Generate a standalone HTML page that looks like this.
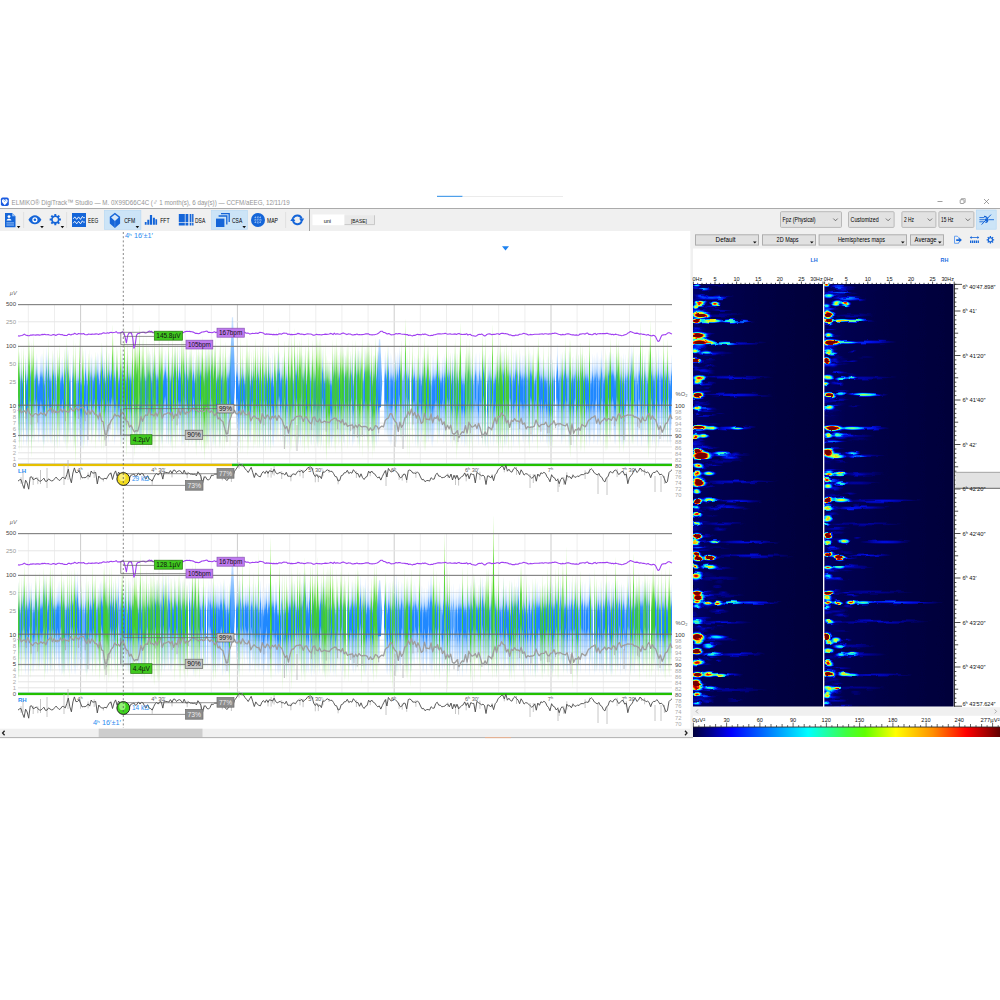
<!DOCTYPE html>
<html><head><meta charset="utf-8"><title>DigiTrack</title>
<style>
html,body{margin:0;padding:0;background:#fff;width:1000px;height:1000px;overflow:hidden}
svg{display:block;position:absolute;left:0;top:0}
text{font-family:"Liberation Sans",sans-serif;}
</style></head><body>
<svg width="1000" height="1000" viewBox="0 0 1000 1000">
<rect x="0.9" y="197.5" width="7.9" height="8.5" rx="1.8" fill="#1a5be0"/>
<path d="M1.9 201c0-2 2-2.4 2.9-1c.9-1.4 2.9-1 2.9 1c0 1.9-1.9 2.9-2.9 4.3c-1-1.4-2.9-2.4-2.9-4.3z" fill="#fff"/>
<path d="M3.6 200.6l1 .9l.9-1.300l.8 1.2" fill="none" stroke="#3c8cf0" stroke-width="0.6"/>
<text x="11.6" y="204.9" font-size="7.8" fill="#949494" textLength="278" lengthAdjust="spacingAndGlyphs">ELMIKO® DigiTrack™ Studio  —  M. 0X99D66C4C  (♂ 1 month(s), 6 day(s))  —  CCFM/aEEG, 12/11/19</text>
<rect x="463" y="196" width="100" height="0.8" fill="#e6e6e6"/>
<rect x="437" y="195.8" width="25.5" height="1.1" fill="#3c96e8"/>
<path d="M937.5 201.5h5" stroke="#777" stroke-width="0.7" fill="none"/>
<rect x="960.2" y="199.7" width="3.8" height="3.8" fill="none" stroke="#777" stroke-width="0.7" rx="0.6"/><path d="M961.4 199.4v-.8h3.8v3.8h-.9" fill="none" stroke="#777" stroke-width="0.6"/>
<path d="M984 199l5 5M989 199l-5 5" stroke="#777" stroke-width="0.7" fill="none"/>
<rect x="0" y="208" width="1000" height="1.2" fill="#ababab"/>
<rect x="0" y="209.2" width="1000" height="21.8" fill="#f0f0f0"/>
<rect x="690.5" y="231" width="309.5" height="17.5" fill="#f0f0f0"/>
<rect x="690.5" y="231" width="2.5" height="506.3" fill="#f0f0f0"/>
<path d="M5 213h7.2l3.3 3.3v11H5z" fill="#1565d8"/>
<path d="M12.2 213v3.3h3.3z" fill="#9cc3f5"/>
<circle cx="9" cy="216.6" r="1.4" fill="#fff"/><path d="M6.6 220.6c0-2.6 4.8-2.6 4.8 0z" fill="#fff"/>
<rect x="6.4" y="222.4" width="7.6" height="1" fill="#9cc3f5"/><rect x="6.4" y="224.5" width="7.6" height="1" fill="#9cc3f5"/>
<path d="M16.8 226h3.6l-1.8 2.2z" fill="#111"/>
<rect x="23.3" y="212" width="0.8" height="16" fill="#dcdcdc"/>
<path d="M28.4 219.8c3.4-6 9.6-6 13 0c-3.4 6-9.6 6-13 0z" fill="#1565d8"/>
<circle cx="34.9" cy="219.8" r="2.6" fill="#fff"/><circle cx="34.9" cy="219.8" r="1.3" fill="#1565d8"/>
<path d="M40.2 226h3.6l-1.8 2.2z" fill="#111"/>
<path d="M60.92 218.62L60.92 220.58L59.38 220.58L58.88 221.79L59.96 222.88L58.58 224.26L57.49 223.18L56.28 223.68L56.28 225.22L54.32 225.22L54.32 223.68L53.11 223.18L52.02 224.26L50.64 222.88L51.72 221.79L51.22 220.58L49.68 220.58L49.68 218.62L51.22 218.62L51.72 217.41L50.64 216.32L52.02 214.94L53.11 216.02L54.32 215.52L54.32 213.98L56.28 213.98L56.28 215.52L57.49 216.02L58.58 214.94L59.96 216.32L58.88 217.41L59.38 218.62z" fill="#1565d8"/><circle cx="55.3" cy="219.6" r="2.5" fill="#f0f0f0"/>
<path d="M60.6 226h3.6l-1.8 2.2z" fill="#111"/>
<rect x="66.3" y="212" width="0.8" height="16" fill="#dcdcdc"/>
<rect x="72" y="213" width="14" height="14" fill="#1565d8"/>
<path d="M73.2 218.8l1.6-1.9l1.9 2.5l1.9-2.5l1.9 2.5l1.9-3l1.4 1.7l1-.7" fill="none" stroke="#fff" stroke-width="0.9"/>
<path d="M73.2 223.2l1.6-1.9l1.9 2.5l1.9-2.5l1.9 2.5l1.9-3l1.4 1.7l1-.7" fill="none" stroke="#fff" stroke-width="0.9"/>
<text x="88" y="222.6" font-size="6.4" fill="#000" textLength="10.2" lengthAdjust="spacingAndGlyphs">EEG</text>
<rect x="104.3" y="210.3" width="36.6" height="19" fill="#cce4f7" stroke="#b5d7f3" stroke-width="0.6"/>
<path d="M114.9 212.8L120.1 216.8V223.6L114.9 228L109.8 223.6V216.8z" fill="#1565d8"/>
<path d="M114.9 214.4L118.7 217.4L114.9 221L111.1 217.4z" fill="#d4e6f8"/><path d="M114.9 221V228" stroke="#5b95e8" stroke-width="0.6"/>
<text x="124.2" y="222.6" font-size="6.4" fill="#000" textLength="11" lengthAdjust="spacingAndGlyphs">CFM</text>
<path d="M135.6 226h3.6l-1.8 2.2z" fill="#111"/>
<path d="M144.8 224.8v-2.8h1.8v2.8zM147.3 224.8v-5h2v5zM149.9 224.8v-9.8h2.2v9.8zM152.9 224.8v-7h2v7zM155.4 224.8v-5.6h1.7v5.6z" fill="#1565d8"/>
<text x="160.2" y="222.6" font-size="6.4" fill="#000" textLength="9.4" lengthAdjust="spacingAndGlyphs">FFT</text>
<rect x="178.8" y="214" width="6.0" height="8.3" fill="#1565d8"/><rect x="178.8" y="223" width="6.0" height="2.5" fill="#1565d8"/><rect x="185.5" y="214" width="2.8" height="8.3" fill="#1565d8"/><rect x="185.5" y="223" width="2.8" height="2.5" fill="#1565d8"/><rect x="189.7" y="214" width="1.7" height="8.3" fill="#1565d8"/><rect x="189.7" y="223" width="1.7" height="2.5" fill="#1565d8"/><rect x="192.1" y="214" width="1.4" height="8.3" fill="#1565d8"/><rect x="192.1" y="223" width="1.4" height="2.5" fill="#1565d8"/>
<text x="195" y="222.6" font-size="6.4" fill="#000" textLength="10.2" lengthAdjust="spacingAndGlyphs">DSA</text>
<rect x="211.5" y="210.3" width="36" height="19" fill="#cce4f7" stroke="#b5d7f3" stroke-width="0.6"/>
<path d="M221 213.6h8.2v8.4" fill="none" stroke="#1565d8" stroke-width="1.3"/><path d="M218.6 216h8.2v8.4" fill="none" stroke="#1565d8" stroke-width="1.3"/><rect x="216" y="218.6" width="8.4" height="8.4" fill="#1565d8"/>
<text x="232" y="222.6" font-size="6.4" fill="#000" textLength="10.2" lengthAdjust="spacingAndGlyphs">CSA</text>
<path d="M242.4 226h3.6l-1.8 2.2z" fill="#111"/>
<circle cx="258" cy="220" r="7" fill="#1565d8"/>
<path d="M255.6 216.4v7.2M258 216v8M260.4 216.4v7.2M254.4 217.6h7.2M254 220h8M254.4 222.4h7.2" stroke="#a9c8f5" stroke-width="0.7" stroke-dasharray="1.6 0.8" fill="none"/>
<text x="267" y="222.6" font-size="6.4" fill="#000" textLength="11" lengthAdjust="spacingAndGlyphs">MAP</text>
<rect x="285.3" y="212" width="0.8" height="16" fill="#dcdcdc"/>
<path d="M293.2 218A4.6 4.6 0 0 1 301.7 218.6" fill="none" stroke="#1565d8" stroke-width="1.9"/><path d="M299.2 218.5h5l-2.5 4.2z" fill="#1565d8"/>
<path d="M301.5 221.7A4.6 4.6 0 0 1 293 221" fill="none" stroke="#1565d8" stroke-width="1.9"/><path d="M290.3 221.1h5l-2.5-4.2z" fill="#1565d8"/>
<rect x="309" y="209.2" width="1" height="21.8" fill="#a2a2a2"/>
<rect x="312.5" y="214.5" width="32" height="10.7" fill="#fff"/>
<text x="327.4" y="222.5" font-size="6.2" fill="#111" text-anchor="middle" textLength="7.4" lengthAdjust="spacingAndGlyphs">uni</text>
<rect x="344.5" y="215.3" width="30" height="9.2" fill="#e9e9e9"/><path d="M344.5 224.6h30v-9.3" fill="none" stroke="#b8b8b8" stroke-width="0.7"/>
<text x="358.9" y="222.7" font-size="6.2" fill="#111" text-anchor="middle" textLength="16" lengthAdjust="spacingAndGlyphs">[BASE]</text>
<rect x="780.5" y="211.7" width="61" height="15.700000000000017" fill="#e2e2e2" stroke="#b9b9b9" stroke-width="1" rx="1"/>
<text x="782.6" y="221.85000000000002" font-size="6.5" fill="#000" textLength="33" lengthAdjust="spacingAndGlyphs">Fpz (Physical)</text>
<path d="M833.3 218.55l2.2 2.2l2.2 -2.2" fill="none" stroke="#444" stroke-width="0.7"/>
<rect x="848.5" y="211.7" width="45.60000000000002" height="15.700000000000017" fill="#e2e2e2" stroke="#b9b9b9" stroke-width="1" rx="1"/>
<text x="850.6" y="221.85000000000002" font-size="6.5" fill="#000" textLength="28" lengthAdjust="spacingAndGlyphs">Customized</text>
<path d="M885.9 218.55l2.2 2.2l2.2 -2.2" fill="none" stroke="#444" stroke-width="0.7"/>
<rect x="901.9" y="211.7" width="34.0" height="15.700000000000017" fill="#e2e2e2" stroke="#b9b9b9" stroke-width="1" rx="1"/>
<text x="904.0" y="221.85000000000002" font-size="6.5" fill="#000" textLength="10" lengthAdjust="spacingAndGlyphs">2 Hz</text>
<path d="M927.6999999999999 218.55l2.2 2.2l2.2 -2.2" fill="none" stroke="#444" stroke-width="0.7"/>
<rect x="938.9" y="211.7" width="35.0" height="15.700000000000017" fill="#e2e2e2" stroke="#b9b9b9" stroke-width="1" rx="1"/>
<text x="941.0" y="221.85000000000002" font-size="6.5" fill="#000" textLength="12.5" lengthAdjust="spacingAndGlyphs">15 Hz</text>
<path d="M965.6999999999999 218.55l2.2 2.2l2.2 -2.2" fill="none" stroke="#444" stroke-width="0.7"/>
<rect x="976.3" y="210" width="19.9" height="19.2" fill="#cce4f7" stroke="#b0d5f5" stroke-width="0.6"/>
<path d="M979.4 217.6h5M979.4 219.7h5.4M979.4 221.8h4.4M988.6 219.7h5.4" stroke="#1565d8" stroke-width="0.9" fill="none"/><path d="M984 216.4c2.4.2 3.6 1.6 3.8 3.4c.2 1.6-1.2 2.8-2.4 2.4" fill="none" stroke="#1565d8" stroke-width="1.3"/><circle cx="986.4" cy="219.8" r="1.6" fill="#1565d8"/><path d="M981.6 224.6l9.4-10" stroke="#1565d8" stroke-width="1"/>
<rect x="695.5" y="234.8" width="63" height="10.299999999999983" fill="#e1e1e1" stroke="#adadad" stroke-width="1"/>
<text x="725.6" y="242.25" font-size="6.7" fill="#000" text-anchor="middle" textLength="20" lengthAdjust="spacingAndGlyphs">Default</text>
<path d="M753 241.4h3.6l-1.8 2.2z" fill="#111"/>
<rect x="762.5" y="234.8" width="53" height="10.299999999999983" fill="#e1e1e1" stroke="#adadad" stroke-width="1"/>
<text x="787.6" y="242.25" font-size="6.7" fill="#000" text-anchor="middle" textLength="22" lengthAdjust="spacingAndGlyphs">2D Maps</text>
<path d="M810 241.4h3.6l-1.8 2.2z" fill="#111"/>
<rect x="819.1" y="234.8" width="87.39999999999998" height="10.299999999999983" fill="#e1e1e1" stroke="#adadad" stroke-width="1"/>
<text x="861.4" y="242.25" font-size="6.7" fill="#000" text-anchor="middle" textLength="47" lengthAdjust="spacingAndGlyphs">Hemispheres maps</text>
<path d="M901 241.4h3.6l-1.8 2.2z" fill="#111"/>
<rect x="910.5" y="234.8" width="33" height="10.299999999999983" fill="#e1e1e1" stroke="#adadad" stroke-width="1"/>
<text x="925.6" y="242.25" font-size="6.7" fill="#000" text-anchor="middle" textLength="22" lengthAdjust="spacingAndGlyphs">Average</text>
<path d="M938 241.4h3.6l-1.8 2.2z" fill="#111"/>
<path d="M954.5 236.2h2.8l1.4 1.4v1.2M958.7 242v1.3h-4.2v-7.1" fill="none" stroke="#5b9af0" stroke-width="0.9"/><path d="M956.2 239.3h3v-1.7l2.7 2.5l-2.7 2.5v-1.7h-3z" fill="#1565d8"/>
<path d="M971 237.5h7" stroke="#1565d8" stroke-width="0.8"/><path d="M971.6 236l-1.8 1.5l1.8 1.5zM977.4 236l1.8 1.5l-1.8 1.5z" fill="#1565d8"/><path d="M970 240.4v2.7h1.3v-2.7zM971.9 240.4v2.7h1.3v-2.7zM973.8 240.4v2.7h1.3v-2.7zM975.7 240.4v2.7h1.3v-2.7zM977.6 240.4v2.7h1.3v-2.7z" fill="#1565d8"/>
<path d="M994.14 239.15L994.14 240.45L993.03 240.43L992.70 241.21L993.51 241.99L992.59 242.91L991.81 242.10L991.03 242.43L991.05 243.54L989.75 243.54L989.77 242.43L988.99 242.10L988.21 242.91L987.29 241.99L988.10 241.21L987.77 240.43L986.66 240.45L986.66 239.15L987.77 239.17L988.10 238.39L987.29 237.61L988.21 236.69L988.99 237.50L989.77 237.17L989.75 236.06L991.05 236.06L991.03 237.17L991.81 237.50L992.59 236.69L993.51 237.61L992.70 238.39L993.03 239.17z" fill="#1565d8"/><circle cx="990.4" cy="239.8" r="1.5" fill="#f0f0f0"/>
<text x="814" y="262" font-size="5.4" fill="#1a6de0" text-anchor="middle" font-weight="bold">LH</text>
<text x="944.5" y="262" font-size="5.4" fill="#1a6de0" text-anchor="middle" font-weight="bold">RH</text>
<text x="125" y="238.4" font-size="6.6" fill="#2b8cf0" textLength="28" lengthAdjust="spacingAndGlyphs">4ʰ 16′±1′</text>
<path d="M502 246.2h7l-3.5 4.2z" fill="#1e82f0"/>
<rect x="0" y="728.7" width="690.5" height="8.6" fill="#f0f0f0"/>
<rect x="98.7" y="728.7" width="103.8" height="8.6" fill="#cdcdcd"/>
<path d="M4.6 730.8l-2 2.2l2 2.2" fill="none" stroke="#222" stroke-width="1.3"/>
<path d="M685 730.8l2 2.2l-2 2.2" fill="none" stroke="#222" stroke-width="1.3"/>
<rect x="0" y="737.2" width="693" height="0.9" fill="#a6a6a6"/>
<rect x="485" y="737.2" width="26" height="0.9" fill="#eeb08c"/>
<defs>
<linearGradient id="gB" x1="0" y1="0" x2="0" y2="1"><stop offset="0" stop-color="#4a9eff" stop-opacity="0.02"/><stop offset="0.1" stop-color="#4a9eff" stop-opacity="0.14"/><stop offset="0.2" stop-color="#4a9eff" stop-opacity="0.42"/><stop offset="0.29" stop-color="#1482ff" stop-opacity="0.84"/><stop offset="0.38" stop-color="#1482ff" stop-opacity="0.95"/><stop offset="0.57" stop-color="#1482ff" stop-opacity="0.95"/><stop offset="0.67" stop-color="#4a9eff" stop-opacity="0.64"/><stop offset="0.8" stop-color="#4a9eff" stop-opacity="0.38"/><stop offset="0.92" stop-color="#4a9eff" stop-opacity="0.17"/><stop offset="1" stop-color="#4a9eff" stop-opacity="0.03"/></linearGradient>
<linearGradient id="gG" x1="0" y1="0" x2="0" y2="1"><stop offset="0" stop-color="#7ee544" stop-opacity="0.03"/><stop offset="0.09" stop-color="#7ee544" stop-opacity="0.2"/><stop offset="0.19" stop-color="#7ee544" stop-opacity="0.5"/><stop offset="0.28" stop-color="#44d418" stop-opacity="0.76"/><stop offset="0.37" stop-color="#44d418" stop-opacity="0.86"/><stop offset="0.58" stop-color="#44d418" stop-opacity="0.86"/><stop offset="0.68" stop-color="#7ee544" stop-opacity="0.58"/><stop offset="0.8" stop-color="#7ee544" stop-opacity="0.36"/><stop offset="0.92" stop-color="#7ee544" stop-opacity="0.17"/><stop offset="1" stop-color="#7ee544" stop-opacity="0.03"/></linearGradient>
<linearGradient id="gS" x1="0" y1="0" x2="0" y2="1"><stop offset="0" stop-color="#4aa0ff" stop-opacity="0.25"/><stop offset="0.5" stop-color="#3a96ff" stop-opacity="0.8"/><stop offset="1" stop-color="#1a84ff" stop-opacity="0.95"/></linearGradient>
</defs>
<g id="chart0">
<rect x="27.8" y="304.8" width="1" height="159.9" fill="#eeeeee"/>
<rect x="54.0" y="304.8" width="1" height="159.9" fill="#eeeeee"/>
<rect x="80.1" y="304.8" width="1" height="159.9" fill="#cdcdcd"/>
<rect x="106.2" y="304.8" width="1" height="159.9" fill="#eeeeee"/>
<rect x="132.4" y="304.8" width="1" height="159.9" fill="#eeeeee"/>
<rect x="158.5" y="304.8" width="1" height="159.9" fill="#eeeeee"/>
<rect x="184.6" y="304.8" width="1" height="159.9" fill="#eeeeee"/>
<rect x="210.8" y="304.8" width="1" height="159.9" fill="#eeeeee"/>
<rect x="236.9" y="304.8" width="1" height="159.9" fill="#cdcdcd"/>
<rect x="263.0" y="304.8" width="1" height="159.9" fill="#eeeeee"/>
<rect x="289.2" y="304.8" width="1" height="159.9" fill="#eeeeee"/>
<rect x="315.3" y="304.8" width="1" height="159.9" fill="#eeeeee"/>
<rect x="341.4" y="304.8" width="1" height="159.9" fill="#eeeeee"/>
<rect x="367.6" y="304.8" width="1" height="159.9" fill="#eeeeee"/>
<rect x="393.7" y="304.8" width="1" height="159.9" fill="#cdcdcd"/>
<rect x="419.8" y="304.8" width="1" height="159.9" fill="#eeeeee"/>
<rect x="446.0" y="304.8" width="1" height="159.9" fill="#eeeeee"/>
<rect x="472.1" y="304.8" width="1" height="159.9" fill="#eeeeee"/>
<rect x="498.2" y="304.8" width="1" height="159.9" fill="#eeeeee"/>
<rect x="524.4" y="304.8" width="1" height="159.9" fill="#eeeeee"/>
<rect x="550.5" y="304.8" width="1" height="159.9" fill="#cdcdcd"/>
<rect x="576.6" y="304.8" width="1" height="159.9" fill="#eeeeee"/>
<rect x="602.8" y="304.8" width="1" height="159.9" fill="#eeeeee"/>
<rect x="628.9" y="304.8" width="1" height="159.9" fill="#eeeeee"/>
<rect x="655.0" y="304.8" width="1" height="159.9" fill="#eeeeee"/>
<rect x="18.0" y="321.3" width="654.0" height="1" fill="#e6e6e6"/>
<rect x="18.0" y="363.0" width="654.0" height="1" fill="#e6e6e6"/>
<rect x="18.0" y="381.0" width="654.0" height="1" fill="#e6e6e6"/>
<rect x="18.0" y="410.7" width="654.0" height="1" fill="#e4e4e4"/>
<rect x="18.0" y="416.7" width="654.0" height="1" fill="#e4e4e4"/>
<rect x="18.0" y="422.6" width="654.0" height="1" fill="#e4e4e4"/>
<rect x="18.0" y="428.6" width="654.0" height="1" fill="#e4e4e4"/>
<rect x="18.0" y="440.4" width="654.0" height="1" fill="#e4e4e4"/>
<rect x="18.0" y="446.4" width="654.0" height="1" fill="#e4e4e4"/>
<rect x="18.0" y="452.3" width="654.0" height="1" fill="#e4e4e4"/>
<rect x="18.0" y="458.3" width="654.0" height="1" fill="#e4e4e4"/>
<g fill="url(#gB)"><rect x="18" y="360.8" width="1" height="78.9" opacity="1"/><rect x="19" y="353.4" width="1" height="89.7" opacity="1"/><rect x="20" y="359.3" width="1" height="82.0" opacity="0.85"/><rect x="21" y="358.0" width="1" height="79.0" opacity="1"/><rect x="22" y="363.9" width="1" height="68.7" opacity="1"/><rect x="23" y="362.2" width="1" height="83.3" opacity="1"/><rect x="25" y="354.6" width="1" height="76.3" opacity="1"/><rect x="26" y="360.6" width="1" height="85.5" opacity="1"/><rect x="27" y="356.3" width="1" height="85.2" opacity="1"/><rect x="28" y="353.4" width="1" height="89.3" opacity="1"/><rect x="29" y="359.3" width="1" height="70.5" opacity="1"/><rect x="30" y="353.3" width="1" height="82.7" opacity="0.85"/><rect x="31" y="358.5" width="1" height="87.5" opacity="1"/><rect x="32" y="358.2" width="1" height="81.5" opacity="1"/><rect x="33" y="363.3" width="1" height="70.4" opacity="1"/><rect x="34" y="355.8" width="1" height="86.6" opacity="0.7"/><rect x="35" y="359.6" width="1" height="69.0" opacity="1"/><rect x="36" y="353.4" width="1" height="75.9" opacity="1"/><rect x="37" y="357.5" width="1" height="74.9" opacity="1"/><rect x="38" y="364.2" width="1" height="78.7" opacity="1"/><rect x="39" y="363.5" width="1" height="73.7" opacity="1"/><rect x="40" y="355.7" width="1" height="76.2" opacity="1"/><rect x="41" y="354.0" width="1" height="82.0" opacity="1"/><rect x="42" y="353.6" width="1" height="88.5" opacity="1"/><rect x="43" y="357.3" width="1" height="89.5" opacity="1"/><rect x="44" y="361.8" width="1" height="83.0" opacity="1"/><rect x="45" y="353.6" width="1" height="85.3" opacity="0.7"/><rect x="46" y="347.3" width="1" height="88.5" opacity="1"/><rect x="47" y="354.9" width="1" height="88.1" opacity="0.85"/><rect x="48" y="352.3" width="1" height="77.1" opacity="1"/><rect x="49" y="357.9" width="1" height="81.8" opacity="1"/><rect x="50" y="357.9" width="1" height="85.2" opacity="1"/><rect x="51" y="357.8" width="1" height="86.0" opacity="0.7"/><rect x="52" y="361.8" width="1" height="73.1" opacity="1"/><rect x="53" y="353.5" width="1" height="78.8" opacity="1"/><rect x="54" y="352.8" width="1" height="94.3" opacity="0.7"/><rect x="55" y="356.3" width="1" height="77.3" opacity="0.85"/><rect x="56" y="361.6" width="1" height="84.7" opacity="0.7"/><rect x="57" y="360.6" width="1" height="68.2" opacity="1"/><rect x="58" y="357.9" width="1" height="72.8" opacity="1"/><rect x="59" y="356.4" width="1" height="90.6" opacity="0.7"/><rect x="60" y="362.0" width="1" height="74.4" opacity="1"/><rect x="61" y="359.1" width="1" height="76.5" opacity="1"/><rect x="62" y="356.9" width="1" height="72.9" opacity="1"/><rect x="63" y="361.8" width="1" height="80.3" opacity="1"/><rect x="64" y="360.7" width="1" height="76.7" opacity="1"/><rect x="65" y="347.7" width="1" height="98.9" opacity="0.85"/><rect x="67" y="345.2" width="1" height="97.7" opacity="1"/><rect x="68" y="363.6" width="1" height="69.7" opacity="1"/><rect x="69" y="360.9" width="1" height="75.4" opacity="1"/><rect x="70" y="357.2" width="1" height="85.7" opacity="0.7"/><rect x="72" y="354.6" width="1" height="86.0" opacity="0.85"/><rect x="73" y="355.7" width="1" height="80.5" opacity="1"/><rect x="74" y="362.1" width="1" height="84.6" opacity="0.7"/><rect x="75" y="363.5" width="1" height="69.3" opacity="1"/><rect x="76" y="362.6" width="1" height="75.9" opacity="0.7"/><rect x="77" y="357.3" width="1" height="89.9" opacity="0.7"/><rect x="78" y="363.3" width="1" height="70.2" opacity="1"/><rect x="79" y="357.5" width="1" height="80.1" opacity="1"/><rect x="80" y="359.4" width="1" height="88.9" opacity="1"/><rect x="81" y="360.3" width="1" height="88.3" opacity="1"/><rect x="82" y="364.1" width="1" height="84.6" opacity="0.7"/><rect x="83" y="359.4" width="1" height="79.2" opacity="0.7"/><rect x="84" y="362.5" width="1" height="82.8" opacity="1"/><rect x="85" y="349.3" width="1" height="87.5" opacity="1"/><rect x="86" y="358.3" width="1" height="80.1" opacity="0.85"/><rect x="87" y="361.4" width="1" height="85.2" opacity="1"/><rect x="88" y="359.7" width="1" height="69.3" opacity="1"/><rect x="89" y="362.5" width="1" height="69.4" opacity="1"/><rect x="90" y="356.6" width="1" height="74.4" opacity="0.85"/><rect x="91" y="354.0" width="1" height="82.5" opacity="1"/><rect x="92" y="356.7" width="1" height="83.7" opacity="0.85"/><rect x="93" y="361.3" width="1" height="73.2" opacity="1"/><rect x="94" y="358.5" width="1" height="69.8" opacity="1"/><rect x="95" y="356.8" width="1" height="80.9" opacity="1"/><rect x="96" y="356.1" width="1" height="75.6" opacity="1"/><rect x="97" y="352.5" width="1" height="81.0" opacity="1"/><rect x="98" y="354.2" width="1" height="87.4" opacity="1"/><rect x="99" y="362.3" width="1" height="80.1" opacity="1"/><rect x="100" y="351.8" width="1" height="85.4" opacity="1"/><rect x="101" y="353.1" width="1" height="84.1" opacity="0.7"/><rect x="102" y="344.9" width="1" height="92.3" opacity="1"/><rect x="103" y="360.9" width="1" height="65.9" opacity="1"/><rect x="104" y="357.1" width="1" height="74.5" opacity="1"/><rect x="105" y="360.8" width="1" height="79.6" opacity="1"/><rect x="106" y="349.8" width="1" height="92.8" opacity="0.85"/><rect x="107" y="357.1" width="1" height="75.2" opacity="1"/><rect x="108" y="361.5" width="1" height="81.2" opacity="1"/><rect x="109" y="353.2" width="1" height="82.0" opacity="1"/><rect x="110" y="360.1" width="1" height="73.5" opacity="1"/><rect x="111" y="354.2" width="1" height="74.7" opacity="1"/><rect x="112" y="358.4" width="1" height="69.5" opacity="1"/><rect x="113" y="361.2" width="1" height="66.5" opacity="1"/><rect x="114" y="351.4" width="1" height="93.3" opacity="1"/><rect x="115" y="359.6" width="1" height="79.5" opacity="0.85"/><rect x="116" y="355.4" width="1" height="74.2" opacity="1"/><rect x="117" y="358.2" width="1" height="79.5" opacity="1"/><rect x="118" y="361.7" width="1" height="76.5" opacity="1"/><rect x="119" y="357.8" width="1" height="79.9" opacity="1"/><rect x="120" y="362.6" width="1" height="67.7" opacity="1"/><rect x="121" y="359.0" width="1" height="86.9" opacity="0.85"/><rect x="122" y="347.4" width="1" height="93.5" opacity="0.85"/><rect x="123" y="358.1" width="1" height="85.4" opacity="1"/><rect x="124" y="356.6" width="1" height="85.2" opacity="1"/><rect x="125" y="357.4" width="1" height="83.6" opacity="1"/><rect x="126" y="361.7" width="1" height="73.6" opacity="0.85"/><rect x="127" y="357.9" width="1" height="71.6" opacity="0.85"/><rect x="128" y="354.7" width="1" height="84.8" opacity="1"/><rect x="129" y="363.5" width="1" height="65.8" opacity="1"/><rect x="130" y="355.6" width="1" height="86.8" opacity="1"/><rect x="131" y="357.8" width="1" height="87.4" opacity="1"/><rect x="133" y="358.7" width="1" height="73.3" opacity="0.7"/><rect x="134" y="360.4" width="1" height="74.7" opacity="1"/><rect x="135" y="357.2" width="1" height="85.5" opacity="1"/><rect x="136" y="352.8" width="1" height="93.6" opacity="1"/><rect x="137" y="354.1" width="1" height="84.3" opacity="1"/><rect x="139" y="359.6" width="1" height="85.7" opacity="1"/><rect x="140" y="358.7" width="1" height="85.6" opacity="1"/><rect x="141" y="355.6" width="1" height="88.8" opacity="1"/><rect x="142" y="356.2" width="1" height="71.9" opacity="1"/><rect x="143" y="359.1" width="1" height="79.9" opacity="1"/><rect x="144" y="357.3" width="1" height="73.5" opacity="1"/><rect x="145" y="360.9" width="1" height="72.8" opacity="0.85"/><rect x="146" y="357.3" width="1" height="86.0" opacity="1"/><rect x="147" y="353.2" width="1" height="89.6" opacity="1"/><rect x="148" y="353.4" width="1" height="78.5" opacity="1"/><rect x="149" y="350.9" width="1" height="92.2" opacity="0.7"/><rect x="150" y="354.0" width="1" height="83.6" opacity="1"/><rect x="151" y="357.8" width="1" height="88.2" opacity="1"/><rect x="152" y="359.9" width="1" height="81.1" opacity="0.85"/><rect x="153" y="351.9" width="1" height="77.9" opacity="1"/><rect x="154" y="355.3" width="1" height="84.2" opacity="0.85"/><rect x="155" y="354.4" width="1" height="76.5" opacity="1"/><rect x="156" y="358.5" width="1" height="77.1" opacity="0.85"/><rect x="157" y="357.3" width="1" height="79.0" opacity="1"/><rect x="158" y="361.5" width="1" height="70.2" opacity="1"/><rect x="159" y="355.3" width="1" height="85.3" opacity="1"/><rect x="160" y="353.7" width="1" height="82.9" opacity="1"/><rect x="161" y="358.0" width="1" height="86.7" opacity="1"/><rect x="162" y="361.6" width="1" height="82.2" opacity="1"/><rect x="163" y="359.4" width="1" height="75.3" opacity="1"/><rect x="164" y="354.7" width="1" height="73.4" opacity="1"/><rect x="165" y="350.2" width="1" height="78.7" opacity="1"/><rect x="166" y="353.7" width="1" height="89.9" opacity="1"/><rect x="167" y="355.4" width="1" height="84.6" opacity="0.7"/><rect x="168" y="351.8" width="1" height="93.0" opacity="1"/><rect x="169" y="359.7" width="1" height="74.6" opacity="0.7"/><rect x="170" y="357.7" width="1" height="88.4" opacity="1"/><rect x="171" y="355.2" width="1" height="85.9" opacity="1"/><rect x="173" y="354.3" width="1" height="83.8" opacity="1"/><rect x="174" y="352.4" width="1" height="86.5" opacity="0.85"/><rect x="175" y="347.8" width="1" height="89.2" opacity="1"/><rect x="176" y="352.2" width="1" height="89.1" opacity="0.7"/><rect x="177" y="357.4" width="1" height="70.9" opacity="1"/><rect x="178" y="361.9" width="1" height="66.1" opacity="1"/><rect x="179" y="346.1" width="1" height="95.7" opacity="1"/><rect x="180" y="356.4" width="1" height="77.3" opacity="1"/><rect x="181" y="355.8" width="1" height="78.6" opacity="0.85"/><rect x="182" y="360.5" width="1" height="84.7" opacity="1"/><rect x="183" y="357.5" width="1" height="86.8" opacity="1"/><rect x="184" y="352.0" width="1" height="79.5" opacity="1"/><rect x="185" y="355.9" width="1" height="78.4" opacity="0.7"/><rect x="186" y="352.0" width="1" height="80.5" opacity="1"/><rect x="187" y="357.1" width="1" height="81.2" opacity="1"/><rect x="188" y="358.1" width="1" height="84.5" opacity="1"/><rect x="189" y="353.8" width="1" height="89.6" opacity="1"/><rect x="190" y="351.3" width="1" height="87.2" opacity="1"/><rect x="191" y="360.9" width="1" height="69.0" opacity="0.85"/><rect x="192" y="356.6" width="1" height="87.2" opacity="1"/><rect x="193" y="354.4" width="1" height="73.3" opacity="1"/><rect x="194" y="361.7" width="1" height="75.5" opacity="1"/><rect x="195" y="360.0" width="1" height="68.4" opacity="1"/><rect x="196" y="359.6" width="1" height="86.9" opacity="0.85"/><rect x="197" y="352.0" width="1" height="82.5" opacity="0.85"/><rect x="198" y="355.5" width="1" height="82.4" opacity="1"/><rect x="199" y="356.9" width="1" height="88.7" opacity="1"/><rect x="200" y="353.0" width="1" height="80.2" opacity="1"/><rect x="201" y="354.7" width="1" height="80.1" opacity="1"/><rect x="202" y="354.6" width="1" height="84.3" opacity="0.85"/><rect x="203" y="359.0" width="1" height="80.9" opacity="1"/><rect x="204" y="356.0" width="1" height="80.9" opacity="0.7"/><rect x="205" y="359.1" width="1" height="76.4" opacity="1"/><rect x="206" y="346.7" width="1" height="94.4" opacity="1"/><rect x="207" y="351.7" width="1" height="92.5" opacity="1"/><rect x="208" y="357.5" width="1" height="73.9" opacity="0.85"/><rect x="209" y="354.2" width="1" height="86.8" opacity="1"/><rect x="210" y="348.5" width="1" height="97.9" opacity="0.7"/><rect x="211" y="346.1" width="1" height="88.3" opacity="0.7"/><rect x="212" y="354.2" width="1" height="81.1" opacity="1"/><rect x="213" y="360.8" width="1" height="85.0" opacity="1"/><rect x="214" y="349.3" width="1" height="79.5" opacity="1"/><rect x="215" y="356.3" width="1" height="90.0" opacity="0.7"/><rect x="216" y="361.6" width="1" height="75.9" opacity="1"/><rect x="217" y="355.5" width="1" height="82.2" opacity="0.85"/><rect x="218" y="359.8" width="1" height="71.1" opacity="1"/><rect x="219" y="356.2" width="1" height="90.7" opacity="1"/><rect x="220" y="354.5" width="1" height="89.0" opacity="0.85"/><rect x="221" y="360.1" width="1" height="71.9" opacity="1"/><rect x="222" y="353.1" width="1" height="86.8" opacity="0.85"/><rect x="223" y="363.2" width="1" height="71.7" opacity="0.85"/><rect x="224" y="358.0" width="1" height="80.2" opacity="0.7"/><rect x="225" y="358.8" width="1" height="81.7" opacity="1"/><rect x="226" y="360.8" width="1" height="76.7" opacity="1"/><rect x="227" y="356.4" width="1" height="76.5" opacity="0.85"/><rect x="228" y="354.4" width="1" height="86.2" opacity="1"/><rect x="229" y="353.3" width="1" height="77.2" opacity="1"/><rect x="230" y="360.4" width="1" height="78.5" opacity="0.7"/><rect x="236" y="355.4" width="1" height="75.6" opacity="1"/><rect x="237" y="357.4" width="1" height="70.6" opacity="1"/><rect x="238" y="362.8" width="1" height="84.7" opacity="1"/><rect x="239" y="362.3" width="1" height="80.8" opacity="1"/><rect x="240" y="364.9" width="1" height="64.0" opacity="1"/><rect x="241" y="359.0" width="1" height="72.6" opacity="1"/><rect x="242" y="359.2" width="1" height="81.6" opacity="1"/><rect x="243" y="359.8" width="1" height="69.3" opacity="1"/><rect x="244" y="363.3" width="1" height="74.9" opacity="1"/><rect x="245" y="362.9" width="1" height="76.7" opacity="1"/><rect x="246" y="357.3" width="1" height="72.1" opacity="0.85"/><rect x="247" y="358.3" width="1" height="84.4" opacity="1"/><rect x="248" y="356.3" width="1" height="75.0" opacity="1"/><rect x="249" y="358.4" width="1" height="81.6" opacity="1"/><rect x="250" y="364.1" width="1" height="78.6" opacity="1"/><rect x="251" y="361.1" width="1" height="68.0" opacity="1"/><rect x="252" y="362.4" width="1" height="66.3" opacity="1"/><rect x="253" y="355.8" width="1" height="76.5" opacity="0.85"/><rect x="254" y="362.8" width="1" height="66.3" opacity="0.85"/><rect x="255" y="360.6" width="1" height="74.0" opacity="1"/><rect x="256" y="357.3" width="1" height="83.2" opacity="0.85"/><rect x="257" y="363.6" width="1" height="65.3" opacity="1"/><rect x="258" y="354.3" width="1" height="84.9" opacity="1"/><rect x="259" y="360.8" width="1" height="86.5" opacity="0.7"/><rect x="260" y="356.4" width="1" height="74.2" opacity="0.7"/><rect x="261" y="360.4" width="1" height="77.8" opacity="0.85"/><rect x="262" y="364.0" width="1" height="71.4" opacity="1"/><rect x="263" y="358.6" width="1" height="89.7" opacity="0.7"/><rect x="264" y="355.7" width="1" height="78.2" opacity="0.85"/><rect x="265" y="364.5" width="1" height="80.1" opacity="1"/><rect x="266" y="359.4" width="1" height="69.7" opacity="1"/><rect x="267" y="362.9" width="1" height="71.8" opacity="1"/><rect x="268" y="344.6" width="1" height="102.5" opacity="1"/><rect x="269" y="355.8" width="1" height="81.4" opacity="1"/><rect x="270" y="357.9" width="1" height="90.1" opacity="0.85"/><rect x="271" y="363.1" width="1" height="68.8" opacity="1"/><rect x="272" y="352.8" width="1" height="92.1" opacity="1"/><rect x="273" y="363.1" width="1" height="84.1" opacity="1"/><rect x="274" y="355.1" width="1" height="81.3" opacity="0.85"/><rect x="275" y="362.5" width="1" height="66.9" opacity="0.85"/><rect x="276" y="360.2" width="1" height="80.3" opacity="0.85"/><rect x="277" y="351.0" width="1" height="83.2" opacity="1"/><rect x="278" y="352.5" width="1" height="76.4" opacity="1"/><rect x="279" y="352.3" width="1" height="76.0" opacity="1"/><rect x="280" y="359.7" width="1" height="81.7" opacity="1"/><rect x="281" y="359.3" width="1" height="73.3" opacity="1"/><rect x="282" y="357.0" width="1" height="84.8" opacity="0.85"/><rect x="283" y="357.7" width="1" height="81.5" opacity="0.85"/><rect x="284" y="352.9" width="1" height="76.3" opacity="0.85"/><rect x="285" y="360.8" width="1" height="83.9" opacity="1"/><rect x="286" y="355.6" width="1" height="85.2" opacity="1"/><rect x="287" y="356.7" width="1" height="90.1" opacity="0.7"/><rect x="288" y="357.3" width="1" height="73.5" opacity="1"/><rect x="289" y="363.1" width="1" height="82.6" opacity="1"/><rect x="290" y="359.9" width="1" height="74.6" opacity="0.85"/><rect x="291" y="356.2" width="1" height="77.5" opacity="1"/><rect x="292" y="359.9" width="1" height="80.9" opacity="1"/><rect x="293" y="362.7" width="1" height="73.9" opacity="0.85"/><rect x="294" y="356.4" width="1" height="84.4" opacity="0.7"/><rect x="295" y="352.7" width="1" height="78.5" opacity="1"/><rect x="296" y="353.9" width="1" height="77.0" opacity="1"/><rect x="297" y="354.7" width="1" height="75.4" opacity="0.7"/><rect x="298" y="354.3" width="1" height="92.0" opacity="1"/><rect x="299" y="362.1" width="1" height="76.3" opacity="1"/><rect x="300" y="357.5" width="1" height="88.4" opacity="1"/><rect x="301" y="352.5" width="1" height="86.0" opacity="0.7"/><rect x="302" y="355.3" width="1" height="84.7" opacity="0.7"/><rect x="303" y="362.0" width="1" height="69.1" opacity="1"/><rect x="304" y="354.5" width="1" height="75.1" opacity="1"/><rect x="305" y="362.2" width="1" height="78.6" opacity="1"/><rect x="306" y="362.7" width="1" height="79.0" opacity="1"/><rect x="307" y="357.1" width="1" height="83.0" opacity="1"/><rect x="308" y="351.8" width="1" height="76.7" opacity="0.85"/><rect x="309" y="359.0" width="1" height="80.0" opacity="1"/><rect x="310" y="356.6" width="1" height="87.6" opacity="0.85"/><rect x="311" y="355.7" width="1" height="89.5" opacity="0.7"/><rect x="312" y="356.0" width="1" height="76.1" opacity="0.7"/><rect x="313" y="358.6" width="1" height="85.8" opacity="0.85"/><rect x="314" y="361.0" width="1" height="76.1" opacity="1"/><rect x="315" y="357.8" width="1" height="82.0" opacity="1"/><rect x="316" y="356.2" width="1" height="86.3" opacity="1"/><rect x="317" y="362.8" width="1" height="84.6" opacity="1"/><rect x="318" y="357.4" width="1" height="85.4" opacity="1"/><rect x="319" y="362.6" width="1" height="78.6" opacity="1"/><rect x="320" y="363.0" width="1" height="69.6" opacity="1"/><rect x="321" y="360.0" width="1" height="86.1" opacity="1"/><rect x="322" y="349.3" width="1" height="84.3" opacity="1"/><rect x="323" y="361.3" width="1" height="73.4" opacity="1"/><rect x="324" y="363.3" width="1" height="71.1" opacity="1"/><rect x="325" y="363.6" width="1" height="68.8" opacity="1"/><rect x="326" y="362.9" width="1" height="65.0" opacity="1"/><rect x="327" y="362.6" width="1" height="82.4" opacity="0.85"/><rect x="328" y="364.2" width="1" height="64.1" opacity="1"/><rect x="329" y="361.5" width="1" height="82.3" opacity="0.7"/><rect x="330" y="362.2" width="1" height="80.0" opacity="1"/><rect x="331" y="361.7" width="1" height="86.0" opacity="1"/><rect x="332" y="361.1" width="1" height="81.0" opacity="1"/><rect x="333" y="353.5" width="1" height="87.3" opacity="1"/><rect x="334" y="353.7" width="1" height="79.6" opacity="1"/><rect x="335" y="363.0" width="1" height="75.9" opacity="1"/><rect x="336" y="355.7" width="1" height="75.8" opacity="1"/><rect x="337" y="359.9" width="1" height="80.4" opacity="1"/><rect x="338" y="361.1" width="1" height="68.7" opacity="0.7"/><rect x="339" y="352.5" width="1" height="91.0" opacity="1"/><rect x="340" y="362.7" width="1" height="79.4" opacity="1"/><rect x="341" y="362.2" width="1" height="75.2" opacity="0.7"/><rect x="342" y="356.2" width="1" height="74.4" opacity="1"/><rect x="343" y="353.3" width="1" height="89.4" opacity="1"/><rect x="344" y="354.3" width="1" height="92.3" opacity="0.7"/><rect x="345" y="355.4" width="1" height="76.7" opacity="1"/><rect x="346" y="357.5" width="1" height="76.9" opacity="1"/><rect x="347" y="362.1" width="1" height="75.1" opacity="1"/><rect x="348" y="358.0" width="1" height="74.6" opacity="0.7"/><rect x="349" y="359.0" width="1" height="86.2" opacity="1"/><rect x="350" y="355.4" width="1" height="79.7" opacity="0.85"/><rect x="351" y="354.7" width="1" height="73.7" opacity="0.85"/><rect x="352" y="353.3" width="1" height="93.3" opacity="1"/><rect x="353" y="362.4" width="1" height="82.1" opacity="0.85"/><rect x="354" y="353.8" width="1" height="88.4" opacity="1"/><rect x="355" y="350.2" width="1" height="83.4" opacity="1"/><rect x="356" y="352.4" width="1" height="81.1" opacity="0.7"/><rect x="357" y="355.3" width="1" height="83.5" opacity="1"/><rect x="358" y="346.2" width="1" height="98.4" opacity="1"/><rect x="359" y="361.0" width="1" height="85.1" opacity="0.85"/><rect x="360" y="352.3" width="1" height="75.3" opacity="1"/><rect x="362" y="362.4" width="1" height="73.7" opacity="1"/><rect x="363" y="360.7" width="1" height="76.2" opacity="0.85"/><rect x="364" y="347.7" width="1" height="92.5" opacity="1"/><rect x="365" y="361.1" width="1" height="72.9" opacity="1"/><rect x="366" y="352.8" width="1" height="84.3" opacity="1"/><rect x="367" y="352.4" width="1" height="88.9" opacity="1"/><rect x="368" y="351.8" width="1" height="84.8" opacity="1"/><rect x="369" y="354.8" width="1" height="76.6" opacity="0.85"/><rect x="370" y="355.3" width="1" height="78.1" opacity="0.85"/><rect x="371" y="360.6" width="1" height="77.7" opacity="1"/><rect x="372" y="362.8" width="1" height="83.9" opacity="1"/><rect x="373" y="354.0" width="1" height="87.6" opacity="1"/><rect x="374" y="355.6" width="1" height="76.8" opacity="1"/><rect x="375" y="355.9" width="1" height="86.6" opacity="1"/><rect x="376" y="354.8" width="1" height="91.6" opacity="1"/><rect x="377" y="352.0" width="1" height="79.3" opacity="0.85"/><rect x="378" y="362.1" width="1" height="79.5" opacity="1"/><rect x="379" y="361.2" width="1" height="72.7" opacity="1"/><rect x="384" y="355.5" width="1" height="81.2" opacity="0.7"/><rect x="385" y="351.1" width="1" height="83.9" opacity="1"/><rect x="386" y="357.4" width="1" height="77.9" opacity="1"/><rect x="387" y="352.7" width="1" height="85.3" opacity="1"/><rect x="388" y="345.1" width="1" height="96.5" opacity="1"/><rect x="389" y="357.8" width="1" height="85.4" opacity="0.7"/><rect x="390" y="352.9" width="1" height="92.8" opacity="0.85"/><rect x="391" y="354.5" width="1" height="89.8" opacity="1"/><rect x="392" y="359.3" width="1" height="77.0" opacity="1"/><rect x="393" y="357.6" width="1" height="69.7" opacity="0.7"/><rect x="394" y="362.5" width="1" height="69.5" opacity="0.85"/><rect x="395" y="351.8" width="1" height="81.4" opacity="1"/><rect x="396" y="355.8" width="1" height="88.3" opacity="1"/><rect x="397" y="352.2" width="1" height="82.0" opacity="1"/><rect x="398" y="353.6" width="1" height="86.3" opacity="0.85"/><rect x="399" y="346.2" width="1" height="84.3" opacity="1"/><rect x="400" y="354.1" width="1" height="83.8" opacity="1"/><rect x="401" y="355.4" width="1" height="84.9" opacity="0.7"/><rect x="402" y="361.6" width="1" height="72.3" opacity="0.7"/><rect x="403" y="354.5" width="1" height="92.4" opacity="0.7"/><rect x="404" y="351.9" width="1" height="85.5" opacity="0.7"/><rect x="405" y="361.5" width="1" height="78.6" opacity="1"/><rect x="406" y="355.4" width="1" height="72.2" opacity="0.85"/><rect x="407" y="358.2" width="1" height="83.2" opacity="0.7"/><rect x="408" y="359.3" width="1" height="68.5" opacity="1"/><rect x="409" y="362.3" width="1" height="69.3" opacity="0.7"/><rect x="411" y="359.1" width="1" height="72.6" opacity="0.7"/><rect x="412" y="360.1" width="1" height="71.4" opacity="1"/><rect x="413" y="361.3" width="1" height="66.4" opacity="1"/><rect x="414" y="356.0" width="1" height="76.2" opacity="1"/><rect x="415" y="357.3" width="1" height="89.8" opacity="0.7"/><rect x="416" y="357.8" width="1" height="81.6" opacity="0.7"/><rect x="417" y="359.1" width="1" height="87.1" opacity="0.7"/><rect x="418" y="357.9" width="1" height="88.6" opacity="0.85"/><rect x="419" y="357.9" width="1" height="76.2" opacity="1"/><rect x="420" y="359.8" width="1" height="74.3" opacity="0.85"/><rect x="421" y="363.7" width="1" height="78.6" opacity="1"/><rect x="422" y="356.8" width="1" height="77.4" opacity="1"/><rect x="423" y="359.2" width="1" height="72.8" opacity="1"/><rect x="424" y="354.6" width="1" height="75.9" opacity="0.7"/><rect x="425" y="362.1" width="1" height="75.0" opacity="1"/><rect x="426" y="354.1" width="1" height="89.0" opacity="1"/><rect x="427" y="360.3" width="1" height="80.4" opacity="1"/><rect x="428" y="358.5" width="1" height="83.7" opacity="0.85"/><rect x="429" y="358.7" width="1" height="80.5" opacity="1"/><rect x="430" y="363.5" width="1" height="76.3" opacity="1"/><rect x="431" y="362.2" width="1" height="83.4" opacity="0.7"/><rect x="432" y="356.4" width="1" height="90.4" opacity="1"/><rect x="433" y="355.0" width="1" height="86.8" opacity="1"/><rect x="434" y="360.2" width="1" height="74.1" opacity="1"/><rect x="435" y="359.1" width="1" height="71.4" opacity="0.85"/><rect x="436" y="354.6" width="1" height="78.8" opacity="1"/><rect x="437" y="359.8" width="1" height="72.1" opacity="1"/><rect x="438" y="354.0" width="1" height="85.0" opacity="1"/><rect x="439" y="361.9" width="1" height="78.0" opacity="1"/><rect x="440" y="363.4" width="1" height="67.9" opacity="1"/><rect x="441" y="362.4" width="1" height="71.9" opacity="1"/><rect x="442" y="357.9" width="1" height="72.3" opacity="1"/><rect x="443" y="356.4" width="1" height="87.6" opacity="0.7"/><rect x="444" y="354.0" width="1" height="84.7" opacity="1"/><rect x="445" y="357.2" width="1" height="75.5" opacity="1"/><rect x="446" y="354.5" width="1" height="81.4" opacity="1"/><rect x="447" y="357.9" width="1" height="69.1" opacity="1"/><rect x="448" y="360.9" width="1" height="67.8" opacity="1"/><rect x="449" y="355.4" width="1" height="75.4" opacity="0.85"/><rect x="450" y="355.6" width="1" height="88.0" opacity="0.85"/><rect x="451" y="361.2" width="1" height="81.5" opacity="1"/><rect x="452" y="353.1" width="1" height="78.8" opacity="1"/><rect x="453" y="358.5" width="1" height="81.2" opacity="0.7"/><rect x="454" y="353.8" width="1" height="85.7" opacity="1"/><rect x="455" y="358.9" width="1" height="86.4" opacity="1"/><rect x="456" y="353.3" width="1" height="87.8" opacity="0.7"/><rect x="457" y="362.7" width="1" height="69.6" opacity="1"/><rect x="458" y="359.2" width="1" height="86.3" opacity="0.85"/><rect x="459" y="362.0" width="1" height="74.8" opacity="1"/><rect x="460" y="358.0" width="1" height="75.9" opacity="0.85"/><rect x="461" y="356.9" width="1" height="87.9" opacity="1"/><rect x="462" y="361.9" width="1" height="80.9" opacity="1"/><rect x="463" y="361.4" width="1" height="78.5" opacity="0.85"/><rect x="464" y="360.8" width="1" height="86.2" opacity="1"/><rect x="465" y="357.2" width="1" height="72.4" opacity="1"/><rect x="466" y="357.9" width="1" height="88.4" opacity="0.7"/><rect x="467" y="361.6" width="1" height="72.9" opacity="1"/><rect x="468" y="353.0" width="1" height="78.9" opacity="1"/><rect x="469" y="353.7" width="1" height="92.5" opacity="0.7"/><rect x="470" y="357.8" width="1" height="81.1" opacity="0.85"/><rect x="471" y="355.8" width="1" height="87.9" opacity="0.85"/><rect x="472" y="359.0" width="1" height="73.6" opacity="1"/><rect x="473" y="363.0" width="1" height="77.0" opacity="0.7"/><rect x="474" y="357.1" width="1" height="82.7" opacity="0.7"/><rect x="475" y="353.5" width="1" height="77.8" opacity="1"/><rect x="476" y="352.3" width="1" height="89.0" opacity="0.7"/><rect x="477" y="359.6" width="1" height="79.9" opacity="0.7"/><rect x="478" y="361.7" width="1" height="83.8" opacity="1"/><rect x="479" y="352.2" width="1" height="82.9" opacity="0.85"/><rect x="480" y="360.3" width="1" height="72.4" opacity="0.85"/><rect x="481" y="361.3" width="1" height="71.0" opacity="0.7"/><rect x="482" y="358.7" width="1" height="85.8" opacity="1"/><rect x="483" y="350.8" width="1" height="77.8" opacity="1"/><rect x="484" y="354.7" width="1" height="85.5" opacity="1"/><rect x="485" y="361.9" width="1" height="84.7" opacity="1"/><rect x="487" y="359.0" width="1" height="88.6" opacity="1"/><rect x="488" y="357.7" width="1" height="77.9" opacity="0.7"/><rect x="489" y="353.9" width="1" height="80.3" opacity="0.7"/><rect x="490" y="354.6" width="1" height="89.5" opacity="0.85"/><rect x="491" y="361.0" width="1" height="72.0" opacity="1"/><rect x="492" y="360.1" width="1" height="68.1" opacity="0.85"/><rect x="493" y="359.8" width="1" height="86.2" opacity="0.85"/><rect x="494" y="360.2" width="1" height="81.5" opacity="1"/><rect x="495" y="359.0" width="1" height="73.5" opacity="1"/><rect x="496" y="362.5" width="1" height="73.9" opacity="0.7"/><rect x="497" y="353.1" width="1" height="82.8" opacity="1"/><rect x="498" y="359.0" width="1" height="87.5" opacity="1"/><rect x="499" y="354.5" width="1" height="86.4" opacity="1"/><rect x="500" y="353.8" width="1" height="89.9" opacity="1"/><rect x="501" y="363.1" width="1" height="70.8" opacity="1"/><rect x="502" y="350.9" width="1" height="81.3" opacity="0.7"/><rect x="503" y="351.4" width="1" height="84.5" opacity="1"/><rect x="504" y="354.6" width="1" height="92.3" opacity="1"/><rect x="505" y="358.1" width="1" height="71.6" opacity="0.7"/><rect x="506" y="358.6" width="1" height="86.7" opacity="1"/><rect x="507" y="362.3" width="1" height="80.3" opacity="0.7"/><rect x="508" y="358.5" width="1" height="78.7" opacity="1"/><rect x="509" y="355.1" width="1" height="73.7" opacity="0.7"/><rect x="510" y="358.8" width="1" height="68.6" opacity="1"/><rect x="511" y="361.6" width="1" height="81.0" opacity="1"/><rect x="512" y="360.3" width="1" height="75.6" opacity="0.7"/><rect x="513" y="352.1" width="1" height="94.4" opacity="1"/><rect x="514" y="361.1" width="1" height="71.2" opacity="1"/><rect x="515" y="351.3" width="1" height="84.4" opacity="1"/><rect x="516" y="354.1" width="1" height="73.9" opacity="0.7"/><rect x="517" y="353.6" width="1" height="79.7" opacity="0.85"/><rect x="518" y="361.8" width="1" height="84.1" opacity="1"/><rect x="519" y="356.3" width="1" height="79.1" opacity="1"/><rect x="520" y="353.7" width="1" height="81.5" opacity="1"/><rect x="521" y="359.7" width="1" height="73.4" opacity="1"/><rect x="522" y="355.0" width="1" height="85.9" opacity="1"/><rect x="523" y="355.5" width="1" height="88.0" opacity="0.85"/><rect x="524" y="355.3" width="1" height="81.7" opacity="1"/><rect x="525" y="355.4" width="1" height="84.6" opacity="1"/><rect x="526" y="354.3" width="1" height="84.8" opacity="0.85"/><rect x="527" y="359.1" width="1" height="74.2" opacity="0.7"/><rect x="528" y="354.0" width="1" height="92.1" opacity="1"/><rect x="529" y="359.8" width="1" height="80.9" opacity="1"/><rect x="530" y="353.1" width="1" height="75.1" opacity="1"/><rect x="531" y="355.0" width="1" height="75.2" opacity="1"/><rect x="532" y="359.3" width="1" height="84.3" opacity="1"/><rect x="533" y="362.6" width="1" height="65.2" opacity="1"/><rect x="534" y="362.7" width="1" height="75.6" opacity="0.85"/><rect x="535" y="362.4" width="1" height="64.8" opacity="1"/><rect x="536" y="353.4" width="1" height="87.2" opacity="0.7"/><rect x="537" y="354.0" width="1" height="80.6" opacity="0.7"/><rect x="538" y="361.5" width="1" height="72.5" opacity="1"/><rect x="539" y="354.2" width="1" height="81.3" opacity="1"/><rect x="540" y="357.1" width="1" height="85.9" opacity="1"/><rect x="541" y="359.7" width="1" height="68.6" opacity="1"/><rect x="542" y="359.3" width="1" height="82.7" opacity="1"/><rect x="543" y="358.1" width="1" height="77.9" opacity="1"/><rect x="544" y="359.9" width="1" height="76.7" opacity="1"/><rect x="545" y="362.1" width="1" height="68.6" opacity="1"/><rect x="546" y="359.6" width="1" height="84.0" opacity="1"/><rect x="547" y="355.8" width="1" height="91.3" opacity="0.7"/><rect x="548" y="356.5" width="1" height="85.1" opacity="1"/><rect x="549" y="363.0" width="1" height="83.3" opacity="1"/><rect x="550" y="353.9" width="1" height="83.6" opacity="1"/><rect x="551" y="360.0" width="1" height="86.8" opacity="0.7"/><rect x="552" y="358.8" width="1" height="78.4" opacity="1"/><rect x="553" y="362.8" width="1" height="65.6" opacity="0.7"/><rect x="554" y="362.0" width="1" height="66.9" opacity="1"/><rect x="556" y="356.2" width="1" height="71.9" opacity="0.85"/><rect x="557" y="344.1" width="1" height="94.5" opacity="1"/><rect x="558" y="362.3" width="1" height="72.7" opacity="1"/><rect x="559" y="360.2" width="1" height="70.3" opacity="0.85"/><rect x="560" y="353.7" width="1" height="82.2" opacity="0.7"/><rect x="561" y="353.4" width="1" height="90.8" opacity="1"/><rect x="562" y="358.4" width="1" height="83.8" opacity="0.7"/><rect x="563" y="357.9" width="1" height="81.6" opacity="1"/><rect x="564" y="350.3" width="1" height="89.1" opacity="1"/><rect x="565" y="353.1" width="1" height="73.7" opacity="1"/><rect x="566" y="358.8" width="1" height="72.2" opacity="1"/><rect x="567" y="357.6" width="1" height="74.8" opacity="0.7"/><rect x="568" y="351.3" width="1" height="94.7" opacity="0.7"/><rect x="569" y="352.6" width="1" height="93.7" opacity="1"/><rect x="570" y="362.0" width="1" height="76.5" opacity="1"/><rect x="571" y="362.7" width="1" height="71.5" opacity="1"/><rect x="572" y="357.5" width="1" height="76.8" opacity="1"/><rect x="573" y="356.0" width="1" height="91.0" opacity="1"/><rect x="574" y="359.9" width="1" height="67.9" opacity="1"/><rect x="575" y="354.7" width="1" height="74.7" opacity="0.7"/><rect x="576" y="358.7" width="1" height="78.7" opacity="1"/><rect x="577" y="358.7" width="1" height="81.9" opacity="1"/><rect x="578" y="354.5" width="1" height="87.2" opacity="1"/><rect x="579" y="360.5" width="1" height="73.1" opacity="0.85"/><rect x="581" y="353.6" width="1" height="85.2" opacity="1"/><rect x="582" y="353.9" width="1" height="82.7" opacity="1"/><rect x="583" y="360.0" width="1" height="74.8" opacity="1"/><rect x="584" y="358.8" width="1" height="82.2" opacity="1"/><rect x="585" y="358.4" width="1" height="70.9" opacity="1"/><rect x="586" y="355.0" width="1" height="90.8" opacity="1"/><rect x="587" y="357.2" width="1" height="78.6" opacity="1"/><rect x="588" y="360.2" width="1" height="79.9" opacity="1"/><rect x="589" y="352.2" width="1" height="94.1" opacity="1"/><rect x="590" y="361.6" width="1" height="79.8" opacity="0.85"/><rect x="591" y="362.6" width="1" height="73.4" opacity="1"/><rect x="592" y="354.0" width="1" height="81.4" opacity="1"/><rect x="593" y="357.1" width="1" height="86.9" opacity="0.85"/><rect x="594" y="355.1" width="1" height="87.4" opacity="1"/><rect x="595" y="357.6" width="1" height="72.9" opacity="1"/><rect x="596" y="352.7" width="1" height="77.5" opacity="0.7"/><rect x="597" y="352.1" width="1" height="93.0" opacity="1"/><rect x="598" y="356.1" width="1" height="85.9" opacity="0.7"/><rect x="599" y="358.3" width="1" height="82.5" opacity="1"/><rect x="600" y="357.1" width="1" height="80.3" opacity="1"/><rect x="601" y="349.4" width="1" height="84.5" opacity="1"/><rect x="602" y="355.0" width="1" height="79.6" opacity="0.7"/><rect x="603" y="359.1" width="1" height="86.6" opacity="1"/><rect x="604" y="360.6" width="1" height="70.3" opacity="1"/><rect x="605" y="359.7" width="1" height="74.7" opacity="1"/><rect x="606" y="358.5" width="1" height="79.6" opacity="1"/><rect x="607" y="357.6" width="1" height="76.0" opacity="0.7"/><rect x="608" y="355.2" width="1" height="73.3" opacity="1"/><rect x="609" y="351.8" width="1" height="87.7" opacity="1"/><rect x="610" y="352.5" width="1" height="79.2" opacity="1"/><rect x="611" y="352.5" width="1" height="82.9" opacity="1"/><rect x="612" y="353.9" width="1" height="74.0" opacity="1"/><rect x="613" y="353.3" width="1" height="81.4" opacity="1"/><rect x="614" y="356.3" width="1" height="87.5" opacity="1"/><rect x="615" y="356.6" width="1" height="88.2" opacity="1"/><rect x="616" y="353.8" width="1" height="75.1" opacity="1"/><rect x="617" y="356.8" width="1" height="71.4" opacity="1"/><rect x="618" y="359.7" width="1" height="68.7" opacity="1"/><rect x="619" y="362.3" width="1" height="81.1" opacity="1"/><rect x="620" y="356.6" width="1" height="84.6" opacity="1"/><rect x="621" y="362.2" width="1" height="83.6" opacity="0.7"/><rect x="622" y="358.1" width="1" height="87.4" opacity="1"/><rect x="623" y="353.5" width="1" height="90.1" opacity="1"/><rect x="624" y="359.1" width="1" height="86.8" opacity="0.7"/><rect x="625" y="354.3" width="1" height="88.0" opacity="1"/><rect x="626" y="361.3" width="1" height="66.9" opacity="0.7"/><rect x="627" y="357.4" width="1" height="72.0" opacity="0.85"/><rect x="628" y="362.6" width="1" height="69.7" opacity="1"/><rect x="629" y="355.6" width="1" height="88.8" opacity="0.7"/><rect x="630" y="353.3" width="1" height="80.9" opacity="1"/><rect x="631" y="345.0" width="1" height="85.4" opacity="0.85"/><rect x="632" y="348.4" width="1" height="94.4" opacity="1"/><rect x="634" y="362.1" width="1" height="67.6" opacity="1"/><rect x="635" y="355.4" width="1" height="86.4" opacity="0.7"/><rect x="636" y="354.1" width="1" height="85.7" opacity="0.7"/><rect x="637" y="360.7" width="1" height="85.3" opacity="1"/><rect x="638" y="354.6" width="1" height="77.1" opacity="0.7"/><rect x="639" y="353.6" width="1" height="77.8" opacity="1"/><rect x="640" y="353.9" width="1" height="84.7" opacity="0.85"/><rect x="641" y="355.8" width="1" height="90.9" opacity="1"/><rect x="642" y="354.0" width="1" height="82.3" opacity="0.85"/><rect x="643" y="362.4" width="1" height="79.3" opacity="0.7"/><rect x="644" y="354.5" width="1" height="73.7" opacity="0.85"/><rect x="645" y="353.0" width="1" height="87.6" opacity="0.85"/><rect x="646" y="360.6" width="1" height="72.1" opacity="0.7"/><rect x="647" y="358.8" width="1" height="87.8" opacity="1"/><rect x="648" y="361.3" width="1" height="84.3" opacity="1"/><rect x="649" y="355.0" width="1" height="73.3" opacity="0.85"/><rect x="650" y="362.6" width="1" height="73.1" opacity="1"/><rect x="651" y="354.8" width="1" height="75.3" opacity="1"/><rect x="652" y="356.8" width="1" height="88.6" opacity="1"/><rect x="653" y="357.2" width="1" height="83.1" opacity="1"/><rect x="654" y="357.0" width="1" height="87.0" opacity="1"/><rect x="655" y="355.6" width="1" height="72.9" opacity="0.7"/><rect x="656" y="362.1" width="1" height="76.0" opacity="1"/><rect x="657" y="359.9" width="1" height="70.6" opacity="1"/><rect x="658" y="347.3" width="1" height="99.8" opacity="1"/><rect x="659" y="354.9" width="1" height="88.4" opacity="0.7"/><rect x="660" y="355.8" width="1" height="74.6" opacity="0.7"/><rect x="661" y="355.1" width="1" height="86.4" opacity="1"/><rect x="662" y="359.6" width="1" height="71.0" opacity="1"/><rect x="663" y="357.0" width="1" height="85.9" opacity="0.7"/><rect x="664" y="353.4" width="1" height="84.6" opacity="0.85"/><rect x="665" y="362.1" width="1" height="78.0" opacity="1"/><rect x="666" y="357.2" width="1" height="72.8" opacity="1"/><rect x="667" y="362.3" width="1" height="81.3" opacity="1"/><rect x="668" y="356.8" width="1" height="70.3" opacity="0.7"/><rect x="669" y="360.7" width="1" height="81.8" opacity="1"/><rect x="670" y="362.2" width="1" height="83.6" opacity="1"/><rect x="671" y="355.0" width="1" height="74.2" opacity="1"/></g>
<g fill="url(#gG)"><rect x="18" y="343.4" width="1" height="91.1" opacity="1"/><rect x="19" y="351.6" width="1" height="100.0" opacity="1"/><rect x="21" y="347.7" width="1" height="103.1" opacity="0.55"/><rect x="23" y="347.3" width="1" height="87.1" opacity="1"/><rect x="25" y="358.6" width="1" height="76.4" opacity="0.7"/><rect x="28" y="334.4" width="1" height="114.4" opacity="0.85"/><rect x="29" y="340.1" width="1" height="95.9" opacity="1"/><rect x="31" y="342.7" width="1" height="114.2" opacity="1"/><rect x="32" y="346.9" width="1" height="91.5" opacity="1"/><rect x="33" y="335.5" width="1" height="107.0" opacity="0.85"/><rect x="36" y="359.0" width="1" height="79.0" opacity="0.7"/><rect x="43" y="348.0" width="1" height="104.2" opacity="0.55"/><rect x="46" y="360.5" width="1" height="80.8" opacity="0.85"/><rect x="48" y="338.2" width="1" height="104.7" opacity="0.55"/><rect x="52" y="350.4" width="1" height="93.3" opacity="1"/><rect x="54" y="358.2" width="1" height="91.3" opacity="0.55"/><rect x="57" y="349.6" width="1" height="98.9" opacity="1"/><rect x="58" y="356.8" width="1" height="81.7" opacity="1"/><rect x="59" y="344.2" width="1" height="93.0" opacity="0.85"/><rect x="64" y="348.9" width="1" height="94.8" opacity="1"/><rect x="66" y="336.1" width="1" height="114.9" opacity="0.7"/><rect x="67" y="354.2" width="1" height="97.1" opacity="0.7"/><rect x="68" y="350.2" width="1" height="93.6" opacity="1"/><rect x="73" y="336.7" width="1" height="114.3" opacity="0.55"/><rect x="74" y="358.3" width="1" height="87.8" opacity="1"/><rect x="75" y="343.1" width="1" height="119.9" opacity="1"/><rect x="79" y="337.1" width="1" height="101.5" opacity="0.85"/><rect x="82" y="345.9" width="1" height="89.5" opacity="1"/><rect x="83" y="350.8" width="1" height="98.9" opacity="1"/><rect x="88" y="353.6" width="1" height="82.0" opacity="1"/><rect x="89" y="349.4" width="1" height="84.6" opacity="0.55"/><rect x="91" y="357.9" width="1" height="86.0" opacity="0.85"/><rect x="95" y="352.1" width="1" height="96.8" opacity="1"/><rect x="96" y="359.7" width="1" height="78.9" opacity="1"/><rect x="101" y="342.8" width="1" height="106.6" opacity="1"/><rect x="103" y="357.7" width="1" height="93.2" opacity="0.55"/><rect x="104" y="359.4" width="1" height="87.3" opacity="1"/><rect x="106" y="341.0" width="1" height="94.5" opacity="0.7"/><rect x="108" y="352.6" width="1" height="81.4" opacity="1"/><rect x="113" y="337.2" width="1" height="99.9" opacity="0.55"/><rect x="116" y="345.9" width="1" height="91.6" opacity="0.85"/><rect x="117" y="349.3" width="1" height="85.3" opacity="1"/><rect x="120" y="339.3" width="1" height="108.5" opacity="1"/><rect x="121" y="348.8" width="1" height="87.0" opacity="0.7"/><rect x="123" y="356.1" width="1" height="80.6" opacity="1"/><rect x="124" y="327.0" width="1" height="117.6" opacity="1"/><rect x="126" y="356.2" width="1" height="100.0" opacity="1"/><rect x="127" y="340.2" width="1" height="100.1" opacity="1"/><rect x="129" y="358.0" width="1" height="82.8" opacity="0.85"/><rect x="131" y="360.8" width="1" height="86.5" opacity="0.85"/><rect x="132" y="336.0" width="1" height="108.0" opacity="1"/><rect x="134" y="337.7" width="1" height="118.3" opacity="1"/><rect x="135" y="336.6" width="1" height="102.2" opacity="1"/><rect x="136" y="346.6" width="1" height="101.6" opacity="1"/><rect x="137" y="341.2" width="1" height="104.8" opacity="1"/><rect x="138" y="343.1" width="1" height="100.9" opacity="0.85"/><rect x="139" y="325.6" width="1" height="115.4" opacity="1"/><rect x="140" y="349.4" width="1" height="100.8" opacity="0.55"/><rect x="141" y="347.5" width="1" height="94.2" opacity="0.55"/><rect x="142" y="339.4" width="1" height="109.8" opacity="1"/><rect x="143" y="336.7" width="1" height="110.6" opacity="0.85"/><rect x="144" y="360.1" width="1" height="76.7" opacity="0.85"/><rect x="146" y="335.9" width="1" height="113.8" opacity="0.55"/><rect x="147" y="346.0" width="1" height="87.6" opacity="0.55"/><rect x="148" y="344.8" width="1" height="106.7" opacity="0.7"/><rect x="149" y="351.3" width="1" height="86.9" opacity="1"/><rect x="150" y="354.1" width="1" height="95.2" opacity="0.7"/><rect x="152" y="344.0" width="1" height="108.2" opacity="0.55"/><rect x="153" y="356.8" width="1" height="92.3" opacity="0.7"/><rect x="154" y="337.3" width="1" height="114.1" opacity="1"/><rect x="155" y="353.8" width="1" height="96.6" opacity="0.7"/><rect x="158" y="349.8" width="1" height="101.4" opacity="0.55"/><rect x="159" y="339.0" width="1" height="112.5" opacity="1"/><rect x="160" y="348.5" width="1" height="95.2" opacity="0.7"/><rect x="161" y="342.1" width="1" height="98.7" opacity="1"/><rect x="162" y="340.7" width="1" height="108.7" opacity="0.85"/><rect x="168" y="338.7" width="1" height="105.6" opacity="1"/><rect x="169" y="353.2" width="1" height="86.3" opacity="0.55"/><rect x="171" y="357.0" width="1" height="90.9" opacity="1"/><rect x="172" y="335.9" width="1" height="116.7" opacity="0.85"/><rect x="174" y="345.5" width="1" height="89.3" opacity="1"/><rect x="175" y="343.2" width="1" height="106.2" opacity="1"/><rect x="177" y="343.9" width="1" height="98.5" opacity="1"/><rect x="181" y="337.3" width="1" height="109.4" opacity="1"/><rect x="182" y="335.5" width="1" height="102.8" opacity="0.55"/><rect x="183" y="339.7" width="1" height="95.4" opacity="1"/><rect x="184" y="353.8" width="1" height="92.9" opacity="0.55"/><rect x="186" y="337.6" width="1" height="106.2" opacity="0.7"/><rect x="188" y="356.0" width="1" height="92.2" opacity="0.85"/><rect x="189" y="348.5" width="1" height="89.4" opacity="0.7"/><rect x="190" y="346.9" width="1" height="87.0" opacity="0.7"/><rect x="191" y="345.9" width="1" height="99.1" opacity="1"/><rect x="195" y="357.2" width="1" height="92.3" opacity="1"/><rect x="196" y="342.9" width="1" height="112.9" opacity="0.7"/><rect x="197" y="354.8" width="1" height="88.6" opacity="0.7"/><rect x="198" y="343.6" width="1" height="93.7" opacity="0.7"/><rect x="199" y="351.4" width="1" height="93.7" opacity="1"/><rect x="201" y="348.4" width="1" height="103.0" opacity="1"/><rect x="202" y="336.3" width="1" height="103.0" opacity="1"/><rect x="203" y="357.8" width="1" height="91.1" opacity="1"/><rect x="204" y="358.5" width="1" height="101.8" opacity="1"/><rect x="205" y="344.6" width="1" height="105.0" opacity="1"/><rect x="206" y="354.9" width="1" height="93.9" opacity="1"/><rect x="207" y="349.3" width="1" height="96.9" opacity="0.7"/><rect x="208" y="343.7" width="1" height="105.8" opacity="1"/><rect x="209" y="347.1" width="1" height="87.7" opacity="1"/><rect x="211" y="345.4" width="1" height="90.3" opacity="1"/><rect x="212" y="336.3" width="1" height="109.5" opacity="0.85"/><rect x="213" y="356.8" width="1" height="82.5" opacity="1"/><rect x="214" y="344.9" width="1" height="100.6" opacity="1"/><rect x="215" y="338.8" width="1" height="110.4" opacity="1"/><rect x="217" y="360.6" width="1" height="76.5" opacity="1"/><rect x="218" y="353.2" width="1" height="87.3" opacity="0.55"/><rect x="219" y="347.4" width="1" height="101.4" opacity="1"/><rect x="220" y="335.3" width="1" height="112.9" opacity="0.7"/><rect x="222" y="349.0" width="1" height="104.0" opacity="0.55"/><rect x="223" y="344.0" width="1" height="99.7" opacity="0.55"/><rect x="224" y="356.8" width="1" height="92.8" opacity="1"/><rect x="225" y="341.9" width="1" height="99.5" opacity="1"/><rect x="226" y="356.7" width="1" height="88.8" opacity="0.7"/><rect x="229" y="355.5" width="1" height="93.2" opacity="0.55"/><rect x="230" y="343.6" width="1" height="103.0" opacity="0.85"/><rect x="240" y="337.2" width="1" height="116.0" opacity="0.7"/><rect x="242" y="344.7" width="1" height="108.2" opacity="0.7"/><rect x="245" y="354.7" width="1" height="84.9" opacity="0.55"/><rect x="246" y="337.3" width="1" height="98.2" opacity="0.55"/><rect x="247" y="338.5" width="1" height="117.1" opacity="0.7"/><rect x="248" y="351.7" width="1" height="98.5" opacity="1"/><rect x="249" y="345.1" width="1" height="89.7" opacity="0.55"/><rect x="251" y="351.9" width="1" height="87.2" opacity="0.7"/><rect x="253" y="349.5" width="1" height="99.8" opacity="0.85"/><rect x="254" y="356.9" width="1" height="88.4" opacity="1"/><rect x="255" y="338.8" width="1" height="106.6" opacity="1"/><rect x="257" y="347.3" width="1" height="100.6" opacity="1"/><rect x="259" y="359.4" width="1" height="88.8" opacity="1"/><rect x="260" y="343.9" width="1" height="96.4" opacity="1"/><rect x="262" y="340.9" width="1" height="102.6" opacity="1"/><rect x="263" y="352.8" width="1" height="82.9" opacity="0.7"/><rect x="265" y="346.1" width="1" height="105.3" opacity="0.85"/><rect x="266" y="347.6" width="1" height="87.0" opacity="0.55"/><rect x="268" y="351.7" width="1" height="89.5" opacity="1"/><rect x="270" y="357.6" width="1" height="94.2" opacity="0.85"/><rect x="274" y="346.3" width="1" height="90.7" opacity="0.85"/><rect x="275" y="353.4" width="1" height="85.7" opacity="1"/><rect x="277" y="357.6" width="1" height="83.8" opacity="0.55"/><rect x="278" y="327.7" width="1" height="114.9" opacity="0.55"/><rect x="282" y="357.3" width="1" height="83.0" opacity="0.7"/><rect x="283" y="356.6" width="1" height="89.7" opacity="0.55"/><rect x="284" y="341.2" width="1" height="94.8" opacity="1"/><rect x="285" y="361.3" width="1" height="90.2" opacity="0.7"/><rect x="288" y="338.0" width="1" height="106.0" opacity="1"/><rect x="289" y="356.2" width="1" height="80.7" opacity="0.85"/><rect x="290" y="354.8" width="1" height="96.7" opacity="0.85"/><rect x="291" y="335.5" width="1" height="114.4" opacity="1"/><rect x="292" y="344.5" width="1" height="94.3" opacity="0.7"/><rect x="294" y="328.5" width="1" height="113.1" opacity="0.85"/><rect x="295" y="356.5" width="1" height="94.1" opacity="0.85"/><rect x="297" y="342.7" width="1" height="100.3" opacity="1"/><rect x="298" y="358.9" width="1" height="85.1" opacity="1"/><rect x="299" y="340.4" width="1" height="98.0" opacity="1"/><rect x="300" y="344.5" width="1" height="90.3" opacity="1"/><rect x="301" y="335.5" width="1" height="98.5" opacity="0.55"/><rect x="302" y="355.2" width="1" height="92.9" opacity="0.85"/><rect x="303" y="355.5" width="1" height="90.3" opacity="0.55"/><rect x="304" y="359.3" width="1" height="93.8" opacity="1"/><rect x="305" y="345.0" width="1" height="90.3" opacity="1"/><rect x="307" y="350.5" width="1" height="97.6" opacity="1"/><rect x="308" y="335.4" width="1" height="117.0" opacity="1"/><rect x="309" y="349.0" width="1" height="93.2" opacity="0.85"/><rect x="311" y="359.7" width="1" height="86.1" opacity="1"/><rect x="312" y="340.4" width="1" height="97.5" opacity="1"/><rect x="313" y="349.5" width="1" height="89.0" opacity="0.55"/><rect x="314" y="346.3" width="1" height="104.5" opacity="0.55"/><rect x="315" y="354.9" width="1" height="82.0" opacity="0.55"/><rect x="316" y="332.5" width="1" height="111.7" opacity="1"/><rect x="317" y="339.5" width="1" height="107.1" opacity="0.85"/><rect x="318" y="342.1" width="1" height="105.8" opacity="0.85"/><rect x="319" y="338.9" width="1" height="105.4" opacity="1"/><rect x="320" y="335.6" width="1" height="114.5" opacity="0.7"/><rect x="321" y="343.8" width="1" height="101.6" opacity="0.55"/><rect x="323" y="345.4" width="1" height="105.5" opacity="0.55"/><rect x="325" y="341.9" width="1" height="109.8" opacity="0.55"/><rect x="326" y="355.7" width="1" height="105.2" opacity="1"/><rect x="327" y="359.6" width="1" height="74.1" opacity="1"/><rect x="328" y="360.7" width="1" height="87.9" opacity="1"/><rect x="329" y="361.1" width="1" height="88.7" opacity="1"/><rect x="332" y="340.0" width="1" height="99.6" opacity="0.85"/><rect x="333" y="360.1" width="1" height="73.4" opacity="0.85"/><rect x="334" y="344.9" width="1" height="103.9" opacity="0.85"/><rect x="335" y="346.4" width="1" height="106.0" opacity="1"/><rect x="336" y="337.9" width="1" height="106.2" opacity="0.85"/><rect x="337" y="349.2" width="1" height="88.9" opacity="0.7"/><rect x="338" y="355.0" width="1" height="91.2" opacity="1"/><rect x="340" y="343.8" width="1" height="92.3" opacity="1"/><rect x="341" y="345.9" width="1" height="106.0" opacity="1"/><rect x="342" y="344.7" width="1" height="95.4" opacity="1"/><rect x="343" y="347.4" width="1" height="96.0" opacity="0.85"/><rect x="345" y="355.3" width="1" height="80.3" opacity="1"/><rect x="346" y="347.5" width="1" height="91.6" opacity="0.7"/><rect x="347" y="344.0" width="1" height="104.7" opacity="1"/><rect x="348" y="341.3" width="1" height="100.6" opacity="0.55"/><rect x="349" y="358.7" width="1" height="76.1" opacity="0.55"/><rect x="350" y="351.4" width="1" height="84.8" opacity="1"/><rect x="352" y="339.8" width="1" height="102.2" opacity="0.55"/><rect x="354" y="356.8" width="1" height="81.8" opacity="1"/><rect x="355" y="340.3" width="1" height="98.2" opacity="1"/><rect x="357" y="348.5" width="1" height="98.5" opacity="0.85"/><rect x="358" y="351.0" width="1" height="87.2" opacity="1"/><rect x="359" y="350.6" width="1" height="101.0" opacity="1"/><rect x="360" y="357.9" width="1" height="83.1" opacity="1"/><rect x="361" y="345.1" width="1" height="90.6" opacity="1"/><rect x="362" y="335.3" width="1" height="121.5" opacity="0.7"/><rect x="365" y="348.4" width="1" height="86.0" opacity="1"/><rect x="366" y="346.4" width="1" height="91.9" opacity="0.85"/><rect x="367" y="342.6" width="1" height="106.3" opacity="1"/><rect x="368" y="340.6" width="1" height="111.7" opacity="1"/><rect x="369" y="342.4" width="1" height="101.5" opacity="0.7"/><rect x="371" y="344.3" width="1" height="99.7" opacity="1"/><rect x="372" y="356.4" width="1" height="102.3" opacity="0.55"/><rect x="373" y="355.4" width="1" height="96.0" opacity="1"/><rect x="374" y="355.0" width="1" height="97.6" opacity="1"/><rect x="375" y="338.0" width="1" height="98.7" opacity="1"/><rect x="377" y="350.3" width="1" height="84.5" opacity="1"/><rect x="387" y="345.8" width="1" height="89.7" opacity="0.7"/><rect x="395" y="359.6" width="1" height="82.9" opacity="1"/><rect x="400" y="351.3" width="1" height="87.1" opacity="1"/><rect x="401" y="340.7" width="1" height="100.6" opacity="0.85"/><rect x="407" y="350.9" width="1" height="104.3" opacity="0.55"/><rect x="409" y="339.4" width="1" height="119.1" opacity="0.55"/><rect x="412" y="342.2" width="1" height="102.0" opacity="0.85"/><rect x="417" y="354.7" width="1" height="94.0" opacity="0.85"/><rect x="418" y="332.6" width="1" height="116.3" opacity="0.55"/><rect x="422" y="358.2" width="1" height="86.1" opacity="0.55"/><rect x="423" y="348.9" width="1" height="98.3" opacity="0.55"/><rect x="424" y="336.9" width="1" height="113.5" opacity="1"/><rect x="425" y="357.6" width="1" height="93.3" opacity="1"/><rect x="427" y="345.0" width="1" height="90.0" opacity="1"/><rect x="428" y="344.3" width="1" height="97.4" opacity="0.85"/><rect x="430" y="354.1" width="1" height="81.6" opacity="0.55"/><rect x="437" y="335.4" width="1" height="108.2" opacity="1"/><rect x="439" y="359.6" width="1" height="76.4" opacity="1"/><rect x="445" y="361.0" width="1" height="81.4" opacity="1"/><rect x="446" y="337.2" width="1" height="99.9" opacity="1"/><rect x="448" y="349.4" width="1" height="90.6" opacity="0.55"/><rect x="450" y="352.7" width="1" height="86.3" opacity="1"/><rect x="452" y="358.5" width="1" height="88.9" opacity="0.7"/><rect x="454" y="343.7" width="1" height="100.8" opacity="0.7"/><rect x="455" y="336.8" width="1" height="97.4" opacity="0.55"/><rect x="456" y="360.1" width="1" height="99.6" opacity="0.7"/><rect x="457" y="353.5" width="1" height="97.1" opacity="1"/><rect x="459" y="347.1" width="1" height="91.7" opacity="1"/><rect x="460" y="358.7" width="1" height="80.7" opacity="0.7"/><rect x="465" y="353.7" width="1" height="91.8" opacity="1"/><rect x="466" y="338.3" width="1" height="100.3" opacity="0.55"/><rect x="467" y="346.3" width="1" height="101.0" opacity="0.7"/><rect x="468" y="345.8" width="1" height="93.3" opacity="0.85"/><rect x="469" y="338.8" width="1" height="119.6" opacity="0.7"/><rect x="470" y="349.3" width="1" height="94.5" opacity="0.55"/><rect x="472" y="342.7" width="1" height="107.0" opacity="0.7"/><rect x="482" y="334.2" width="1" height="112.0" opacity="1"/><rect x="484" y="354.6" width="1" height="90.1" opacity="1"/><rect x="485" y="336.2" width="1" height="112.0" opacity="0.7"/><rect x="488" y="356.2" width="1" height="96.7" opacity="0.55"/><rect x="490" y="359.6" width="1" height="79.5" opacity="0.55"/><rect x="492" y="353.5" width="1" height="83.1" opacity="0.55"/><rect x="496" y="356.0" width="1" height="88.5" opacity="1"/><rect x="497" y="345.0" width="1" height="98.4" opacity="0.85"/><rect x="498" y="359.8" width="1" height="95.0" opacity="1"/><rect x="499" y="347.4" width="1" height="89.3" opacity="0.7"/><rect x="500" y="338.6" width="1" height="109.2" opacity="1"/><rect x="501" y="351.8" width="1" height="87.1" opacity="1"/><rect x="502" y="361.0" width="1" height="91.5" opacity="1"/><rect x="504" y="346.7" width="1" height="98.0" opacity="1"/><rect x="505" y="358.9" width="1" height="88.3" opacity="0.55"/><rect x="506" y="343.4" width="1" height="93.7" opacity="1"/><rect x="507" y="355.1" width="1" height="78.5" opacity="1"/><rect x="508" y="350.2" width="1" height="100.3" opacity="1"/><rect x="511" y="339.7" width="1" height="113.1" opacity="0.55"/><rect x="516" y="350.0" width="1" height="91.0" opacity="1"/><rect x="519" y="347.7" width="1" height="105.2" opacity="0.7"/><rect x="525" y="338.4" width="1" height="106.7" opacity="0.55"/><rect x="528" y="342.3" width="1" height="100.5" opacity="0.55"/><rect x="529" y="349.8" width="1" height="103.4" opacity="0.85"/><rect x="532" y="354.3" width="1" height="79.1" opacity="1"/><rect x="533" y="345.5" width="1" height="91.3" opacity="0.7"/><rect x="537" y="346.2" width="1" height="106.2" opacity="1"/><rect x="538" y="336.7" width="1" height="97.2" opacity="1"/><rect x="543" y="344.9" width="1" height="97.4" opacity="0.7"/><rect x="548" y="341.4" width="1" height="110.7" opacity="0.55"/><rect x="550" y="359.5" width="1" height="86.8" opacity="1"/><rect x="552" y="359.8" width="1" height="88.9" opacity="0.85"/><rect x="561" y="358.9" width="1" height="81.4" opacity="0.7"/><rect x="562" y="352.1" width="1" height="83.9" opacity="1"/><rect x="565" y="336.4" width="1" height="109.3" opacity="0.7"/><rect x="569" y="339.1" width="1" height="113.9" opacity="0.7"/><rect x="570" y="340.3" width="1" height="116.9" opacity="1"/><rect x="572" y="357.0" width="1" height="85.3" opacity="0.55"/><rect x="576" y="349.0" width="1" height="102.3" opacity="1"/><rect x="578" y="354.5" width="1" height="81.5" opacity="1"/><rect x="580" y="342.9" width="1" height="108.9" opacity="1"/><rect x="581" y="354.2" width="1" height="96.9" opacity="0.7"/><rect x="582" y="345.7" width="1" height="97.3" opacity="1"/><rect x="584" y="355.9" width="1" height="96.6" opacity="1"/><rect x="589" y="336.5" width="1" height="102.9" opacity="1"/><rect x="600" y="359.4" width="1" height="86.3" opacity="0.55"/><rect x="605" y="349.1" width="1" height="102.3" opacity="0.85"/><rect x="606" y="354.3" width="1" height="96.3" opacity="1"/><rect x="607" y="361.0" width="1" height="88.7" opacity="1"/><rect x="609" y="352.1" width="1" height="86.7" opacity="1"/><rect x="610" y="338.3" width="1" height="103.8" opacity="1"/><rect x="616" y="332.4" width="1" height="101.4" opacity="0.55"/><rect x="617" y="348.3" width="1" height="87.6" opacity="0.7"/><rect x="618" y="340.3" width="1" height="102.3" opacity="1"/><rect x="619" y="353.1" width="1" height="99.8" opacity="1"/><rect x="621" y="355.5" width="1" height="81.6" opacity="0.85"/><rect x="623" y="358.3" width="1" height="93.7" opacity="1"/><rect x="628" y="348.5" width="1" height="99.0" opacity="0.85"/><rect x="631" y="356.3" width="1" height="87.0" opacity="0.85"/><rect x="632" y="352.3" width="1" height="92.4" opacity="1"/><rect x="633" y="343.6" width="1" height="101.1" opacity="0.85"/><rect x="640" y="322.5" width="1" height="112.5" opacity="0.85"/><rect x="642" y="340.7" width="1" height="99.6" opacity="0.7"/><rect x="644" y="359.6" width="1" height="74.5" opacity="1"/><rect x="648" y="349.2" width="1" height="109.1" opacity="1"/><rect x="649" y="339.8" width="1" height="109.6" opacity="1"/><rect x="650" y="345.3" width="1" height="104.1" opacity="0.55"/><rect x="652" y="350.7" width="1" height="91.1" opacity="0.55"/><rect x="656" y="349.7" width="1" height="100.0" opacity="1"/><rect x="663" y="338.7" width="1" height="100.5" opacity="1"/><rect x="665" y="361.1" width="1" height="74.3" opacity="1"/><rect x="667" y="339.7" width="1" height="102.5" opacity="1"/><rect x="405" y="319.3" width="1" height="122.0"/><rect x="460" y="323.3" width="1" height="118.0"/><rect x="492" y="325.3" width="1" height="116.0"/><rect x="650" y="321.3" width="1" height="120.0"/><rect x="112" y="325.3" width="1" height="116.0"/></g>
<path d="M229.5 383.3L231.9 317.3L233.1 317.3L235.1 383.3L233.9 407.3L230.9 407.3z" fill="url(#gS)"/>
<path d="M376.6 383.3L379.0 339.3L380.20000000000005 339.3L382.20000000000005 383.3L381.0 407.3L378.0 407.3z" fill="url(#gS)"/>
<rect x="18.0" y="304.0" width="654.0" height="1.2" fill="#7a7a7a" opacity="0.9"/>
<rect x="18.0" y="345.8" width="654.0" height="1.2" fill="#7a7a7a" opacity="0.9"/>
<rect x="18.0" y="404.6" width="654.0" height="1.2" fill="#6c6c6c" opacity="0.9"/>
<rect x="18.0" y="434.9" width="654.0" height="1.2" fill="#7a7a7a" opacity="0.9"/>
<path d="M19.6 407.2v3.1M26.2 412.3v6.7M31.1 414.2v10.4M37.7 414.0v8.6M54.1 408.8v5.4M57.3 410.6v3.1M65.5 410.7v10.6M78.6 409.6v9.2M85.2 410.9v10.4M98.3 417.2v3.2M104.9 432.6v7.6M106.5 434.8v3.4M108.2 424.5v6.8M109.8 423.1v5.7M124.5 414.7v5.3M126.2 419.8v5.5M155.7 411.7v7.8M170.4 413.5v3.2M172.1 411.5v9.3M177.0 414.7v10.5M178.6 408.2v10.3M183.5 408.5v3.0M186.8 411.0v4.2M188.5 411.8v5.4M219.6 416.5v3.3M226.2 432.5v4.2M244.2 411.8v4.5M258.9 417.6v3.3M263.9 416.5v8.9M270.4 419.0v10.8M299.9 414.9v4.8M311.4 422.8v7.3M314.7 416.1v9.3M326.2 421.1v10.5M336.0 417.3v4.1M337.6 419.8v9.4M350.7 424.3v6.8M352.4 423.8v5.5M354.0 427.0v7.1M357.3 426.6v10.9M362.2 425.9v10.7M378.6 428.1v5.2M413.0 414.3v10.1M417.9 413.0v10.2M426.1 418.3v4.3M431.1 413.2v7.3M437.6 414.8v5.0M454.0 433.3v7.0M468.8 421.5v7.8M470.4 424.2v9.0M481.9 433.5v4.5M493.3 422.6v5.1M495.0 416.8v3.9M504.8 415.2v6.4M519.6 421.2v7.8M521.2 417.5v6.1M531.0 426.2v8.3M540.9 423.9v7.8M547.4 425.1v8.2M549.1 425.9v7.3M555.6 424.3v3.8M558.9 422.8v3.7M578.6 427.1v8.2M586.8 423.1v3.5M614.6 416.6v9.6M624.5 415.2v6.3M637.6 416.8v9.9M639.2 418.0v10.3M88.0 412.0v28.0M284.4 425.0v24.0M297.0 425.0v26.0M106.0 430.0v16.0M227.0 430.0v12.0M395.0 425.0v22.0M403.0 425.0v24.0M458.0 430.0v12.0M571.0 425.0v20.0M624.0 420.0v20.0M660.0 425.0v14.0" stroke="#a6a6a6" stroke-width="0.7" fill="none"/>
<polyline points="18.0,411.0 19.6,408.2 21.3,412.8 22.9,411.4 24.6,410.9 26.2,413.3 27.8,408.3 29.5,413.2 31.1,415.2 32.8,416.5 34.4,414.0 36.0,413.5 37.7,415.0 39.3,414.7 40.9,412.7 42.6,414.3 44.2,413.0 45.9,415.8 47.5,411.2 49.1,410.2 50.8,407.5 52.4,412.7 54.1,409.8 55.7,412.4 57.3,411.6 59.0,412.2 60.6,408.9 62.3,412.0 63.9,409.2 65.5,411.7 67.2,411.3 68.8,412.3 70.5,407.5 72.1,410.0 73.7,411.2 75.4,407.5 77.0,408.9 78.6,410.6 80.3,407.5 81.9,407.5 83.6,407.5 85.2,411.9 86.8,414.5 88.5,409.7 90.1,414.2 91.8,410.0 93.4,411.9 95.0,414.3 96.7,414.9 98.3,418.2 100.0,412.8 101.6,420.9 103.2,421.8 104.9,433.6 106.5,435.8 108.2,425.5 109.8,424.1 111.4,420.1 113.1,418.1 114.7,413.9 116.3,416.1 118.0,415.2 119.6,417.1 121.3,413.8 122.9,412.1 124.5,415.7 126.2,420.8 127.8,421.5 129.5,427.1 131.1,425.2 132.7,429.1 134.4,431.9 136.0,430.6 137.7,431.2 139.3,425.6 140.9,416.5 142.6,421.3 144.2,416.9 145.8,414.9 147.5,415.4 149.1,408.7 150.8,414.8 152.4,414.4 154.0,416.0 155.7,412.7 157.3,416.1 159.0,411.5 160.6,408.8 162.2,418.2 163.9,414.2 165.5,414.1 167.2,413.2 168.8,412.5 170.4,414.5 172.1,412.5 173.7,418.3 175.4,414.0 177.0,415.7 178.6,409.2 180.3,414.8 181.9,409.5 183.5,409.5 185.2,414.2 186.8,412.0 188.5,412.8 190.1,411.2 191.7,409.4 193.4,408.0 195.0,409.9 196.7,410.4 198.3,411.8 199.9,411.4 201.6,410.3 203.2,411.8 204.9,411.0 206.5,407.5 208.1,410.8 209.8,412.5 211.4,410.7 213.1,412.7 214.7,415.7 216.3,413.0 218.0,418.9 219.6,417.5 221.2,420.5 222.9,421.5 224.5,427.4 226.2,433.5 227.8,433.5 229.4,421.1 231.1,416.5 232.7,411.1 234.4,410.4 236.0,413.6 237.6,414.0 239.3,411.2 240.9,414.9 242.6,409.7 244.2,412.8 245.8,414.6 247.5,414.9 249.1,411.6 250.8,420.8 252.4,417.7 254.0,415.8 255.7,417.4 257.3,418.7 258.9,418.6 260.6,423.2 262.2,413.6 263.9,417.5 265.5,418.6 267.1,414.9 268.8,416.7 270.4,420.0 272.1,416.3 273.7,417.9 275.3,415.8 277.0,420.5 278.6,415.4 280.3,418.0 281.9,419.6 283.5,424.2 285.2,428.5 286.8,426.5 288.5,433.1 290.1,425.4 291.7,420.2 293.4,420.1 295.0,417.8 296.6,416.4 298.3,416.4 299.9,415.9 301.6,416.7 303.2,421.4 304.8,417.4 306.5,416.9 308.1,420.1 309.8,422.8 311.4,423.8 313.0,417.5 314.7,417.1 316.3,420.9 318.0,422.0 319.6,418.8 321.2,422.5 322.9,422.1 324.5,421.0 326.2,422.1 327.8,422.2 329.4,422.6 331.1,420.1 332.7,419.3 334.3,418.0 336.0,418.3 337.6,420.8 339.3,420.6 340.9,422.9 342.5,419.5 344.2,424.8 345.8,422.9 347.5,426.4 349.1,425.5 350.7,425.3 352.4,424.8 354.0,428.0 355.7,425.0 357.3,427.6 358.9,424.5 360.6,426.3 362.2,426.9 363.8,426.3 365.5,426.5 367.1,427.2 368.8,430.5 370.4,427.9 372.0,430.4 373.7,429.2 375.3,425.5 377.0,426.3 378.6,429.1 380.2,427.3 381.9,426.1 383.5,426.9 385.2,420.5 386.8,418.8 388.4,417.9 390.1,413.7 391.7,413.8 393.4,418.7 395.0,421.2 396.6,422.9 398.3,431.3 399.9,422.2 401.5,427.4 403.2,424.5 404.8,417.9 406.5,417.1 408.1,411.4 409.7,415.2 411.4,409.0 413.0,415.3 414.7,412.4 416.3,418.0 417.9,414.0 419.6,417.3 421.2,423.4 422.9,422.1 424.5,413.1 426.1,419.3 427.8,419.2 429.4,419.8 431.1,414.2 432.7,422.9 434.3,417.5 436.0,418.3 437.6,415.8 439.2,421.0 440.9,418.5 442.5,424.5 444.2,421.9 445.8,429.8 447.4,425.1 449.1,428.8 450.7,425.1 452.4,433.3 454.0,434.3 455.6,433.0 457.3,430.6 458.9,437.6 460.6,434.2 462.2,431.8 463.8,432.7 465.5,425.7 467.1,433.2 468.8,422.5 470.4,425.2 472.0,427.1 473.7,426.5 475.3,424.6 476.9,428.5 478.6,423.3 480.2,428.2 481.9,434.5 483.5,435.2 485.1,431.9 486.8,435.5 488.4,427.0 490.1,428.2 491.7,429.7 493.3,423.6 495.0,417.8 496.6,423.5 498.3,416.3 499.9,417.0 501.5,412.7 503.2,415.3 504.8,416.2 506.5,422.8 508.1,420.3 509.7,427.4 511.4,420.2 513.0,421.6 514.6,418.5 516.3,421.2 517.9,420.8 519.6,422.2 521.2,418.5 522.8,424.3 524.5,422.9 526.1,428.9 527.8,426.6 529.4,427.5 531.0,427.2 532.7,427.0 534.3,426.1 536.0,420.0 537.6,424.1 539.2,426.8 540.9,424.9 542.5,424.3 544.2,424.3 545.8,422.1 547.4,426.1 549.1,426.9 550.7,424.1 552.3,423.8 554.0,420.6 555.6,425.3 557.3,423.8 558.9,423.8 560.5,423.7 562.2,424.8 563.8,425.4 565.5,425.8 567.1,423.7 568.7,429.9 570.4,434.5 572.0,424.0 573.7,433.3 575.3,429.7 576.9,430.0 578.6,428.1 580.2,430.3 581.8,424.4 583.5,425.6 585.1,426.8 586.8,424.1 588.4,420.4 590.0,419.5 591.7,417.6 593.3,417.1 595.0,415.8 596.6,423.2 598.2,418.8 599.9,424.1 601.5,421.3 603.2,420.1 604.8,418.0 606.4,421.0 608.1,418.6 609.7,419.0 611.4,420.4 613.0,416.8 614.6,417.6 616.3,420.9 617.9,415.3 619.5,413.5 621.2,418.4 622.8,416.5 624.5,416.2 626.1,415.7 627.7,414.9 629.4,415.2 631.0,415.2 632.7,415.2 634.3,417.0 635.9,417.0 637.6,417.8 639.2,419.0 640.9,422.5 642.5,416.8 644.1,420.6 645.8,420.6 647.4,415.7 649.1,413.3 650.7,419.4 652.3,415.7 654.0,418.6 655.6,419.7 657.2,424.6 658.9,429.5 660.5,426.3 662.2,432.3 663.8,428.7 665.4,423.9 667.1,422.9 668.7,419.0 670.4,414.7 672.0,418.9" fill="none" stroke="#9e9e9e" stroke-width="1.3" stroke-linejoin="round"/>
<polyline points="18.0,335.7 19.3,336.1 20.5,335.7 21.8,335.5 23.0,335.0 24.3,334.1 25.6,335.0 26.8,335.4 28.1,335.6 29.3,335.7 30.6,335.0 31.9,335.1 33.1,334.9 34.4,335.0 35.6,335.1 36.9,334.9 38.2,334.9 39.4,335.1 40.7,335.0 41.9,334.4 43.2,334.6 44.5,334.3 45.7,334.6 47.0,334.8 48.2,334.6 49.5,335.0 50.8,335.2 52.0,335.1 53.3,334.5 54.5,334.7 55.8,335.5 57.1,334.8 58.3,334.3 59.6,334.2 60.8,334.7 62.1,334.6 63.4,335.3 64.6,335.4 65.9,335.5 67.1,335.4 68.4,334.2 69.7,334.4 70.9,334.9 72.2,334.2 73.4,334.2 74.7,333.3 76.0,333.9 77.2,334.4 78.5,333.5 79.7,333.8 81.0,333.9 82.3,333.9 83.5,333.5 84.8,334.5 86.0,334.8 87.3,334.8 88.6,334.1 89.8,334.2 91.1,334.4 92.3,334.1 93.6,334.3 94.9,334.1 96.1,333.9 97.4,334.0 98.6,334.5 99.9,333.7 101.2,334.0 102.4,333.3 103.7,332.7 104.9,333.3 106.2,333.2 107.5,332.8 108.7,333.3 110.0,332.5 111.2,332.4 112.5,332.7 113.8,332.5 115.0,332.3 116.3,331.7 117.5,333.0 118.8,332.7 120.1,332.9 121.3,332.6 122.6,331.8 123.8,332.7 125.1,337.0 126.4,342.8 127.6,335.9 128.9,333.0 130.2,332.6 131.4,332.9 132.7,337.8 133.9,348.2 135.2,344.9 136.5,335.4 137.7,333.5 139.0,333.5 140.2,332.7 141.5,332.5 142.8,332.2 144.0,332.3 145.3,333.0 146.5,332.8 147.8,332.1 149.1,331.1 150.3,331.6 151.6,331.3 152.8,332.7 154.1,332.7 155.4,332.6 156.6,331.8 157.9,332.4 159.1,333.0 160.4,333.2 161.7,332.9 162.9,333.1 164.2,333.1 165.4,332.5 166.7,332.9 168.0,332.5 169.2,331.9 170.5,331.7 171.7,331.6 173.0,331.9 174.3,332.3 175.5,331.5 176.8,331.8 178.0,332.0 179.3,333.0 180.6,332.8 181.8,332.9 183.1,332.7 184.3,332.1 185.6,331.6 186.9,331.2 188.1,331.5 189.4,331.4 190.6,331.6 191.9,331.8 193.2,332.1 194.4,332.7 195.7,333.4 196.9,333.2 198.2,333.7 199.5,333.4 200.7,332.7 202.0,332.0 203.2,331.9 204.5,331.7 205.8,331.2 207.0,331.1 208.3,332.4 209.5,332.4 210.8,332.5 212.1,332.7 213.3,332.2 214.6,331.7 215.8,332.7 217.1,332.1 218.4,332.7 219.6,332.3 220.9,332.2 222.1,332.6 223.4,332.6 224.7,333.0 225.9,332.1 227.2,331.5 228.4,331.7 229.7,331.2 231.0,332.0 232.2,332.5 233.5,333.3 234.7,333.1 236.0,332.9 237.3,332.7 238.5,333.1 239.8,332.9 241.0,332.5 242.3,332.0 243.6,332.0 244.8,332.3 246.1,333.3 247.3,333.0 248.6,333.3 249.9,334.1 251.1,333.7 252.4,333.3 253.6,333.5 254.9,333.4 256.2,333.0 257.4,333.4 258.7,333.1 259.9,332.3 261.2,332.5 262.5,332.8 263.7,333.3 265.0,334.4 266.2,333.9 267.5,334.1 268.8,334.1 270.0,334.4 271.3,334.3 272.5,334.6 273.8,334.4 275.1,334.7 276.3,334.4 277.6,334.8 278.8,333.9 280.1,333.8 281.4,334.2 282.6,333.6 283.9,333.1 285.1,333.2 286.4,333.2 287.7,334.4 288.9,334.0 290.2,334.6 291.4,334.4 292.7,334.6 294.0,334.5 295.2,334.4 296.5,334.2 297.7,333.4 299.0,333.6 300.3,334.3 301.5,334.1 302.8,334.3 304.0,334.6 305.3,334.5 306.6,334.0 307.8,333.8 309.1,334.0 310.3,334.0 311.6,334.3 312.9,335.1 314.1,335.2 315.4,334.7 316.6,334.2 317.9,334.8 319.2,334.6 320.4,334.7 321.7,334.9 322.9,334.5 324.2,334.4 325.5,334.1 326.7,334.4 328.0,334.3 329.2,333.9 330.5,333.4 331.8,333.8 333.0,334.6 334.3,333.2 335.5,334.3 336.8,333.9 338.1,333.9 339.3,334.3 340.6,334.1 341.8,333.5 343.1,332.9 344.4,333.6 345.6,334.0 346.9,334.6 348.2,333.9 349.4,334.0 350.7,334.1 351.9,334.9 353.2,335.0 354.5,334.6 355.7,334.6 357.0,334.1 358.2,334.7 359.5,334.6 360.8,334.8 362.0,334.6 363.3,334.5 364.5,334.2 365.8,333.9 367.1,333.9 368.3,333.7 369.6,334.6 370.8,334.7 372.1,334.9 373.4,334.7 374.6,334.7 375.9,334.3 377.1,333.9 378.4,333.3 379.7,332.1 380.9,331.2 382.2,331.2 383.4,332.4 384.7,332.5 386.0,333.2 387.2,334.1 388.5,333.6 389.7,333.9 391.0,334.9 392.3,334.7 393.5,334.7 394.8,334.2 396.0,333.5 397.3,334.0 398.6,333.6 399.8,333.5 401.1,334.0 402.3,334.2 403.6,334.3 404.9,334.4 406.1,334.6 407.4,334.5 408.6,335.5 409.9,335.0 411.2,335.5 412.4,335.9 413.7,335.3 414.9,335.4 416.2,334.8 417.5,334.3 418.7,334.6 420.0,334.5 421.2,334.9 422.5,334.1 423.8,334.6 425.0,333.9 426.3,334.5 427.5,334.9 428.8,335.5 430.1,335.7 431.3,335.3 432.6,335.5 433.8,334.8 435.1,334.8 436.4,334.3 437.6,333.9 438.9,333.8 440.1,333.9 441.4,334.0 442.7,333.8 443.9,333.8 445.2,333.3 446.4,333.8 447.7,334.2 449.0,334.0 450.2,333.9 451.5,334.2 452.7,334.3 454.0,334.1 455.3,333.9 456.5,334.5 457.8,333.8 459.0,333.4 460.3,334.3 461.6,334.4 462.8,334.5 464.1,334.4 465.3,334.4 466.6,333.7 467.9,335.1 469.1,334.5 470.4,334.4 471.6,335.5 472.9,335.8 474.2,335.9 475.4,336.3 476.7,335.8 477.9,334.7 479.2,334.4 480.5,334.5 481.7,334.0 483.0,334.9 484.2,335.9 485.5,335.8 486.8,334.4 488.0,334.0 489.3,333.9 490.5,334.1 491.8,334.7 493.1,334.4 494.3,334.4 495.6,334.2 496.8,333.7 498.1,333.8 499.4,334.5 500.6,333.6 501.9,333.2 503.1,333.4 504.4,333.7 505.7,333.5 506.9,333.9 508.2,334.2 509.4,335.0 510.7,334.9 512.0,335.6 513.2,335.5 514.5,335.8 515.7,335.0 517.0,335.2 518.3,335.1 519.5,334.2 520.8,334.3 522.0,333.9 523.3,333.4 524.6,333.5 525.8,333.9 527.1,334.3 528.3,335.0 529.6,334.7 530.9,334.4 532.1,334.8 533.4,334.5 534.6,334.2 535.9,334.3 537.2,334.2 538.4,334.2 539.7,334.1 540.9,334.0 542.2,333.9 543.5,334.2 544.7,333.8 546.0,333.7 547.2,334.0 548.5,334.1 549.8,333.7 551.0,334.0 552.3,333.4 553.5,333.5 554.8,333.1 556.1,333.3 557.3,333.7 558.6,334.2 559.8,334.5 561.1,334.9 562.4,334.4 563.6,334.6 564.9,334.7 566.2,334.0 567.4,333.9 568.7,333.8 569.9,334.2 571.2,334.7 572.5,334.9 573.7,334.9 575.0,335.2 576.2,334.9 577.5,335.3 578.8,335.1 580.0,334.0 581.3,334.1 582.5,333.7 583.8,333.7 585.1,334.1 586.3,333.3 587.6,333.0 588.8,334.4 590.1,334.2 591.4,334.7 592.6,334.8 593.9,333.8 595.1,333.4 596.4,334.6 597.7,333.8 598.9,333.8 600.2,333.5 601.4,333.8 602.7,333.5 604.0,333.6 605.2,333.6 606.5,333.4 607.7,333.4 609.0,334.0 610.3,334.1 611.5,334.6 612.8,334.2 614.0,334.9 615.3,334.1 616.6,334.5 617.8,334.7 619.1,335.1 620.3,335.2 621.6,335.7 622.9,335.5 624.1,335.0 625.4,334.6 626.6,334.2 627.9,333.1 629.2,332.4 630.4,331.5 631.7,332.0 632.9,332.6 634.2,333.1 635.5,333.4 636.7,333.1 638.0,333.4 639.2,334.1 640.5,333.9 641.8,334.0 643.0,334.4 644.3,334.4 645.5,334.8 646.8,335.1 648.1,334.5 649.3,335.3 650.6,335.6 651.8,336.0 653.1,335.2 654.4,335.6 655.6,336.7 656.9,339.4 658.1,341.5 659.4,340.8 660.7,337.6 661.9,335.3 663.2,334.9 664.4,334.7 665.7,334.6 667.0,333.6 668.2,332.8 669.5,332.8 670.7,333.4 672.0,333.9" fill="none" stroke="#a040f0" stroke-width="1.1" stroke-linejoin="round"/>
<rect x="18.0" y="463.5" width="214.0" height="2.6" fill="#e6c000"/>
<rect x="232" y="463.5" width="440.0" height="2.6" fill="#22c000"/>
<rect x="18.0" y="463.0" width="654.0" height="0.6" fill="#b8c8ff" opacity="0.8"/>
<path d="M21.0 477.2v6.6M33.2 476.8v8.2M37.8 477.3v6.9M80.5 471.1v8.6M88.1 472.5v6.9M94.2 470.3v7.6M103.4 478.1v3.4M111.0 472.2v3.1M123.2 473.9v6.0M152.2 479.2v5.6M172.0 471.1v6.3M187.2 471.7v6.5M200.9 473.7v8.0M204.0 475.9v4.3M222.3 473.2v7.1M231.4 473.8v8.2M239.0 462.2v6.5M242.1 463.8v3.2M268.0 471.2v6.2M271.1 467.9v9.7M272.6 470.7v3.6M274.1 465.8v9.7M281.7 471.2v7.8M290.9 474.4v6.9M300.0 469.3v7.0M303.1 469.9v8.3M315.3 473.4v8.9M318.3 474.9v7.2M322.9 469.5v6.7M329.0 469.7v3.3M338.1 479.1v5.2M356.4 471.2v6.8M370.2 471.4v4.8M399.1 473.9v6.0M402.2 474.5v6.1M406.7 478.3v4.5M415.9 471.2v6.6M447.9 473.5v4.5M455.5 475.3v9.7M458.6 476.8v8.8M466.2 473.8v7.5M479.9 471.7v8.1M492.1 474.1v4.5M504.3 468.5v3.8M516.5 467.0v7.9M533.3 474.1v8.9M559.2 481.9v5.0M563.8 476.9v7.9M566.8 472.3v8.3M572.9 474.1v3.4M585.1 470.3v8.7M589.7 468.6v4.4M617.1 468.7v8.4M626.3 472.2v5.5M641.5 468.7v3.3M644.6 468.9v6.4M664.4 476.0v7.8M40.5 470.0v14.0M47.0 468.0v20.0M64.0 465.0v20.0M23.0 472.0v11.0M68.0 460.0v20.0M607.0 478.0v17.0M655.0 476.0v16.0M661.0 476.0v16.0M386.0 470.0v16.0M530.0 474.0v14.0M558.0 478.0v14.0M598.0 474.0v20.0" stroke="#b8b8b8" stroke-width="0.8" fill="none"/>
<polyline points="18.0,481.1 19.5,479.9 21.0,479.5 22.6,484.7 24.1,488.5 25.6,480.2 27.1,482.9 28.7,489.2 30.2,477.1 31.7,476.8 33.2,479.7 34.8,479.0 36.3,477.9 37.8,479.7 39.3,480.9 40.9,481.2 42.4,479.7 43.9,478.2 45.4,481.3 47.0,481.2 48.5,478.9 50.0,480.0 51.5,480.9 53.1,480.6 54.6,478.7 56.1,477.1 57.6,478.9 59.2,480.5 60.7,479.6 62.2,477.4 63.7,477.6 65.3,478.9 66.8,474.5 68.3,469.1 69.8,477.7 71.4,482.8 72.9,473.0 74.4,467.9 75.9,472.6 77.5,472.5 79.0,470.9 80.5,474.1 82.0,477.9 83.6,477.6 85.1,477.7 86.6,476.9 88.1,474.9 89.7,477.1 91.2,471.0 92.7,473.2 94.2,472.9 95.7,472.4 97.3,483.9 98.8,476.0 100.3,478.1 101.8,478.9 103.4,479.2 104.9,478.2 106.4,479.0 107.9,476.3 109.5,473.7 111.0,473.2 112.5,479.5 114.0,474.1 115.6,470.9 117.1,476.2 118.6,472.1 120.1,474.3 121.7,475.2 123.2,476.0 124.7,476.3 126.2,477.9 127.8,476.7 129.3,478.8 130.8,475.3 132.3,474.8 133.9,474.0 135.4,476.3 136.9,475.6 138.4,472.9 140.0,475.1 141.5,473.3 143.0,473.8 144.5,477.0 146.1,478.9 147.6,475.7 149.1,479.0 150.6,479.6 152.2,481.1 153.7,477.7 155.2,474.7 156.7,473.4 158.3,475.1 159.8,472.7 161.3,472.9 162.8,479.1 164.3,471.7 165.9,472.5 167.4,472.6 168.9,473.1 170.4,470.6 172.0,473.3 173.5,470.1 175.0,470.2 176.5,472.6 178.1,471.0 179.6,470.7 181.1,471.7 182.6,474.0 184.2,470.2 185.7,473.8 187.2,474.0 188.7,472.9 190.3,474.1 191.8,474.1 193.3,474.5 194.8,474.1 196.4,475.9 197.9,471.7 199.4,473.5 200.9,476.5 202.5,483.6 204.0,477.4 205.5,476.8 207.0,479.5 208.6,480.0 210.1,478.4 211.6,475.0 213.1,475.5 214.7,474.1 216.2,474.2 217.7,474.2 219.2,474.6 220.8,476.6 222.3,475.7 223.8,477.0 225.3,478.9 226.9,480.6 228.4,478.7 229.9,477.0 231.4,476.6 233.0,476.5 234.5,471.2 236.0,469.2 237.5,467.0 239.0,464.5 240.6,464.7 242.1,464.9 243.6,466.2 245.1,468.7 246.7,470.5 248.2,472.5 249.7,469.8 251.2,467.3 252.8,472.7 254.3,477.5 255.8,472.9 257.3,475.2 258.9,476.4 260.4,476.8 261.9,473.2 263.4,471.5 265.0,473.5 266.5,470.8 268.0,473.4 269.5,470.7 271.1,471.3 272.6,472.0 274.1,469.1 275.6,472.5 277.2,473.8 278.7,473.1 280.2,472.3 281.7,473.9 283.3,473.6 284.8,475.0 286.3,472.3 287.8,476.2 289.4,476.2 290.9,476.8 292.4,474.2 293.9,473.9 295.5,474.8 297.0,472.2 298.5,471.1 300.0,471.8 301.6,470.2 303.1,472.8 304.6,471.0 306.1,470.1 307.7,467.8 309.2,467.2 310.7,467.0 312.2,468.3 313.7,474.2 315.3,476.5 316.8,474.5 318.3,477.4 319.8,476.0 321.4,478.6 322.9,471.9 324.4,472.3 325.9,470.7 327.5,469.8 329.0,470.9 330.5,471.4 332.0,471.3 333.6,473.6 335.1,476.5 336.6,476.8 338.1,481.0 339.7,480.5 341.2,475.7 342.7,475.2 344.2,472.8 345.8,472.7 347.3,470.3 348.8,473.5 350.3,472.4 351.9,473.2 353.4,469.7 354.9,471.7 356.4,473.6 358.0,473.6 359.5,477.3 361.0,473.8 362.5,477.6 364.1,479.5 365.6,477.2 367.1,476.5 368.6,471.2 370.2,473.1 371.7,471.0 373.2,473.2 374.7,473.9 376.3,476.4 377.8,477.8 379.3,476.9 380.8,480.1 382.3,476.6 383.9,473.3 385.4,470.6 386.9,477.0 388.4,468.4 390.0,470.9 391.5,472.1 393.0,470.5 394.5,470.1 396.1,471.7 397.6,472.8 399.1,476.0 400.6,477.9 402.2,476.7 403.7,474.1 405.2,474.3 406.7,479.9 408.3,470.5 409.8,470.0 411.3,470.9 412.8,473.1 414.4,473.0 415.9,473.5 417.4,472.0 418.9,473.3 420.5,477.0 422.0,479.8 423.5,479.4 425.0,481.7 426.6,480.6 428.1,480.5 429.6,481.1 431.1,477.7 432.7,479.2 434.2,479.1 435.7,474.6 437.2,473.2 438.8,476.2 440.3,476.2 441.8,477.8 443.3,477.5 444.9,477.1 446.4,475.3 447.9,475.1 449.4,477.8 451.0,474.0 452.5,480.0 454.0,475.2 455.5,478.7 457.0,475.2 458.6,479.9 460.1,478.1 461.6,476.7 463.1,475.9 464.7,472.9 466.2,476.5 467.7,473.8 469.2,478.8 470.8,473.6 472.3,474.4 473.8,474.5 475.3,482.9 476.9,472.4 478.4,473.6 479.9,474.5 481.4,475.8 483.0,475.2 484.5,476.5 486.0,484.5 487.5,475.9 489.1,476.1 490.6,478.0 492.1,475.6 493.6,480.7 495.2,474.7 496.7,473.1 498.2,469.5 499.7,468.3 501.3,466.5 502.8,466.2 504.3,469.9 505.8,465.0 507.4,471.2 508.9,469.2 510.4,471.5 511.9,472.2 513.5,468.9 515.0,467.5 516.5,469.7 518.0,470.9 519.6,474.7 521.1,469.8 522.6,472.2 524.1,475.1 525.7,473.6 527.2,474.0 528.7,475.2 530.2,476.8 531.7,478.2 533.3,477.2 534.8,474.8 536.3,481.2 537.8,474.0 539.4,476.3 540.9,472.8 542.4,473.5 543.9,472.3 545.5,473.4 547.0,476.8 548.5,478.5 550.0,481.8 551.6,474.7 553.1,477.2 554.6,477.9 556.1,480.9 557.7,479.3 559.2,483.7 560.7,479.6 562.2,477.7 563.8,479.7 565.3,484.4 566.8,475.2 568.3,477.1 569.9,476.7 571.4,478.8 572.9,475.3 574.4,476.7 576.0,477.4 577.5,475.9 579.0,476.6 580.5,474.8 582.1,474.6 583.6,474.6 585.1,473.4 586.6,473.1 588.2,473.4 589.7,470.2 591.2,468.7 592.7,470.1 594.3,472.9 595.8,473.9 597.3,475.0 598.8,473.4 600.3,476.4 601.9,477.4 603.4,480.7 604.9,481.9 606.4,477.8 608.0,476.7 609.5,472.2 611.0,471.6 612.5,473.2 614.1,470.8 615.6,469.9 617.1,471.6 618.6,474.5 620.2,473.5 621.7,471.5 623.2,471.7 624.7,475.1 626.3,474.2 627.8,483.7 629.3,477.9 630.8,475.9 632.4,474.0 633.9,470.2 635.4,469.3 636.9,472.5 638.5,471.1 640.0,468.0 641.5,469.9 643.0,471.1 644.6,471.1 646.1,472.8 647.6,472.1 649.1,473.4 650.7,477.7 652.2,473.6 653.7,472.4 655.2,472.5 656.8,470.6 658.3,472.4 659.8,474.9 661.3,474.1 662.9,475.7 664.4,478.7 665.9,482.9 667.4,481.7 669.0,472.5 670.5,471.0 672.0,469.8" fill="none" stroke="#484848" stroke-width="0.9" stroke-linejoin="round"/>
<text x="9.8" y="295.1" font-size="5.6" fill="#666" font-style="italic">µV</text>
<text x="16" y="305.9865422409229" font-size="6" fill="#444" text-anchor="end">500</text>
<text x="16" y="323.9730844818458" font-size="6" fill="#999" text-anchor="end">250</text>
<text x="16" y="347.75" font-size="6" fill="#444" text-anchor="end">100</text>
<text x="16" y="365.73654224092286" font-size="6" fill="#999" text-anchor="end">50</text>
<text x="16" y="383.7230844818458" font-size="6" fill="#999" text-anchor="end">25</text>
<text x="16" y="407.5" font-size="6" fill="#333" text-anchor="end">10</text>
<text x="16" y="413.44" font-size="6" fill="#aaa" text-anchor="end">9</text>
<text x="16" y="419.38" font-size="6" fill="#aaa" text-anchor="end">8</text>
<text x="16" y="425.32" font-size="6" fill="#aaa" text-anchor="end">7</text>
<text x="16" y="431.26" font-size="6" fill="#aaa" text-anchor="end">6</text>
<text x="16" y="437.2" font-size="6" fill="#333" text-anchor="end">5</text>
<text x="16" y="443.14" font-size="6" fill="#aaa" text-anchor="end">4</text>
<text x="16" y="449.08" font-size="6" fill="#aaa" text-anchor="end">3</text>
<text x="16" y="455.02" font-size="6" fill="#aaa" text-anchor="end">2</text>
<text x="16" y="460.96" font-size="6" fill="#aaa" text-anchor="end">1</text>
<text x="16" y="466.90000000000003" font-size="6" fill="#555" text-anchor="end">0</text>
<text x="675.5" y="395.90000000000003" font-size="5.8" fill="#555">%O₂</text>
<text x="675" y="408.0" font-size="5.8" fill="#333">100</text>
<text x="675" y="413.955" font-size="5.8" fill="#aaa">98</text>
<text x="675" y="419.91" font-size="5.8" fill="#aaa">96</text>
<text x="675" y="425.865" font-size="5.8" fill="#aaa">94</text>
<text x="675" y="431.82" font-size="5.8" fill="#aaa">92</text>
<text x="675" y="437.775" font-size="5.8" fill="#333">90</text>
<text x="675" y="443.73" font-size="5.8" fill="#aaa">88</text>
<text x="675" y="449.685" font-size="5.8" fill="#aaa">86</text>
<text x="675" y="455.64" font-size="5.8" fill="#aaa">84</text>
<text x="675" y="461.59499999999997" font-size="5.8" fill="#aaa">82</text>
<text x="675" y="467.55" font-size="5.8" fill="#555">80</text>
<text x="675" y="473.505" font-size="5.8" fill="#aaa">78</text>
<text x="675" y="479.46" font-size="5.8" fill="#aaa">76</text>
<text x="675" y="485.415" font-size="5.8" fill="#aaa">74</text>
<text x="675" y="491.37" font-size="5.8" fill="#aaa">72</text>
<text x="675" y="497.325" font-size="5.8" fill="#aaa">70</text>
<text x="18" y="472.90000000000003" font-size="6" fill="#2b8cf0" font-weight="bold">LH</text>
<text x="80.0" y="472.00000000000006" font-size="5.6" fill="#5a5a5a" text-anchor="middle">4ʰ</text>
<text x="158.4" y="472.00000000000006" font-size="5.6" fill="#5a5a5a" text-anchor="middle">4ʰ 30′</text>
<text x="315.2" y="472.00000000000006" font-size="5.6" fill="#5a5a5a" text-anchor="middle">5ʰ 30′</text>
<text x="393.6" y="472.00000000000006" font-size="5.6" fill="#5a5a5a" text-anchor="middle">6ʰ</text>
<text x="472.0" y="472.00000000000006" font-size="5.6" fill="#5a5a5a" text-anchor="middle">6ʰ 30′</text>
<text x="550.4" y="472.00000000000006" font-size="5.6" fill="#5a5a5a" text-anchor="middle">7ʰ</text>
<text x="628.8000000000001" y="472.00000000000006" font-size="5.6" fill="#5a5a5a" text-anchor="middle">7ʰ 30′</text>
</g>
<g id="chart1">
<rect x="27.8" y="533.8" width="1" height="159.9" fill="#eeeeee"/>
<rect x="54.0" y="533.8" width="1" height="159.9" fill="#eeeeee"/>
<rect x="80.1" y="533.8" width="1" height="159.9" fill="#cdcdcd"/>
<rect x="106.2" y="533.8" width="1" height="159.9" fill="#eeeeee"/>
<rect x="132.4" y="533.8" width="1" height="159.9" fill="#eeeeee"/>
<rect x="158.5" y="533.8" width="1" height="159.9" fill="#eeeeee"/>
<rect x="184.6" y="533.8" width="1" height="159.9" fill="#eeeeee"/>
<rect x="210.8" y="533.8" width="1" height="159.9" fill="#eeeeee"/>
<rect x="236.9" y="533.8" width="1" height="159.9" fill="#cdcdcd"/>
<rect x="263.0" y="533.8" width="1" height="159.9" fill="#eeeeee"/>
<rect x="289.2" y="533.8" width="1" height="159.9" fill="#eeeeee"/>
<rect x="315.3" y="533.8" width="1" height="159.9" fill="#eeeeee"/>
<rect x="341.4" y="533.8" width="1" height="159.9" fill="#eeeeee"/>
<rect x="367.6" y="533.8" width="1" height="159.9" fill="#eeeeee"/>
<rect x="393.7" y="533.8" width="1" height="159.9" fill="#cdcdcd"/>
<rect x="419.8" y="533.8" width="1" height="159.9" fill="#eeeeee"/>
<rect x="446.0" y="533.8" width="1" height="159.9" fill="#eeeeee"/>
<rect x="472.1" y="533.8" width="1" height="159.9" fill="#eeeeee"/>
<rect x="498.2" y="533.8" width="1" height="159.9" fill="#eeeeee"/>
<rect x="524.4" y="533.8" width="1" height="159.9" fill="#eeeeee"/>
<rect x="550.5" y="533.8" width="1" height="159.9" fill="#cdcdcd"/>
<rect x="576.6" y="533.8" width="1" height="159.9" fill="#eeeeee"/>
<rect x="602.8" y="533.8" width="1" height="159.9" fill="#eeeeee"/>
<rect x="628.9" y="533.8" width="1" height="159.9" fill="#eeeeee"/>
<rect x="655.0" y="533.8" width="1" height="159.9" fill="#eeeeee"/>
<rect x="18.0" y="550.3" width="654.0" height="1" fill="#e6e6e6"/>
<rect x="18.0" y="592.0" width="654.0" height="1" fill="#e6e6e6"/>
<rect x="18.0" y="610.0" width="654.0" height="1" fill="#e6e6e6"/>
<rect x="18.0" y="639.7" width="654.0" height="1" fill="#e4e4e4"/>
<rect x="18.0" y="645.7" width="654.0" height="1" fill="#e4e4e4"/>
<rect x="18.0" y="651.6" width="654.0" height="1" fill="#e4e4e4"/>
<rect x="18.0" y="657.6" width="654.0" height="1" fill="#e4e4e4"/>
<rect x="18.0" y="669.4" width="654.0" height="1" fill="#e4e4e4"/>
<rect x="18.0" y="675.4" width="654.0" height="1" fill="#e4e4e4"/>
<rect x="18.0" y="681.3" width="654.0" height="1" fill="#e4e4e4"/>
<rect x="18.0" y="687.3" width="654.0" height="1" fill="#e4e4e4"/>
<g fill="url(#gB)"><rect x="18" y="582.2" width="1" height="93.6" opacity="0.85"/><rect x="19" y="592.1" width="1" height="66.1" opacity="1"/><rect x="20" y="592.0" width="1" height="76.2" opacity="0.85"/><rect x="21" y="587.2" width="1" height="73.5" opacity="1"/><rect x="22" y="584.6" width="1" height="78.4" opacity="0.85"/><rect x="23" y="577.6" width="1" height="82.0" opacity="0.7"/><rect x="24" y="590.5" width="1" height="67.5" opacity="1"/><rect x="25" y="585.6" width="1" height="89.1" opacity="1"/><rect x="26" y="584.8" width="1" height="78.9" opacity="0.85"/><rect x="27" y="590.1" width="1" height="71.9" opacity="1"/><rect x="28" y="583.0" width="1" height="92.3" opacity="1"/><rect x="29" y="581.6" width="1" height="77.0" opacity="0.85"/><rect x="30" y="588.8" width="1" height="73.5" opacity="0.85"/><rect x="31" y="582.8" width="1" height="75.4" opacity="1"/><rect x="32" y="589.8" width="1" height="82.5" opacity="0.7"/><rect x="33" y="589.0" width="1" height="83.2" opacity="1"/><rect x="34" y="590.6" width="1" height="76.2" opacity="1"/><rect x="35" y="580.9" width="1" height="85.3" opacity="1"/><rect x="36" y="582.4" width="1" height="75.1" opacity="1"/><rect x="37" y="588.9" width="1" height="80.0" opacity="0.85"/><rect x="38" y="585.9" width="1" height="76.0" opacity="0.85"/><rect x="39" y="589.2" width="1" height="80.8" opacity="1"/><rect x="40" y="587.9" width="1" height="75.6" opacity="1"/><rect x="41" y="585.5" width="1" height="82.1" opacity="1"/><rect x="42" y="585.1" width="1" height="80.0" opacity="1"/><rect x="43" y="580.3" width="1" height="82.5" opacity="0.85"/><rect x="44" y="574.4" width="1" height="82.5" opacity="1"/><rect x="45" y="580.3" width="1" height="93.4" opacity="1"/><rect x="46" y="581.8" width="1" height="77.5" opacity="1"/><rect x="47" y="587.8" width="1" height="86.2" opacity="1"/><rect x="48" y="583.5" width="1" height="79.4" opacity="1"/><rect x="49" y="582.1" width="1" height="82.9" opacity="0.7"/><rect x="50" y="585.6" width="1" height="86.9" opacity="1"/><rect x="51" y="576.0" width="1" height="94.8" opacity="0.85"/><rect x="52" y="589.3" width="1" height="66.2" opacity="0.85"/><rect x="53" y="590.1" width="1" height="67.5" opacity="1"/><rect x="54" y="588.9" width="1" height="80.3" opacity="1"/><rect x="55" y="589.7" width="1" height="71.5" opacity="0.85"/><rect x="56" y="587.7" width="1" height="78.2" opacity="1"/><rect x="57" y="586.4" width="1" height="71.7" opacity="1"/><rect x="58" y="582.4" width="1" height="86.4" opacity="1"/><rect x="59" y="581.2" width="1" height="91.7" opacity="0.85"/><rect x="60" y="587.1" width="1" height="70.1" opacity="0.85"/><rect x="61" y="587.3" width="1" height="88.2" opacity="0.7"/><rect x="62" y="581.4" width="1" height="92.4" opacity="1"/><rect x="63" y="582.2" width="1" height="89.8" opacity="1"/><rect x="64" y="584.9" width="1" height="89.4" opacity="1"/><rect x="65" y="588.9" width="1" height="81.2" opacity="0.7"/><rect x="66" y="590.3" width="1" height="73.2" opacity="1"/><rect x="67" y="584.8" width="1" height="84.8" opacity="0.85"/><rect x="68" y="583.7" width="1" height="89.2" opacity="1"/><rect x="69" y="591.5" width="1" height="72.2" opacity="1"/><rect x="70" y="586.0" width="1" height="71.8" opacity="0.7"/><rect x="71" y="584.4" width="1" height="89.5" opacity="1"/><rect x="72" y="584.7" width="1" height="73.4" opacity="1"/><rect x="74" y="587.8" width="1" height="86.3" opacity="0.7"/><rect x="75" y="572.4" width="1" height="102.3" opacity="1"/><rect x="76" y="581.7" width="1" height="75.6" opacity="0.85"/><rect x="77" y="571.0" width="1" height="98.6" opacity="1"/><rect x="78" y="585.0" width="1" height="81.4" opacity="1"/><rect x="79" y="590.6" width="1" height="74.4" opacity="0.7"/><rect x="80" y="586.7" width="1" height="78.5" opacity="1"/><rect x="81" y="585.8" width="1" height="87.1" opacity="1"/><rect x="82" y="588.6" width="1" height="81.0" opacity="0.7"/><rect x="83" y="587.7" width="1" height="74.4" opacity="0.7"/><rect x="84" y="591.6" width="1" height="77.0" opacity="0.7"/><rect x="85" y="582.6" width="1" height="90.3" opacity="1"/><rect x="86" y="589.0" width="1" height="86.4" opacity="0.7"/><rect x="87" y="590.7" width="1" height="83.2" opacity="1"/><rect x="88" y="584.2" width="1" height="80.7" opacity="1"/><rect x="89" y="587.2" width="1" height="83.1" opacity="0.85"/><rect x="90" y="583.9" width="1" height="79.8" opacity="1"/><rect x="91" y="589.9" width="1" height="72.2" opacity="1"/><rect x="92" y="583.6" width="1" height="88.6" opacity="1"/><rect x="93" y="581.3" width="1" height="81.7" opacity="1"/><rect x="94" y="586.8" width="1" height="75.0" opacity="0.7"/><rect x="95" y="588.6" width="1" height="70.4" opacity="0.85"/><rect x="96" y="589.8" width="1" height="78.4" opacity="0.85"/><rect x="97" y="586.9" width="1" height="77.8" opacity="0.85"/><rect x="98" y="589.2" width="1" height="72.5" opacity="1"/><rect x="99" y="583.4" width="1" height="87.5" opacity="1"/><rect x="100" y="581.3" width="1" height="83.9" opacity="0.85"/><rect x="101" y="580.6" width="1" height="76.0" opacity="1"/><rect x="102" y="583.2" width="1" height="82.0" opacity="1"/><rect x="103" y="583.6" width="1" height="85.6" opacity="1"/><rect x="104" y="582.8" width="1" height="88.3" opacity="1"/><rect x="105" y="579.7" width="1" height="79.8" opacity="1"/><rect x="106" y="586.1" width="1" height="73.9" opacity="1"/><rect x="107" y="587.7" width="1" height="82.8" opacity="0.7"/><rect x="108" y="584.8" width="1" height="82.8" opacity="0.85"/><rect x="109" y="584.1" width="1" height="79.0" opacity="1"/><rect x="110" y="586.4" width="1" height="70.4" opacity="1"/><rect x="111" y="583.9" width="1" height="81.9" opacity="1"/><rect x="112" y="586.5" width="1" height="74.1" opacity="1"/><rect x="113" y="581.1" width="1" height="77.5" opacity="1"/><rect x="114" y="589.7" width="1" height="78.8" opacity="1"/><rect x="115" y="589.0" width="1" height="68.3" opacity="1"/><rect x="116" y="582.9" width="1" height="76.0" opacity="1"/><rect x="117" y="588.6" width="1" height="83.3" opacity="1"/><rect x="118" y="573.9" width="1" height="85.8" opacity="0.7"/><rect x="119" y="589.2" width="1" height="72.3" opacity="0.7"/><rect x="120" y="584.1" width="1" height="85.1" opacity="0.85"/><rect x="121" y="585.4" width="1" height="82.5" opacity="1"/><rect x="122" y="589.9" width="1" height="79.9" opacity="1"/><rect x="123" y="583.2" width="1" height="87.5" opacity="1"/><rect x="124" y="586.0" width="1" height="81.1" opacity="1"/><rect x="125" y="577.2" width="1" height="88.1" opacity="0.7"/><rect x="126" y="581.1" width="1" height="89.8" opacity="0.7"/><rect x="127" y="591.8" width="1" height="78.7" opacity="1"/><rect x="128" y="582.6" width="1" height="88.9" opacity="0.85"/><rect x="129" y="580.9" width="1" height="92.2" opacity="1"/><rect x="130" y="581.7" width="1" height="94.0" opacity="1"/><rect x="131" y="588.1" width="1" height="81.2" opacity="1"/><rect x="132" y="587.1" width="1" height="84.4" opacity="0.85"/><rect x="133" y="587.8" width="1" height="68.3" opacity="1"/><rect x="134" y="591.4" width="1" height="70.4" opacity="1"/><rect x="135" y="591.0" width="1" height="73.6" opacity="1"/><rect x="136" y="587.2" width="1" height="77.2" opacity="0.7"/><rect x="137" y="590.1" width="1" height="74.4" opacity="0.85"/><rect x="138" y="590.2" width="1" height="83.0" opacity="1"/><rect x="139" y="585.0" width="1" height="84.5" opacity="1"/><rect x="140" y="582.4" width="1" height="79.3" opacity="1"/><rect x="141" y="587.4" width="1" height="88.8" opacity="1"/><rect x="142" y="587.0" width="1" height="79.3" opacity="0.85"/><rect x="144" y="588.3" width="1" height="83.9" opacity="1"/><rect x="145" y="589.6" width="1" height="80.1" opacity="1"/><rect x="146" y="584.2" width="1" height="79.7" opacity="0.7"/><rect x="147" y="588.3" width="1" height="67.8" opacity="0.85"/><rect x="148" y="582.9" width="1" height="89.4" opacity="1"/><rect x="149" y="589.3" width="1" height="77.1" opacity="0.85"/><rect x="150" y="590.3" width="1" height="69.1" opacity="1"/><rect x="151" y="586.8" width="1" height="81.9" opacity="1"/><rect x="152" y="585.9" width="1" height="75.1" opacity="1"/><rect x="153" y="589.6" width="1" height="73.4" opacity="0.7"/><rect x="154" y="581.9" width="1" height="77.5" opacity="1"/><rect x="155" y="583.7" width="1" height="74.8" opacity="1"/><rect x="156" y="584.3" width="1" height="86.6" opacity="0.85"/><rect x="157" y="579.9" width="1" height="77.9" opacity="1"/><rect x="158" y="585.5" width="1" height="72.5" opacity="1"/><rect x="159" y="583.4" width="1" height="87.4" opacity="1"/><rect x="160" y="583.7" width="1" height="74.3" opacity="0.7"/><rect x="161" y="581.0" width="1" height="91.4" opacity="1"/><rect x="162" y="587.9" width="1" height="81.6" opacity="1"/><rect x="163" y="573.5" width="1" height="89.9" opacity="1"/><rect x="164" y="584.5" width="1" height="87.8" opacity="1"/><rect x="165" y="576.4" width="1" height="91.3" opacity="0.7"/><rect x="166" y="582.3" width="1" height="82.3" opacity="0.7"/><rect x="167" y="590.9" width="1" height="74.6" opacity="1"/><rect x="168" y="572.8" width="1" height="97.9" opacity="0.85"/><rect x="169" y="582.7" width="1" height="75.9" opacity="1"/><rect x="170" y="589.1" width="1" height="81.7" opacity="0.85"/><rect x="171" y="589.6" width="1" height="82.6" opacity="0.7"/><rect x="172" y="585.5" width="1" height="81.6" opacity="1"/><rect x="173" y="588.4" width="1" height="76.0" opacity="1"/><rect x="174" y="579.9" width="1" height="80.8" opacity="1"/><rect x="175" y="587.0" width="1" height="74.6" opacity="0.85"/><rect x="176" y="586.0" width="1" height="73.4" opacity="1"/><rect x="177" y="584.1" width="1" height="84.6" opacity="0.85"/><rect x="178" y="586.4" width="1" height="72.1" opacity="1"/><rect x="179" y="585.1" width="1" height="82.1" opacity="1"/><rect x="180" y="580.2" width="1" height="89.5" opacity="1"/><rect x="181" y="588.0" width="1" height="80.5" opacity="1"/><rect x="182" y="582.2" width="1" height="86.6" opacity="0.7"/><rect x="183" y="591.4" width="1" height="74.3" opacity="1"/><rect x="184" y="581.5" width="1" height="81.4" opacity="0.85"/><rect x="185" y="589.9" width="1" height="72.2" opacity="1"/><rect x="186" y="590.9" width="1" height="70.9" opacity="1"/><rect x="187" y="586.0" width="1" height="73.3" opacity="1"/><rect x="189" y="581.6" width="1" height="76.1" opacity="1"/><rect x="190" y="588.2" width="1" height="71.9" opacity="0.7"/><rect x="191" y="581.6" width="1" height="83.4" opacity="0.85"/><rect x="192" y="588.5" width="1" height="72.4" opacity="0.85"/><rect x="193" y="582.0" width="1" height="93.8" opacity="1"/><rect x="194" y="581.8" width="1" height="82.2" opacity="0.85"/><rect x="195" y="581.5" width="1" height="74.2" opacity="0.85"/><rect x="196" y="587.7" width="1" height="77.2" opacity="0.7"/><rect x="197" y="588.7" width="1" height="82.1" opacity="0.7"/><rect x="198" y="587.1" width="1" height="68.6" opacity="1"/><rect x="199" y="586.2" width="1" height="74.4" opacity="1"/><rect x="200" y="591.0" width="1" height="68.1" opacity="1"/><rect x="201" y="587.0" width="1" height="83.4" opacity="0.7"/><rect x="202" y="587.1" width="1" height="68.8" opacity="0.85"/><rect x="203" y="587.0" width="1" height="74.0" opacity="1"/><rect x="204" y="586.8" width="1" height="81.4" opacity="0.7"/><rect x="205" y="585.2" width="1" height="82.1" opacity="1"/><rect x="207" y="587.2" width="1" height="81.2" opacity="1"/><rect x="208" y="580.7" width="1" height="77.7" opacity="0.7"/><rect x="209" y="584.1" width="1" height="74.7" opacity="0.7"/><rect x="210" y="584.6" width="1" height="72.2" opacity="1"/><rect x="211" y="587.7" width="1" height="76.5" opacity="1"/><rect x="212" y="582.1" width="1" height="91.5" opacity="1"/><rect x="213" y="587.4" width="1" height="83.8" opacity="1"/><rect x="214" y="584.4" width="1" height="86.1" opacity="1"/><rect x="215" y="584.5" width="1" height="88.1" opacity="1"/><rect x="216" y="586.1" width="1" height="76.8" opacity="1"/><rect x="217" y="583.2" width="1" height="88.5" opacity="0.85"/><rect x="218" y="585.8" width="1" height="82.7" opacity="1"/><rect x="219" y="587.8" width="1" height="80.7" opacity="1"/><rect x="220" y="581.8" width="1" height="81.4" opacity="1"/><rect x="221" y="583.7" width="1" height="73.3" opacity="1"/><rect x="222" y="585.7" width="1" height="90.2" opacity="1"/><rect x="223" y="582.4" width="1" height="76.6" opacity="0.85"/><rect x="224" y="579.2" width="1" height="92.4" opacity="1"/><rect x="225" y="585.8" width="1" height="88.8" opacity="1"/><rect x="226" y="588.2" width="1" height="84.8" opacity="0.7"/><rect x="227" y="585.4" width="1" height="86.6" opacity="1"/><rect x="228" y="590.3" width="1" height="84.5" opacity="1"/><rect x="229" y="590.4" width="1" height="82.8" opacity="1"/><rect x="230" y="576.9" width="1" height="87.0" opacity="0.85"/><rect x="236" y="587.9" width="1" height="73.7" opacity="1"/><rect x="237" y="588.9" width="1" height="65.8" opacity="1"/><rect x="238" y="580.8" width="1" height="93.3" opacity="1"/><rect x="239" y="586.4" width="1" height="87.0" opacity="0.7"/><rect x="240" y="580.7" width="1" height="81.0" opacity="0.85"/><rect x="241" y="590.0" width="1" height="69.0" opacity="0.85"/><rect x="242" y="583.3" width="1" height="72.9" opacity="0.85"/><rect x="243" y="587.3" width="1" height="72.3" opacity="1"/><rect x="244" y="587.4" width="1" height="79.0" opacity="0.7"/><rect x="245" y="586.4" width="1" height="69.2" opacity="1"/><rect x="246" y="588.0" width="1" height="71.9" opacity="1"/><rect x="247" y="584.2" width="1" height="80.2" opacity="1"/><rect x="248" y="585.5" width="1" height="73.2" opacity="0.7"/><rect x="249" y="586.9" width="1" height="85.8" opacity="1"/><rect x="250" y="585.9" width="1" height="84.9" opacity="0.7"/><rect x="251" y="586.7" width="1" height="70.0" opacity="1"/><rect x="252" y="583.9" width="1" height="84.1" opacity="0.85"/><rect x="253" y="591.8" width="1" height="70.3" opacity="1"/><rect x="254" y="587.0" width="1" height="85.6" opacity="0.7"/><rect x="255" y="584.0" width="1" height="82.1" opacity="1"/><rect x="256" y="586.8" width="1" height="81.3" opacity="1"/><rect x="257" y="584.8" width="1" height="84.4" opacity="0.85"/><rect x="258" y="590.7" width="1" height="79.1" opacity="1"/><rect x="259" y="589.6" width="1" height="81.0" opacity="0.85"/><rect x="260" y="581.0" width="1" height="78.8" opacity="1"/><rect x="261" y="591.6" width="1" height="79.1" opacity="0.85"/><rect x="262" y="587.3" width="1" height="83.2" opacity="0.85"/><rect x="263" y="592.8" width="1" height="82.8" opacity="1"/><rect x="264" y="586.7" width="1" height="84.8" opacity="1"/><rect x="265" y="587.5" width="1" height="76.4" opacity="1"/><rect x="266" y="583.5" width="1" height="73.9" opacity="1"/><rect x="267" y="591.8" width="1" height="79.2" opacity="1"/><rect x="268" y="583.1" width="1" height="89.2" opacity="1"/><rect x="269" y="583.1" width="1" height="85.9" opacity="1"/><rect x="270" y="584.5" width="1" height="83.1" opacity="1"/><rect x="271" y="584.9" width="1" height="81.6" opacity="1"/><rect x="272" y="584.2" width="1" height="79.9" opacity="1"/><rect x="273" y="583.7" width="1" height="82.5" opacity="1"/><rect x="274" y="592.6" width="1" height="73.3" opacity="0.85"/><rect x="275" y="581.8" width="1" height="93.7" opacity="1"/><rect x="276" y="581.9" width="1" height="84.4" opacity="1"/><rect x="277" y="592.5" width="1" height="80.4" opacity="1"/><rect x="278" y="592.6" width="1" height="81.8" opacity="1"/><rect x="279" y="586.7" width="1" height="85.9" opacity="1"/><rect x="280" y="593.3" width="1" height="79.6" opacity="1"/><rect x="281" y="581.3" width="1" height="81.1" opacity="0.7"/><rect x="282" y="591.8" width="1" height="71.5" opacity="1"/><rect x="283" y="590.6" width="1" height="83.9" opacity="0.7"/><rect x="284" y="591.6" width="1" height="82.2" opacity="1"/><rect x="285" y="590.2" width="1" height="79.9" opacity="1"/><rect x="286" y="589.2" width="1" height="86.9" opacity="1"/><rect x="287" y="591.3" width="1" height="77.5" opacity="1"/><rect x="288" y="589.2" width="1" height="83.8" opacity="1"/><rect x="289" y="584.7" width="1" height="79.7" opacity="1"/><rect x="290" y="583.9" width="1" height="89.8" opacity="1"/><rect x="291" y="586.3" width="1" height="76.1" opacity="1"/><rect x="292" y="581.9" width="1" height="86.3" opacity="0.7"/><rect x="293" y="583.0" width="1" height="89.0" opacity="1"/><rect x="294" y="583.8" width="1" height="73.7" opacity="1"/><rect x="295" y="585.0" width="1" height="78.2" opacity="0.7"/><rect x="296" y="591.7" width="1" height="71.5" opacity="1"/><rect x="297" y="586.5" width="1" height="73.6" opacity="0.85"/><rect x="298" y="589.9" width="1" height="73.6" opacity="1"/><rect x="299" y="590.9" width="1" height="70.2" opacity="1"/><rect x="300" y="587.3" width="1" height="74.5" opacity="1"/><rect x="301" y="582.1" width="1" height="91.1" opacity="1"/><rect x="302" y="582.5" width="1" height="85.7" opacity="0.85"/><rect x="303" y="572.4" width="1" height="102.6" opacity="1"/><rect x="304" y="583.3" width="1" height="89.0" opacity="0.7"/><rect x="305" y="573.0" width="1" height="86.6" opacity="1"/><rect x="306" y="586.3" width="1" height="87.4" opacity="1"/><rect x="307" y="583.1" width="1" height="87.8" opacity="1"/><rect x="308" y="590.0" width="1" height="83.1" opacity="1"/><rect x="309" y="580.5" width="1" height="78.3" opacity="1"/><rect x="310" y="583.5" width="1" height="82.4" opacity="1"/><rect x="311" y="590.5" width="1" height="86.4" opacity="0.85"/><rect x="312" y="586.2" width="1" height="85.3" opacity="1"/><rect x="313" y="583.8" width="1" height="76.7" opacity="1"/><rect x="314" y="583.5" width="1" height="90.9" opacity="1"/><rect x="315" y="587.5" width="1" height="80.5" opacity="1"/><rect x="316" y="593.1" width="1" height="70.2" opacity="1"/><rect x="317" y="584.9" width="1" height="83.4" opacity="1"/><rect x="318" y="591.0" width="1" height="74.7" opacity="1"/><rect x="319" y="586.6" width="1" height="87.0" opacity="1"/><rect x="320" y="583.2" width="1" height="74.6" opacity="1"/><rect x="321" y="582.7" width="1" height="83.2" opacity="1"/><rect x="322" y="582.3" width="1" height="79.3" opacity="1"/><rect x="323" y="582.5" width="1" height="89.3" opacity="1"/><rect x="324" y="578.6" width="1" height="96.3" opacity="1"/><rect x="325" y="586.9" width="1" height="80.2" opacity="0.7"/><rect x="326" y="590.8" width="1" height="71.2" opacity="1"/><rect x="327" y="590.9" width="1" height="72.6" opacity="0.7"/><rect x="328" y="588.3" width="1" height="83.7" opacity="0.7"/><rect x="329" y="588.5" width="1" height="73.3" opacity="1"/><rect x="330" y="590.1" width="1" height="83.3" opacity="1"/><rect x="331" y="587.6" width="1" height="82.0" opacity="1"/><rect x="332" y="591.9" width="1" height="72.7" opacity="0.85"/><rect x="333" y="587.9" width="1" height="87.8" opacity="0.7"/><rect x="334" y="589.5" width="1" height="69.7" opacity="0.85"/><rect x="335" y="590.8" width="1" height="84.7" opacity="0.85"/><rect x="336" y="590.4" width="1" height="77.1" opacity="0.85"/><rect x="337" y="586.7" width="1" height="75.8" opacity="1"/><rect x="338" y="586.1" width="1" height="77.7" opacity="0.7"/><rect x="339" y="588.1" width="1" height="76.2" opacity="0.7"/><rect x="340" y="581.9" width="1" height="84.7" opacity="1"/><rect x="341" y="585.4" width="1" height="71.7" opacity="1"/><rect x="342" y="583.6" width="1" height="92.1" opacity="0.7"/><rect x="343" y="586.5" width="1" height="85.2" opacity="1"/><rect x="344" y="588.2" width="1" height="72.1" opacity="0.7"/><rect x="345" y="589.6" width="1" height="69.6" opacity="1"/><rect x="347" y="584.5" width="1" height="82.4" opacity="0.85"/><rect x="348" y="582.3" width="1" height="85.5" opacity="0.85"/><rect x="349" y="588.8" width="1" height="82.5" opacity="1"/><rect x="350" y="590.9" width="1" height="67.0" opacity="1"/><rect x="351" y="582.1" width="1" height="85.5" opacity="1"/><rect x="352" y="586.7" width="1" height="84.2" opacity="1"/><rect x="353" y="582.2" width="1" height="91.0" opacity="1"/><rect x="354" y="582.2" width="1" height="85.2" opacity="0.85"/><rect x="355" y="584.0" width="1" height="87.9" opacity="1"/><rect x="356" y="583.4" width="1" height="86.2" opacity="1"/><rect x="357" y="584.6" width="1" height="75.2" opacity="0.7"/><rect x="358" y="591.3" width="1" height="74.4" opacity="1"/><rect x="359" y="585.4" width="1" height="77.1" opacity="0.85"/><rect x="360" y="575.6" width="1" height="83.1" opacity="1"/><rect x="361" y="588.8" width="1" height="82.8" opacity="1"/><rect x="362" y="584.7" width="1" height="74.0" opacity="0.7"/><rect x="363" y="585.1" width="1" height="85.7" opacity="1"/><rect x="364" y="584.8" width="1" height="77.0" opacity="0.7"/><rect x="365" y="577.5" width="1" height="98.1" opacity="1"/><rect x="366" y="591.8" width="1" height="79.5" opacity="1"/><rect x="367" y="585.3" width="1" height="80.3" opacity="1"/><rect x="368" y="583.3" width="1" height="87.5" opacity="1"/><rect x="369" y="588.3" width="1" height="79.8" opacity="0.85"/><rect x="370" y="587.6" width="1" height="78.6" opacity="1"/><rect x="371" y="590.4" width="1" height="74.2" opacity="1"/><rect x="372" y="588.3" width="1" height="85.9" opacity="1"/><rect x="373" y="584.1" width="1" height="79.7" opacity="1"/><rect x="374" y="584.0" width="1" height="78.9" opacity="0.85"/><rect x="375" y="583.2" width="1" height="73.9" opacity="0.7"/><rect x="376" y="592.7" width="1" height="66.7" opacity="0.7"/><rect x="377" y="591.8" width="1" height="67.1" opacity="0.7"/><rect x="378" y="585.8" width="1" height="81.3" opacity="1"/><rect x="379" y="582.8" width="1" height="82.5" opacity="0.7"/><rect x="384" y="585.0" width="1" height="73.5" opacity="1"/><rect x="385" y="583.5" width="1" height="73.3" opacity="1"/><rect x="386" y="581.9" width="1" height="91.7" opacity="0.85"/><rect x="387" y="590.3" width="1" height="84.6" opacity="1"/><rect x="388" y="583.3" width="1" height="78.6" opacity="1"/><rect x="389" y="582.3" width="1" height="92.8" opacity="1"/><rect x="390" y="587.6" width="1" height="83.9" opacity="1"/><rect x="391" y="586.6" width="1" height="88.8" opacity="0.85"/><rect x="392" y="583.5" width="1" height="81.6" opacity="0.7"/><rect x="393" y="591.2" width="1" height="69.9" opacity="0.85"/><rect x="394" y="575.3" width="1" height="87.0" opacity="0.7"/><rect x="395" y="583.9" width="1" height="89.9" opacity="0.85"/><rect x="396" y="573.9" width="1" height="97.9" opacity="1"/><rect x="397" y="585.7" width="1" height="86.7" opacity="0.85"/><rect x="398" y="581.5" width="1" height="79.7" opacity="0.7"/><rect x="399" y="587.4" width="1" height="81.2" opacity="1"/><rect x="400" y="586.5" width="1" height="84.9" opacity="1"/><rect x="401" y="581.4" width="1" height="80.1" opacity="1"/><rect x="402" y="583.0" width="1" height="79.0" opacity="0.7"/><rect x="403" y="583.4" width="1" height="87.4" opacity="0.85"/><rect x="404" y="591.5" width="1" height="72.1" opacity="0.85"/><rect x="405" y="587.2" width="1" height="79.7" opacity="1"/><rect x="406" y="583.8" width="1" height="87.5" opacity="1"/><rect x="407" y="585.9" width="1" height="76.0" opacity="1"/><rect x="408" y="580.7" width="1" height="93.2" opacity="0.85"/><rect x="409" y="585.4" width="1" height="75.6" opacity="1"/><rect x="410" y="583.7" width="1" height="88.5" opacity="1"/><rect x="411" y="589.0" width="1" height="82.3" opacity="0.85"/><rect x="412" y="590.4" width="1" height="71.2" opacity="1"/><rect x="413" y="584.9" width="1" height="78.7" opacity="1"/><rect x="414" y="581.7" width="1" height="85.1" opacity="0.7"/><rect x="415" y="585.7" width="1" height="71.1" opacity="1"/><rect x="416" y="589.0" width="1" height="71.7" opacity="1"/><rect x="417" y="591.2" width="1" height="72.4" opacity="1"/><rect x="418" y="584.0" width="1" height="72.9" opacity="0.7"/><rect x="419" y="586.2" width="1" height="76.3" opacity="1"/><rect x="420" y="592.4" width="1" height="68.0" opacity="1"/><rect x="421" y="585.6" width="1" height="80.2" opacity="1"/><rect x="422" y="586.4" width="1" height="86.1" opacity="0.7"/><rect x="423" y="588.7" width="1" height="84.2" opacity="1"/><rect x="424" y="587.6" width="1" height="71.2" opacity="1"/><rect x="425" y="591.9" width="1" height="71.1" opacity="1"/><rect x="426" y="587.8" width="1" height="86.9" opacity="1"/><rect x="427" y="588.8" width="1" height="75.0" opacity="1"/><rect x="428" y="580.5" width="1" height="78.0" opacity="0.85"/><rect x="429" y="584.8" width="1" height="83.2" opacity="1"/><rect x="430" y="575.4" width="1" height="94.2" opacity="1"/><rect x="431" y="573.8" width="1" height="99.8" opacity="1"/><rect x="432" y="583.6" width="1" height="87.3" opacity="1"/><rect x="433" y="588.4" width="1" height="76.6" opacity="0.85"/><rect x="434" y="587.4" width="1" height="78.2" opacity="1"/><rect x="435" y="585.0" width="1" height="73.4" opacity="1"/><rect x="436" y="590.4" width="1" height="80.4" opacity="1"/><rect x="437" y="585.5" width="1" height="76.3" opacity="1"/><rect x="438" y="586.7" width="1" height="70.6" opacity="0.7"/><rect x="439" y="588.7" width="1" height="85.5" opacity="1"/><rect x="440" y="586.7" width="1" height="74.8" opacity="0.7"/><rect x="441" y="589.9" width="1" height="78.6" opacity="0.7"/><rect x="442" y="592.8" width="1" height="79.3" opacity="1"/><rect x="443" y="581.6" width="1" height="85.4" opacity="1"/><rect x="444" y="585.1" width="1" height="83.7" opacity="1"/><rect x="445" y="586.1" width="1" height="75.2" opacity="0.7"/><rect x="446" y="584.4" width="1" height="80.9" opacity="1"/><rect x="447" y="592.1" width="1" height="81.8" opacity="1"/><rect x="448" y="587.4" width="1" height="71.3" opacity="1"/><rect x="449" y="586.7" width="1" height="86.7" opacity="1"/><rect x="450" y="590.5" width="1" height="76.7" opacity="0.85"/><rect x="451" y="585.4" width="1" height="74.9" opacity="0.7"/><rect x="452" y="589.7" width="1" height="77.5" opacity="0.85"/><rect x="453" y="583.7" width="1" height="74.5" opacity="0.7"/><rect x="454" y="590.6" width="1" height="76.4" opacity="0.7"/><rect x="455" y="590.0" width="1" height="76.0" opacity="0.85"/><rect x="456" y="589.2" width="1" height="73.2" opacity="1"/><rect x="457" y="588.8" width="1" height="88.0" opacity="0.7"/><rect x="458" y="588.5" width="1" height="71.7" opacity="1"/><rect x="459" y="583.7" width="1" height="91.5" opacity="1"/><rect x="460" y="587.2" width="1" height="76.8" opacity="1"/><rect x="461" y="589.1" width="1" height="71.5" opacity="0.85"/><rect x="462" y="582.9" width="1" height="93.8" opacity="1"/><rect x="463" y="585.1" width="1" height="81.8" opacity="1"/><rect x="464" y="591.0" width="1" height="73.4" opacity="1"/><rect x="465" y="589.1" width="1" height="75.2" opacity="1"/><rect x="466" y="588.1" width="1" height="85.8" opacity="0.85"/><rect x="467" y="584.7" width="1" height="81.9" opacity="1"/><rect x="468" y="585.7" width="1" height="74.4" opacity="0.85"/><rect x="469" y="588.2" width="1" height="75.3" opacity="1"/><rect x="470" y="583.0" width="1" height="91.8" opacity="1"/><rect x="471" y="584.8" width="1" height="80.6" opacity="1"/><rect x="472" y="590.9" width="1" height="67.4" opacity="1"/><rect x="473" y="590.4" width="1" height="70.2" opacity="0.85"/><rect x="474" y="578.3" width="1" height="81.1" opacity="1"/><rect x="475" y="590.5" width="1" height="70.5" opacity="0.7"/><rect x="476" y="587.7" width="1" height="71.3" opacity="1"/><rect x="477" y="589.5" width="1" height="71.7" opacity="1"/><rect x="478" y="592.3" width="1" height="66.3" opacity="0.85"/><rect x="479" y="584.3" width="1" height="84.2" opacity="1"/><rect x="480" y="578.6" width="1" height="78.3" opacity="1"/><rect x="481" y="583.7" width="1" height="85.4" opacity="0.7"/><rect x="482" y="577.2" width="1" height="83.3" opacity="1"/><rect x="483" y="585.9" width="1" height="73.9" opacity="1"/><rect x="484" y="584.8" width="1" height="84.9" opacity="0.85"/><rect x="485" y="585.4" width="1" height="78.3" opacity="0.85"/><rect x="486" y="591.2" width="1" height="68.6" opacity="1"/><rect x="487" y="588.8" width="1" height="71.7" opacity="1"/><rect x="488" y="585.6" width="1" height="87.2" opacity="1"/><rect x="489" y="590.1" width="1" height="75.6" opacity="1"/><rect x="490" y="589.2" width="1" height="68.6" opacity="0.7"/><rect x="491" y="582.7" width="1" height="84.9" opacity="1"/><rect x="492" y="592.6" width="1" height="64.3" opacity="1"/><rect x="493" y="587.5" width="1" height="74.5" opacity="1"/><rect x="494" y="584.4" width="1" height="72.6" opacity="0.7"/><rect x="495" y="588.0" width="1" height="72.8" opacity="1"/><rect x="496" y="592.3" width="1" height="83.0" opacity="1"/><rect x="497" y="590.2" width="1" height="77.1" opacity="0.85"/><rect x="498" y="585.2" width="1" height="72.1" opacity="1"/><rect x="499" y="591.3" width="1" height="70.2" opacity="0.85"/><rect x="500" y="591.4" width="1" height="72.4" opacity="1"/><rect x="501" y="588.0" width="1" height="81.9" opacity="0.7"/><rect x="502" y="588.9" width="1" height="73.8" opacity="1"/><rect x="503" y="577.9" width="1" height="83.0" opacity="0.85"/><rect x="504" y="589.2" width="1" height="80.9" opacity="1"/><rect x="505" y="585.4" width="1" height="83.2" opacity="1"/><rect x="506" y="585.8" width="1" height="71.5" opacity="1"/><rect x="507" y="591.5" width="1" height="71.7" opacity="1"/><rect x="508" y="587.7" width="1" height="83.5" opacity="1"/><rect x="509" y="591.9" width="1" height="74.2" opacity="0.85"/><rect x="510" y="592.5" width="1" height="82.7" opacity="1"/><rect x="511" y="580.0" width="1" height="83.3" opacity="0.85"/><rect x="512" y="582.4" width="1" height="87.6" opacity="1"/><rect x="513" y="591.7" width="1" height="81.9" opacity="1"/><rect x="514" y="586.3" width="1" height="71.9" opacity="1"/><rect x="515" y="585.7" width="1" height="71.3" opacity="1"/><rect x="516" y="582.6" width="1" height="86.7" opacity="0.85"/><rect x="517" y="586.7" width="1" height="78.5" opacity="1"/><rect x="518" y="575.7" width="1" height="90.9" opacity="1"/><rect x="519" y="592.4" width="1" height="78.5" opacity="1"/><rect x="520" y="582.5" width="1" height="75.8" opacity="1"/><rect x="521" y="588.5" width="1" height="82.5" opacity="1"/><rect x="522" y="591.8" width="1" height="66.0" opacity="1"/><rect x="523" y="591.6" width="1" height="84.2" opacity="0.7"/><rect x="524" y="586.1" width="1" height="79.6" opacity="1"/><rect x="525" y="589.6" width="1" height="80.8" opacity="1"/><rect x="526" y="587.5" width="1" height="75.6" opacity="0.7"/><rect x="527" y="592.0" width="1" height="78.3" opacity="1"/><rect x="528" y="582.6" width="1" height="91.8" opacity="0.7"/><rect x="529" y="584.6" width="1" height="75.6" opacity="1"/><rect x="530" y="590.4" width="1" height="85.0" opacity="0.85"/><rect x="531" y="590.4" width="1" height="74.2" opacity="1"/><rect x="532" y="591.8" width="1" height="72.0" opacity="0.7"/><rect x="533" y="582.2" width="1" height="79.9" opacity="0.7"/><rect x="534" y="584.2" width="1" height="90.6" opacity="1"/><rect x="535" y="590.4" width="1" height="85.6" opacity="1"/><rect x="536" y="583.4" width="1" height="85.8" opacity="1"/><rect x="537" y="581.5" width="1" height="91.5" opacity="1"/><rect x="538" y="588.7" width="1" height="68.0" opacity="1"/><rect x="539" y="585.4" width="1" height="76.3" opacity="1"/><rect x="540" y="589.5" width="1" height="75.3" opacity="1"/><rect x="541" y="591.4" width="1" height="75.2" opacity="1"/><rect x="542" y="586.8" width="1" height="86.7" opacity="0.85"/><rect x="543" y="585.4" width="1" height="81.0" opacity="1"/><rect x="544" y="585.5" width="1" height="88.7" opacity="1"/><rect x="545" y="591.2" width="1" height="66.2" opacity="1"/><rect x="546" y="587.5" width="1" height="74.2" opacity="1"/><rect x="547" y="583.7" width="1" height="74.1" opacity="1"/><rect x="548" y="589.3" width="1" height="69.5" opacity="0.7"/><rect x="549" y="580.3" width="1" height="88.4" opacity="1"/><rect x="550" y="587.0" width="1" height="70.0" opacity="0.7"/><rect x="551" y="581.8" width="1" height="91.1" opacity="1"/><rect x="552" y="583.2" width="1" height="90.5" opacity="0.85"/><rect x="553" y="585.7" width="1" height="86.5" opacity="1"/><rect x="554" y="586.6" width="1" height="78.8" opacity="1"/><rect x="555" y="586.2" width="1" height="72.0" opacity="0.7"/><rect x="556" y="583.1" width="1" height="75.6" opacity="1"/><rect x="557" y="581.4" width="1" height="84.4" opacity="1"/><rect x="559" y="588.1" width="1" height="73.0" opacity="0.85"/><rect x="560" y="574.8" width="1" height="92.9" opacity="0.85"/><rect x="561" y="586.5" width="1" height="74.4" opacity="1"/><rect x="562" y="586.4" width="1" height="81.6" opacity="1"/><rect x="563" y="587.9" width="1" height="84.8" opacity="1"/><rect x="564" y="585.2" width="1" height="84.7" opacity="1"/><rect x="565" y="588.9" width="1" height="68.2" opacity="1"/><rect x="566" y="583.4" width="1" height="87.5" opacity="1"/><rect x="567" y="585.2" width="1" height="88.5" opacity="1"/><rect x="568" y="589.4" width="1" height="71.9" opacity="0.7"/><rect x="569" y="580.4" width="1" height="92.3" opacity="0.85"/><rect x="570" y="591.0" width="1" height="66.1" opacity="0.85"/><rect x="571" y="581.6" width="1" height="82.8" opacity="1"/><rect x="572" y="590.2" width="1" height="69.6" opacity="0.85"/><rect x="573" y="590.8" width="1" height="66.6" opacity="0.85"/><rect x="574" y="582.0" width="1" height="80.8" opacity="1"/><rect x="575" y="590.0" width="1" height="75.3" opacity="0.7"/><rect x="576" y="582.2" width="1" height="93.1" opacity="1"/><rect x="577" y="589.5" width="1" height="67.1" opacity="1"/><rect x="578" y="588.8" width="1" height="83.3" opacity="0.85"/><rect x="579" y="588.2" width="1" height="73.5" opacity="0.7"/><rect x="580" y="581.8" width="1" height="91.6" opacity="0.7"/><rect x="581" y="585.0" width="1" height="74.5" opacity="0.85"/><rect x="582" y="581.4" width="1" height="82.1" opacity="1"/><rect x="583" y="590.7" width="1" height="70.2" opacity="0.7"/><rect x="584" y="583.7" width="1" height="80.3" opacity="1"/><rect x="585" y="581.3" width="1" height="92.0" opacity="0.7"/><rect x="586" y="589.9" width="1" height="71.7" opacity="1"/><rect x="587" y="588.4" width="1" height="69.8" opacity="1"/><rect x="588" y="586.4" width="1" height="72.6" opacity="0.7"/><rect x="589" y="573.0" width="1" height="102.2" opacity="1"/><rect x="590" y="591.3" width="1" height="69.8" opacity="1"/><rect x="591" y="587.0" width="1" height="79.3" opacity="0.7"/><rect x="592" y="588.9" width="1" height="81.5" opacity="0.7"/><rect x="594" y="584.1" width="1" height="90.6" opacity="1"/><rect x="595" y="585.9" width="1" height="86.2" opacity="0.7"/><rect x="596" y="591.0" width="1" height="80.7" opacity="0.85"/><rect x="597" y="587.8" width="1" height="81.9" opacity="1"/><rect x="598" y="584.8" width="1" height="72.2" opacity="1"/><rect x="599" y="586.8" width="1" height="86.2" opacity="1"/><rect x="600" y="581.6" width="1" height="88.5" opacity="0.85"/><rect x="601" y="588.0" width="1" height="83.3" opacity="1"/><rect x="602" y="587.8" width="1" height="86.8" opacity="0.7"/><rect x="603" y="581.1" width="1" height="88.9" opacity="1"/><rect x="604" y="590.9" width="1" height="65.2" opacity="1"/><rect x="605" y="582.3" width="1" height="73.9" opacity="1"/><rect x="606" y="581.7" width="1" height="92.5" opacity="1"/><rect x="607" y="582.8" width="1" height="84.6" opacity="1"/><rect x="608" y="580.6" width="1" height="75.7" opacity="0.7"/><rect x="609" y="581.2" width="1" height="89.9" opacity="1"/><rect x="610" y="587.8" width="1" height="86.9" opacity="1"/><rect x="611" y="588.3" width="1" height="86.0" opacity="0.7"/><rect x="612" y="582.3" width="1" height="92.0" opacity="1"/><rect x="613" y="582.5" width="1" height="72.6" opacity="1"/><rect x="614" y="587.6" width="1" height="76.4" opacity="0.7"/><rect x="615" y="584.6" width="1" height="82.2" opacity="1"/><rect x="616" y="580.7" width="1" height="86.1" opacity="1"/><rect x="617" y="589.2" width="1" height="82.3" opacity="1"/><rect x="618" y="584.8" width="1" height="83.7" opacity="0.85"/><rect x="619" y="583.9" width="1" height="71.8" opacity="1"/><rect x="620" y="586.2" width="1" height="88.7" opacity="0.85"/><rect x="621" y="582.4" width="1" height="77.1" opacity="0.7"/><rect x="622" y="587.0" width="1" height="83.5" opacity="1"/><rect x="623" y="584.5" width="1" height="74.6" opacity="1"/><rect x="624" y="586.3" width="1" height="84.0" opacity="0.85"/><rect x="625" y="589.3" width="1" height="84.8" opacity="0.7"/><rect x="626" y="586.9" width="1" height="82.9" opacity="1"/><rect x="627" y="587.3" width="1" height="67.9" opacity="0.85"/><rect x="628" y="572.5" width="1" height="93.4" opacity="0.85"/><rect x="629" y="589.4" width="1" height="67.2" opacity="0.85"/><rect x="630" y="581.9" width="1" height="92.8" opacity="1"/><rect x="631" y="588.8" width="1" height="80.6" opacity="1"/><rect x="632" y="590.5" width="1" height="65.5" opacity="1"/><rect x="633" y="583.0" width="1" height="74.3" opacity="1"/><rect x="634" y="583.8" width="1" height="89.8" opacity="0.85"/><rect x="635" y="586.8" width="1" height="76.0" opacity="1"/><rect x="636" y="588.1" width="1" height="69.7" opacity="1"/><rect x="637" y="582.6" width="1" height="79.6" opacity="1"/><rect x="638" y="587.1" width="1" height="79.4" opacity="0.7"/><rect x="639" y="591.1" width="1" height="80.6" opacity="0.85"/><rect x="640" y="585.1" width="1" height="74.6" opacity="1"/><rect x="641" y="584.0" width="1" height="80.6" opacity="1"/><rect x="642" y="580.8" width="1" height="90.2" opacity="1"/><rect x="643" y="581.5" width="1" height="85.0" opacity="0.7"/><rect x="644" y="582.2" width="1" height="74.0" opacity="0.7"/><rect x="645" y="578.5" width="1" height="84.1" opacity="0.85"/><rect x="646" y="582.6" width="1" height="82.8" opacity="1"/><rect x="647" y="581.4" width="1" height="84.6" opacity="0.7"/><rect x="648" y="584.7" width="1" height="74.3" opacity="0.7"/><rect x="649" y="583.3" width="1" height="80.9" opacity="1"/><rect x="651" y="591.0" width="1" height="74.5" opacity="0.7"/><rect x="652" y="590.5" width="1" height="68.8" opacity="1"/><rect x="653" y="584.0" width="1" height="78.8" opacity="1"/><rect x="654" y="586.4" width="1" height="78.5" opacity="1"/><rect x="655" y="580.4" width="1" height="78.0" opacity="1"/><rect x="656" y="586.5" width="1" height="83.2" opacity="0.85"/><rect x="657" y="583.8" width="1" height="86.9" opacity="1"/><rect x="658" y="589.0" width="1" height="82.0" opacity="0.7"/><rect x="659" y="587.6" width="1" height="76.5" opacity="1"/><rect x="660" y="585.7" width="1" height="87.9" opacity="1"/><rect x="662" y="582.9" width="1" height="88.8" opacity="1"/><rect x="663" y="582.3" width="1" height="92.3" opacity="1"/><rect x="664" y="588.4" width="1" height="77.9" opacity="1"/><rect x="665" y="582.5" width="1" height="88.2" opacity="1"/><rect x="666" y="588.2" width="1" height="77.0" opacity="1"/><rect x="667" y="591.0" width="1" height="72.5" opacity="1"/><rect x="668" y="587.5" width="1" height="80.5" opacity="0.85"/><rect x="669" y="588.4" width="1" height="74.4" opacity="1"/><rect x="670" y="590.0" width="1" height="68.5" opacity="1"/><rect x="671" y="583.6" width="1" height="80.1" opacity="1"/></g>
<g fill="url(#gG)"><rect x="18" y="582.6" width="1" height="98.4" opacity="1"/><rect x="19" y="576.3" width="1" height="100.6" opacity="0.55"/><rect x="21" y="577.1" width="1" height="99.2" opacity="0.7"/><rect x="23" y="575.8" width="1" height="89.0" opacity="0.55"/><rect x="24" y="564.5" width="1" height="104.5" opacity="0.85"/><rect x="26" y="582.3" width="1" height="84.3" opacity="0.7"/><rect x="30" y="585.7" width="1" height="92.2" opacity="0.85"/><rect x="31" y="590.0" width="1" height="79.7" opacity="0.7"/><rect x="35" y="571.2" width="1" height="91.6" opacity="0.7"/><rect x="36" y="575.6" width="1" height="95.8" opacity="0.55"/><rect x="38" y="590.0" width="1" height="80.5" opacity="1"/><rect x="39" y="572.2" width="1" height="94.5" opacity="0.85"/><rect x="43" y="567.9" width="1" height="99.9" opacity="0.85"/><rect x="44" y="578.7" width="1" height="101.5" opacity="0.85"/><rect x="45" y="575.3" width="1" height="98.5" opacity="0.55"/><rect x="46" y="574.2" width="1" height="89.3" opacity="1"/><rect x="49" y="571.6" width="1" height="99.0" opacity="0.55"/><rect x="50" y="564.5" width="1" height="105.3" opacity="1"/><rect x="52" y="567.9" width="1" height="104.7" opacity="0.7"/><rect x="54" y="580.5" width="1" height="90.8" opacity="0.55"/><rect x="61" y="570.2" width="1" height="96.0" opacity="1"/><rect x="62" y="586.8" width="1" height="86.9" opacity="0.7"/><rect x="63" y="577.3" width="1" height="98.6" opacity="1"/><rect x="64" y="580.0" width="1" height="97.5" opacity="0.55"/><rect x="67" y="565.5" width="1" height="102.7" opacity="0.55"/><rect x="69" y="568.7" width="1" height="111.0" opacity="0.7"/><rect x="71" y="570.6" width="1" height="93.5" opacity="0.85"/><rect x="73" y="581.4" width="1" height="86.5" opacity="1"/><rect x="74" y="567.9" width="1" height="99.3" opacity="1"/><rect x="76" y="587.1" width="1" height="80.6" opacity="1"/><rect x="81" y="580.9" width="1" height="86.0" opacity="0.7"/><rect x="86" y="574.6" width="1" height="106.5" opacity="0.55"/><rect x="87" y="581.3" width="1" height="91.6" opacity="0.55"/><rect x="88" y="580.7" width="1" height="82.3" opacity="1"/><rect x="92" y="562.7" width="1" height="113.4" opacity="0.7"/><rect x="94" y="580.3" width="1" height="87.3" opacity="1"/><rect x="95" y="574.3" width="1" height="101.6" opacity="1"/><rect x="98" y="587.6" width="1" height="75.2" opacity="1"/><rect x="99" y="589.8" width="1" height="91.2" opacity="1"/><rect x="100" y="582.7" width="1" height="89.9" opacity="0.85"/><rect x="103" y="569.1" width="1" height="102.4" opacity="0.85"/><rect x="104" y="564.9" width="1" height="115.3" opacity="1"/><rect x="105" y="582.1" width="1" height="88.0" opacity="1"/><rect x="106" y="579.3" width="1" height="96.8" opacity="1"/><rect x="107" y="585.4" width="1" height="88.6" opacity="1"/><rect x="108" y="587.9" width="1" height="94.7" opacity="0.7"/><rect x="109" y="565.9" width="1" height="112.2" opacity="0.7"/><rect x="111" y="566.1" width="1" height="112.1" opacity="0.7"/><rect x="113" y="582.4" width="1" height="82.4" opacity="0.7"/><rect x="115" y="576.9" width="1" height="96.7" opacity="1"/><rect x="117" y="587.1" width="1" height="95.0" opacity="1"/><rect x="121" y="572.0" width="1" height="95.9" opacity="0.7"/><rect x="122" y="568.6" width="1" height="106.3" opacity="1"/><rect x="125" y="575.6" width="1" height="95.4" opacity="0.85"/><rect x="128" y="577.7" width="1" height="96.2" opacity="1"/><rect x="130" y="586.3" width="1" height="88.8" opacity="0.55"/><rect x="132" y="584.0" width="1" height="80.0" opacity="1"/><rect x="133" y="585.0" width="1" height="91.4" opacity="1"/><rect x="134" y="570.4" width="1" height="95.5" opacity="1"/><rect x="135" y="575.9" width="1" height="91.1" opacity="1"/><rect x="136" y="574.9" width="1" height="99.4" opacity="1"/><rect x="137" y="588.9" width="1" height="74.8" opacity="1"/><rect x="139" y="576.3" width="1" height="87.3" opacity="0.55"/><rect x="140" y="553.4" width="1" height="118.7" opacity="0.7"/><rect x="142" y="572.9" width="1" height="105.7" opacity="0.55"/><rect x="143" y="580.3" width="1" height="96.3" opacity="1"/><rect x="144" y="580.7" width="1" height="100.2" opacity="0.85"/><rect x="145" y="582.3" width="1" height="92.9" opacity="0.55"/><rect x="146" y="570.4" width="1" height="96.0" opacity="0.85"/><rect x="148" y="583.6" width="1" height="90.5" opacity="1"/><rect x="149" y="588.3" width="1" height="77.9" opacity="1"/><rect x="150" y="573.1" width="1" height="97.7" opacity="0.7"/><rect x="151" y="576.3" width="1" height="102.9" opacity="1"/><rect x="152" y="577.8" width="1" height="86.5" opacity="0.55"/><rect x="153" y="568.7" width="1" height="114.5" opacity="0.55"/><rect x="154" y="576.5" width="1" height="108.7" opacity="1"/><rect x="156" y="579.9" width="1" height="93.8" opacity="1"/><rect x="157" y="579.9" width="1" height="101.0" opacity="1"/><rect x="158" y="575.8" width="1" height="106.5" opacity="0.85"/><rect x="159" y="582.5" width="1" height="98.9" opacity="0.85"/><rect x="161" y="587.7" width="1" height="90.4" opacity="0.7"/><rect x="162" y="569.4" width="1" height="99.7" opacity="0.55"/><rect x="164" y="584.8" width="1" height="80.0" opacity="1"/><rect x="165" y="573.7" width="1" height="93.8" opacity="0.85"/><rect x="166" y="574.1" width="1" height="92.8" opacity="0.7"/><rect x="167" y="584.4" width="1" height="81.0" opacity="0.55"/><rect x="170" y="577.8" width="1" height="92.7" opacity="0.55"/><rect x="171" y="578.6" width="1" height="88.1" opacity="1"/><rect x="174" y="576.4" width="1" height="104.7" opacity="0.85"/><rect x="175" y="580.3" width="1" height="90.3" opacity="1"/><rect x="178" y="575.7" width="1" height="94.7" opacity="1"/><rect x="179" y="571.7" width="1" height="110.1" opacity="0.7"/><rect x="180" y="582.6" width="1" height="98.8" opacity="0.85"/><rect x="182" y="580.4" width="1" height="86.2" opacity="0.7"/><rect x="183" y="579.5" width="1" height="94.6" opacity="1"/><rect x="184" y="578.5" width="1" height="99.8" opacity="1"/><rect x="186" y="584.7" width="1" height="77.7" opacity="1"/><rect x="187" y="584.8" width="1" height="93.2" opacity="1"/><rect x="191" y="590.3" width="1" height="78.0" opacity="0.85"/><rect x="192" y="564.8" width="1" height="100.5" opacity="1"/><rect x="194" y="572.1" width="1" height="104.1" opacity="0.7"/><rect x="195" y="560.2" width="1" height="117.5" opacity="1"/><rect x="196" y="583.4" width="1" height="92.1" opacity="0.55"/><rect x="197" y="583.0" width="1" height="91.4" opacity="0.55"/><rect x="198" y="569.0" width="1" height="98.5" opacity="1"/><rect x="199" y="590.1" width="1" height="90.7" opacity="0.7"/><rect x="203" y="573.5" width="1" height="97.3" opacity="1"/><rect x="213" y="571.9" width="1" height="109.6" opacity="1"/><rect x="215" y="589.5" width="1" height="89.8" opacity="1"/><rect x="223" y="578.7" width="1" height="96.0" opacity="0.7"/><rect x="229" y="583.6" width="1" height="106.6" opacity="1"/><rect x="238" y="585.1" width="1" height="89.9" opacity="0.7"/><rect x="239" y="569.6" width="1" height="111.7" opacity="0.7"/><rect x="242" y="552.7" width="1" height="123.2" opacity="0.55"/><rect x="249" y="564.9" width="1" height="100.7" opacity="0.55"/><rect x="253" y="572.3" width="1" height="92.5" opacity="0.55"/><rect x="255" y="581.7" width="1" height="96.2" opacity="0.55"/><rect x="258" y="552.3" width="1" height="121.0" opacity="0.55"/><rect x="270" y="584.7" width="1" height="93.7" opacity="1"/><rect x="271" y="581.5" width="1" height="98.7" opacity="0.85"/><rect x="279" y="565.3" width="1" height="97.8" opacity="1"/><rect x="282" y="573.2" width="1" height="117.2" opacity="0.7"/><rect x="284" y="572.6" width="1" height="94.0" opacity="0.55"/><rect x="286" y="574.7" width="1" height="104.8" opacity="1"/><rect x="287" y="586.7" width="1" height="75.9" opacity="1"/><rect x="291" y="566.4" width="1" height="122.5" opacity="0.85"/><rect x="292" y="573.3" width="1" height="103.4" opacity="0.7"/><rect x="294" y="580.9" width="1" height="92.3" opacity="1"/><rect x="297" y="566.0" width="1" height="103.3" opacity="0.85"/><rect x="299" y="571.8" width="1" height="92.2" opacity="1"/><rect x="300" y="572.4" width="1" height="97.6" opacity="0.55"/><rect x="301" y="583.9" width="1" height="96.2" opacity="0.85"/><rect x="303" y="575.1" width="1" height="99.3" opacity="0.7"/><rect x="304" y="558.0" width="1" height="123.2" opacity="1"/><rect x="305" y="568.4" width="1" height="112.6" opacity="0.55"/><rect x="310" y="564.7" width="1" height="109.3" opacity="1"/><rect x="312" y="565.2" width="1" height="105.3" opacity="1"/><rect x="313" y="582.7" width="1" height="92.1" opacity="0.7"/><rect x="314" y="575.5" width="1" height="87.5" opacity="1"/><rect x="315" y="574.9" width="1" height="97.9" opacity="1"/><rect x="316" y="587.3" width="1" height="81.5" opacity="0.85"/><rect x="317" y="557.5" width="1" height="117.6" opacity="1"/><rect x="318" y="582.4" width="1" height="88.2" opacity="1"/><rect x="321" y="573.3" width="1" height="93.3" opacity="0.7"/><rect x="322" y="586.3" width="1" height="88.5" opacity="0.85"/><rect x="323" y="565.6" width="1" height="107.7" opacity="1"/><rect x="324" y="586.6" width="1" height="90.1" opacity="1"/><rect x="325" y="579.8" width="1" height="100.6" opacity="1"/><rect x="326" y="571.8" width="1" height="103.4" opacity="1"/><rect x="327" y="566.3" width="1" height="111.5" opacity="0.55"/><rect x="328" y="569.1" width="1" height="106.4" opacity="0.7"/><rect x="329" y="568.3" width="1" height="108.4" opacity="0.55"/><rect x="330" y="562.4" width="1" height="102.6" opacity="1"/><rect x="332" y="565.0" width="1" height="107.7" opacity="1"/><rect x="333" y="578.6" width="1" height="93.1" opacity="1"/><rect x="334" y="584.9" width="1" height="89.9" opacity="0.55"/><rect x="336" y="569.1" width="1" height="108.5" opacity="0.55"/><rect x="337" y="578.7" width="1" height="85.4" opacity="1"/><rect x="340" y="572.0" width="1" height="99.7" opacity="1"/><rect x="341" y="565.0" width="1" height="97.7" opacity="0.7"/><rect x="343" y="584.0" width="1" height="78.4" opacity="0.85"/><rect x="344" y="574.3" width="1" height="106.5" opacity="1"/><rect x="345" y="580.7" width="1" height="98.3" opacity="0.85"/><rect x="348" y="571.8" width="1" height="109.6" opacity="1"/><rect x="352" y="580.2" width="1" height="85.6" opacity="1"/><rect x="355" y="571.3" width="1" height="101.7" opacity="0.55"/><rect x="357" y="565.8" width="1" height="102.4" opacity="1"/><rect x="358" y="570.6" width="1" height="100.3" opacity="1"/><rect x="361" y="585.3" width="1" height="98.3" opacity="0.85"/><rect x="363" y="586.6" width="1" height="86.7" opacity="1"/><rect x="364" y="588.0" width="1" height="87.3" opacity="1"/><rect x="365" y="587.5" width="1" height="78.5" opacity="0.55"/><rect x="370" y="590.0" width="1" height="82.6" opacity="0.7"/><rect x="371" y="578.3" width="1" height="89.2" opacity="1"/><rect x="373" y="575.4" width="1" height="106.4" opacity="1"/><rect x="374" y="565.3" width="1" height="102.8" opacity="1"/><rect x="375" y="576.2" width="1" height="95.9" opacity="1"/><rect x="376" y="565.2" width="1" height="113.9" opacity="1"/><rect x="377" y="580.8" width="1" height="93.2" opacity="0.55"/><rect x="385" y="572.6" width="1" height="95.0" opacity="1"/><rect x="390" y="582.4" width="1" height="98.1" opacity="0.85"/><rect x="392" y="580.9" width="1" height="107.5" opacity="1"/><rect x="393" y="574.0" width="1" height="88.9" opacity="0.55"/><rect x="394" y="585.1" width="1" height="77.8" opacity="0.85"/><rect x="396" y="588.2" width="1" height="88.8" opacity="0.55"/><rect x="398" y="579.1" width="1" height="94.3" opacity="0.55"/><rect x="404" y="567.4" width="1" height="105.0" opacity="0.7"/><rect x="405" y="588.8" width="1" height="86.3" opacity="0.7"/><rect x="406" y="578.6" width="1" height="99.7" opacity="1"/><rect x="407" y="576.8" width="1" height="103.1" opacity="1"/><rect x="410" y="577.6" width="1" height="108.8" opacity="0.85"/><rect x="411" y="569.7" width="1" height="103.5" opacity="0.85"/><rect x="419" y="565.3" width="1" height="104.0" opacity="1"/><rect x="432" y="584.7" width="1" height="78.1" opacity="0.7"/><rect x="433" y="564.7" width="1" height="101.5" opacity="1"/><rect x="434" y="577.8" width="1" height="102.1" opacity="0.7"/><rect x="436" y="570.9" width="1" height="105.0" opacity="0.7"/><rect x="439" y="581.6" width="1" height="98.3" opacity="1"/><rect x="445" y="581.8" width="1" height="84.2" opacity="0.55"/><rect x="447" y="567.3" width="1" height="124.5" opacity="1"/><rect x="449" y="570.9" width="1" height="106.5" opacity="0.7"/><rect x="462" y="567.5" width="1" height="104.0" opacity="1"/><rect x="467" y="565.6" width="1" height="105.9" opacity="0.55"/><rect x="470" y="585.9" width="1" height="96.6" opacity="1"/><rect x="471" y="576.8" width="1" height="102.9" opacity="0.55"/><rect x="473" y="573.3" width="1" height="89.3" opacity="1"/><rect x="474" y="574.8" width="1" height="106.9" opacity="0.85"/><rect x="475" y="582.3" width="1" height="81.0" opacity="0.7"/><rect x="478" y="585.1" width="1" height="86.1" opacity="1"/><rect x="480" y="576.1" width="1" height="104.0" opacity="1"/><rect x="483" y="586.9" width="1" height="81.7" opacity="0.85"/><rect x="485" y="581.4" width="1" height="83.4" opacity="1"/><rect x="486" y="568.5" width="1" height="94.4" opacity="0.7"/><rect x="487" y="571.1" width="1" height="94.1" opacity="0.7"/><rect x="488" y="568.7" width="1" height="104.6" opacity="1"/><rect x="491" y="571.8" width="1" height="100.8" opacity="0.55"/><rect x="492" y="567.2" width="1" height="111.3" opacity="1"/><rect x="493" y="559.6" width="1" height="104.3" opacity="0.85"/><rect x="494" y="571.7" width="1" height="105.0" opacity="0.7"/><rect x="496" y="585.3" width="1" height="92.8" opacity="1"/><rect x="498" y="570.5" width="1" height="103.1" opacity="1"/><rect x="503" y="577.1" width="1" height="95.7" opacity="0.85"/><rect x="505" y="588.6" width="1" height="75.8" opacity="0.55"/><rect x="509" y="580.4" width="1" height="100.3" opacity="1"/><rect x="511" y="581.8" width="1" height="96.9" opacity="1"/><rect x="513" y="586.8" width="1" height="83.9" opacity="0.85"/><rect x="514" y="578.8" width="1" height="103.3" opacity="0.55"/><rect x="515" y="586.6" width="1" height="83.5" opacity="1"/><rect x="517" y="586.8" width="1" height="77.4" opacity="1"/><rect x="520" y="567.2" width="1" height="97.5" opacity="1"/><rect x="521" y="565.8" width="1" height="100.8" opacity="1"/><rect x="523" y="575.7" width="1" height="106.5" opacity="0.7"/><rect x="526" y="574.9" width="1" height="89.7" opacity="0.85"/><rect x="532" y="579.2" width="1" height="96.8" opacity="0.85"/><rect x="535" y="578.3" width="1" height="100.0" opacity="1"/><rect x="540" y="585.7" width="1" height="82.6" opacity="0.85"/><rect x="541" y="587.8" width="1" height="89.8" opacity="0.55"/><rect x="542" y="575.4" width="1" height="103.7" opacity="1"/><rect x="544" y="584.1" width="1" height="89.9" opacity="1"/><rect x="545" y="582.7" width="1" height="86.5" opacity="0.7"/><rect x="547" y="566.2" width="1" height="109.5" opacity="0.7"/><rect x="548" y="585.7" width="1" height="91.7" opacity="0.85"/><rect x="550" y="565.6" width="1" height="106.0" opacity="0.85"/><rect x="552" y="584.6" width="1" height="93.5" opacity="1"/><rect x="555" y="569.1" width="1" height="107.0" opacity="0.85"/><rect x="557" y="588.4" width="1" height="91.2" opacity="0.55"/><rect x="558" y="564.4" width="1" height="115.6" opacity="1"/><rect x="561" y="588.0" width="1" height="77.4" opacity="1"/><rect x="562" y="561.0" width="1" height="103.0" opacity="0.7"/><rect x="563" y="566.9" width="1" height="108.8" opacity="0.7"/><rect x="566" y="547.2" width="1" height="126.0" opacity="0.7"/><rect x="572" y="574.9" width="1" height="113.0" opacity="0.85"/><rect x="575" y="575.1" width="1" height="87.5" opacity="1"/><rect x="577" y="579.3" width="1" height="101.3" opacity="1"/><rect x="580" y="571.3" width="1" height="91.2" opacity="1"/><rect x="590" y="577.3" width="1" height="85.8" opacity="1"/><rect x="594" y="567.4" width="1" height="104.1" opacity="0.55"/><rect x="596" y="578.7" width="1" height="91.5" opacity="1"/><rect x="601" y="579.6" width="1" height="87.8" opacity="0.55"/><rect x="605" y="584.2" width="1" height="82.5" opacity="0.85"/><rect x="606" y="570.3" width="1" height="104.3" opacity="1"/><rect x="611" y="584.4" width="1" height="92.1" opacity="1"/><rect x="613" y="588.1" width="1" height="77.3" opacity="0.85"/><rect x="615" y="557.4" width="1" height="117.8" opacity="1"/><rect x="617" y="578.8" width="1" height="90.4" opacity="0.85"/><rect x="621" y="584.2" width="1" height="78.7" opacity="1"/><rect x="627" y="572.1" width="1" height="94.4" opacity="0.55"/><rect x="630" y="573.1" width="1" height="102.4" opacity="1"/><rect x="632" y="589.8" width="1" height="81.3" opacity="0.85"/><rect x="635" y="587.4" width="1" height="78.8" opacity="0.85"/><rect x="636" y="574.8" width="1" height="88.4" opacity="0.7"/><rect x="637" y="585.7" width="1" height="80.9" opacity="1"/><rect x="638" y="571.9" width="1" height="97.5" opacity="0.55"/><rect x="639" y="574.3" width="1" height="106.6" opacity="1"/><rect x="643" y="586.0" width="1" height="87.5" opacity="0.7"/><rect x="644" y="572.1" width="1" height="95.4" opacity="0.7"/><rect x="645" y="574.2" width="1" height="91.2" opacity="0.85"/><rect x="646" y="587.6" width="1" height="92.7" opacity="0.55"/><rect x="647" y="573.8" width="1" height="95.1" opacity="0.55"/><rect x="649" y="579.2" width="1" height="100.8" opacity="0.7"/><rect x="651" y="583.1" width="1" height="93.8" opacity="1"/><rect x="652" y="571.3" width="1" height="100.0" opacity="1"/><rect x="653" y="565.3" width="1" height="105.1" opacity="1"/><rect x="654" y="576.0" width="1" height="88.3" opacity="1"/><rect x="657" y="584.5" width="1" height="84.6" opacity="0.85"/><rect x="658" y="571.2" width="1" height="105.9" opacity="0.7"/><rect x="661" y="568.2" width="1" height="106.5" opacity="0.7"/><rect x="664" y="587.1" width="1" height="90.9" opacity="0.7"/><rect x="665" y="569.4" width="1" height="111.2" opacity="1"/><rect x="668" y="576.7" width="1" height="96.8" opacity="1"/><rect x="669" y="566.3" width="1" height="110.8" opacity="1"/><rect x="670" y="586.7" width="1" height="84.2" opacity="0.85"/><rect x="493" y="516.3" width="1" height="154.0"/><rect x="444" y="534.3" width="1" height="136.0"/><rect x="270" y="538.3" width="1" height="132.0"/><rect x="633" y="554.3" width="1" height="116.0"/></g>
<path d="M229.5 612.3L231.9 562.3L233.1 562.3L235.1 612.3L233.9 636.3L230.9 636.3z" fill="url(#gS)"/>
<path d="M376.6 612.3L379.0 580.3L380.20000000000005 580.3L382.20000000000005 612.3L381.0 636.3L378.0 636.3z" fill="url(#gS)"/>
<rect x="18.0" y="533.0" width="654.0" height="1.2" fill="#7a7a7a" opacity="0.9"/>
<rect x="18.0" y="574.8" width="654.0" height="1.2" fill="#7a7a7a" opacity="0.9"/>
<rect x="18.0" y="633.6" width="654.0" height="1.2" fill="#6c6c6c" opacity="0.9"/>
<rect x="18.0" y="663.9" width="654.0" height="1.2" fill="#7a7a7a" opacity="0.9"/>
<path d="M19.6 636.2v3.1M26.2 641.3v6.7M31.1 643.2v10.4M37.7 643.0v8.6M54.1 637.8v5.4M57.3 639.6v3.1M65.5 639.7v10.6M78.6 638.6v9.2M85.2 639.9v10.4M98.3 646.2v3.2M104.9 661.6v7.6M106.5 663.8v3.4M108.2 653.5v6.8M109.8 652.1v5.7M124.5 643.7v5.3M126.2 648.8v5.5M155.7 640.7v7.8M170.4 642.5v3.2M172.1 640.5v9.3M177.0 643.7v10.5M178.6 637.2v10.3M183.5 637.5v3.0M186.8 640.0v4.2M188.5 640.8v5.4M219.6 645.5v3.3M226.2 661.5v4.2M244.2 640.8v4.5M258.9 646.6v3.3M263.9 645.5v8.9M270.4 648.0v10.8M299.9 643.9v4.8M311.4 651.8v7.3M314.7 645.1v9.3M326.2 650.1v10.5M336.0 646.3v4.1M337.6 648.8v9.4M350.7 653.3v6.8M352.4 652.8v5.5M354.0 656.0v7.1M357.3 655.6v10.9M362.2 654.9v10.7M378.6 657.1v5.2M413.0 643.3v10.1M417.9 642.0v10.2M426.1 647.3v4.3M431.1 642.2v7.3M437.6 643.8v5.0M454.0 662.3v7.0M468.8 650.5v7.8M470.4 653.2v9.0M481.9 662.5v4.5M493.3 651.6v5.1M495.0 645.8v3.9M504.8 644.2v6.4M519.6 650.2v7.8M521.2 646.5v6.1M531.0 655.2v8.3M540.9 652.9v7.8M547.4 654.1v8.2M549.1 654.9v7.3M555.6 653.3v3.8M558.9 651.8v3.7M578.6 656.1v8.2M586.8 652.1v3.5M614.6 645.6v9.6M624.5 644.2v6.3M637.6 645.8v9.9M639.2 647.0v10.3M88.0 641.0v28.0M284.4 654.0v24.0M297.0 654.0v26.0M106.0 659.0v16.0M227.0 659.0v12.0M395.0 654.0v22.0M403.0 654.0v24.0M458.0 659.0v12.0M571.0 654.0v20.0M624.0 649.0v20.0M660.0 654.0v14.0" stroke="#a6a6a6" stroke-width="0.7" fill="none"/>
<polyline points="18.0,640.0 19.6,637.2 21.3,641.8 22.9,640.4 24.6,639.9 26.2,642.3 27.8,637.3 29.5,642.2 31.1,644.2 32.8,645.5 34.4,643.0 36.0,642.5 37.7,644.0 39.3,643.7 40.9,641.7 42.6,643.3 44.2,642.0 45.9,644.8 47.5,640.2 49.1,639.2 50.8,636.5 52.4,641.7 54.1,638.8 55.7,641.4 57.3,640.6 59.0,641.2 60.6,637.9 62.3,641.0 63.9,638.2 65.5,640.7 67.2,640.3 68.8,641.3 70.5,636.5 72.1,639.0 73.7,640.2 75.4,636.5 77.0,637.9 78.6,639.6 80.3,636.5 81.9,636.5 83.6,636.5 85.2,640.9 86.8,643.5 88.5,638.7 90.1,643.2 91.8,639.0 93.4,640.9 95.0,643.3 96.7,643.9 98.3,647.2 100.0,641.8 101.6,649.9 103.2,650.8 104.9,662.6 106.5,664.8 108.2,654.5 109.8,653.1 111.4,649.1 113.1,647.1 114.7,642.9 116.3,645.1 118.0,644.2 119.6,646.1 121.3,642.8 122.9,641.1 124.5,644.7 126.2,649.8 127.8,650.5 129.5,656.1 131.1,654.2 132.7,658.1 134.4,660.9 136.0,659.6 137.7,660.2 139.3,654.6 140.9,645.5 142.6,650.3 144.2,645.9 145.8,643.9 147.5,644.4 149.1,637.7 150.8,643.8 152.4,643.4 154.0,645.0 155.7,641.7 157.3,645.1 159.0,640.5 160.6,637.8 162.2,647.2 163.9,643.2 165.5,643.1 167.2,642.2 168.8,641.5 170.4,643.5 172.1,641.5 173.7,647.3 175.4,643.0 177.0,644.7 178.6,638.2 180.3,643.8 181.9,638.5 183.5,638.5 185.2,643.2 186.8,641.0 188.5,641.8 190.1,640.2 191.7,638.4 193.4,637.0 195.0,638.9 196.7,639.4 198.3,640.8 199.9,640.4 201.6,639.3 203.2,640.8 204.9,640.0 206.5,636.5 208.1,639.8 209.8,641.5 211.4,639.7 213.1,641.7 214.7,644.7 216.3,642.0 218.0,647.9 219.6,646.5 221.2,649.5 222.9,650.5 224.5,656.4 226.2,662.5 227.8,662.5 229.4,650.1 231.1,645.5 232.7,640.1 234.4,639.4 236.0,642.6 237.6,643.0 239.3,640.2 240.9,643.9 242.6,638.7 244.2,641.8 245.8,643.6 247.5,643.9 249.1,640.6 250.8,649.8 252.4,646.7 254.0,644.8 255.7,646.4 257.3,647.7 258.9,647.6 260.6,652.2 262.2,642.6 263.9,646.5 265.5,647.6 267.1,643.9 268.8,645.7 270.4,649.0 272.1,645.3 273.7,646.9 275.3,644.8 277.0,649.5 278.6,644.4 280.3,647.0 281.9,648.6 283.5,653.2 285.2,657.5 286.8,655.5 288.5,662.1 290.1,654.4 291.7,649.2 293.4,649.1 295.0,646.8 296.6,645.4 298.3,645.4 299.9,644.9 301.6,645.7 303.2,650.4 304.8,646.4 306.5,645.9 308.1,649.1 309.8,651.8 311.4,652.8 313.0,646.5 314.7,646.1 316.3,649.9 318.0,651.0 319.6,647.8 321.2,651.5 322.9,651.1 324.5,650.0 326.2,651.1 327.8,651.2 329.4,651.6 331.1,649.1 332.7,648.3 334.3,647.0 336.0,647.3 337.6,649.8 339.3,649.6 340.9,651.9 342.5,648.5 344.2,653.8 345.8,651.9 347.5,655.4 349.1,654.5 350.7,654.3 352.4,653.8 354.0,657.0 355.7,654.0 357.3,656.6 358.9,653.5 360.6,655.3 362.2,655.9 363.8,655.3 365.5,655.5 367.1,656.2 368.8,659.5 370.4,656.9 372.0,659.4 373.7,658.2 375.3,654.5 377.0,655.3 378.6,658.1 380.2,656.3 381.9,655.1 383.5,655.9 385.2,649.5 386.8,647.8 388.4,646.9 390.1,642.7 391.7,642.8 393.4,647.7 395.0,650.2 396.6,651.9 398.3,660.3 399.9,651.2 401.5,656.4 403.2,653.5 404.8,646.9 406.5,646.1 408.1,640.4 409.7,644.2 411.4,638.0 413.0,644.3 414.7,641.4 416.3,647.0 417.9,643.0 419.6,646.3 421.2,652.4 422.9,651.1 424.5,642.1 426.1,648.3 427.8,648.2 429.4,648.8 431.1,643.2 432.7,651.9 434.3,646.5 436.0,647.3 437.6,644.8 439.2,650.0 440.9,647.5 442.5,653.5 444.2,650.9 445.8,658.8 447.4,654.1 449.1,657.8 450.7,654.1 452.4,662.3 454.0,663.3 455.6,662.0 457.3,659.6 458.9,666.6 460.6,663.2 462.2,660.8 463.8,661.7 465.5,654.7 467.1,662.2 468.8,651.5 470.4,654.2 472.0,656.1 473.7,655.5 475.3,653.6 476.9,657.5 478.6,652.3 480.2,657.2 481.9,663.5 483.5,664.2 485.1,660.9 486.8,664.5 488.4,656.0 490.1,657.2 491.7,658.7 493.3,652.6 495.0,646.8 496.6,652.5 498.3,645.3 499.9,646.0 501.5,641.7 503.2,644.3 504.8,645.2 506.5,651.8 508.1,649.3 509.7,656.4 511.4,649.2 513.0,650.6 514.6,647.5 516.3,650.2 517.9,649.8 519.6,651.2 521.2,647.5 522.8,653.3 524.5,651.9 526.1,657.9 527.8,655.6 529.4,656.5 531.0,656.2 532.7,656.0 534.3,655.1 536.0,649.0 537.6,653.1 539.2,655.8 540.9,653.9 542.5,653.3 544.2,653.3 545.8,651.1 547.4,655.1 549.1,655.9 550.7,653.1 552.3,652.8 554.0,649.6 555.6,654.3 557.3,652.8 558.9,652.8 560.5,652.7 562.2,653.8 563.8,654.4 565.5,654.8 567.1,652.7 568.7,658.9 570.4,663.5 572.0,653.0 573.7,662.3 575.3,658.7 576.9,659.0 578.6,657.1 580.2,659.3 581.8,653.4 583.5,654.6 585.1,655.8 586.8,653.1 588.4,649.4 590.0,648.5 591.7,646.6 593.3,646.1 595.0,644.8 596.6,652.2 598.2,647.8 599.9,653.1 601.5,650.3 603.2,649.1 604.8,647.0 606.4,650.0 608.1,647.6 609.7,648.0 611.4,649.4 613.0,645.8 614.6,646.6 616.3,649.9 617.9,644.3 619.5,642.5 621.2,647.4 622.8,645.5 624.5,645.2 626.1,644.7 627.7,643.9 629.4,644.2 631.0,644.2 632.7,644.2 634.3,646.0 635.9,646.0 637.6,646.8 639.2,648.0 640.9,651.5 642.5,645.8 644.1,649.6 645.8,649.6 647.4,644.7 649.1,642.3 650.7,648.4 652.3,644.7 654.0,647.6 655.6,648.7 657.2,653.6 658.9,658.5 660.5,655.3 662.2,661.3 663.8,657.7 665.4,652.9 667.1,651.9 668.7,648.0 670.4,643.7 672.0,647.9" fill="none" stroke="#9e9e9e" stroke-width="1.3" stroke-linejoin="round"/>
<polyline points="18.0,564.7 19.3,565.1 20.5,564.7 21.8,564.5 23.0,564.0 24.3,563.1 25.6,564.0 26.8,564.4 28.1,564.6 29.3,564.7 30.6,564.0 31.9,564.1 33.1,563.9 34.4,564.0 35.6,564.1 36.9,563.9 38.2,563.9 39.4,564.1 40.7,564.0 41.9,563.4 43.2,563.6 44.5,563.3 45.7,563.6 47.0,563.8 48.2,563.6 49.5,564.0 50.8,564.2 52.0,564.1 53.3,563.5 54.5,563.7 55.8,564.5 57.1,563.8 58.3,563.3 59.6,563.2 60.8,563.7 62.1,563.6 63.4,564.3 64.6,564.4 65.9,564.5 67.1,564.4 68.4,563.2 69.7,563.4 70.9,563.9 72.2,563.2 73.4,563.2 74.7,562.3 76.0,562.9 77.2,563.4 78.5,562.5 79.7,562.8 81.0,562.9 82.3,562.9 83.5,562.5 84.8,563.5 86.0,563.8 87.3,563.8 88.6,563.1 89.8,563.2 91.1,563.4 92.3,563.1 93.6,563.3 94.9,563.1 96.1,562.9 97.4,563.0 98.6,563.5 99.9,562.7 101.2,563.0 102.4,562.3 103.7,561.7 104.9,562.3 106.2,562.2 107.5,561.8 108.7,562.3 110.0,561.5 111.2,561.4 112.5,561.7 113.8,561.5 115.0,561.3 116.3,560.7 117.5,562.0 118.8,561.7 120.1,561.9 121.3,561.6 122.6,560.8 123.8,561.7 125.1,566.0 126.4,571.8 127.6,564.9 128.9,562.0 130.2,561.6 131.4,561.9 132.7,566.8 133.9,577.2 135.2,573.9 136.5,564.4 137.7,562.5 139.0,562.5 140.2,561.7 141.5,561.5 142.8,561.2 144.0,561.3 145.3,562.0 146.5,561.8 147.8,561.1 149.1,560.1 150.3,560.6 151.6,560.3 152.8,561.7 154.1,561.7 155.4,561.6 156.6,560.8 157.9,561.4 159.1,562.0 160.4,562.2 161.7,561.9 162.9,562.1 164.2,562.1 165.4,561.5 166.7,561.9 168.0,561.5 169.2,560.9 170.5,560.7 171.7,560.6 173.0,560.9 174.3,561.3 175.5,560.5 176.8,560.8 178.0,561.0 179.3,562.0 180.6,561.8 181.8,561.9 183.1,561.7 184.3,561.1 185.6,560.6 186.9,560.2 188.1,560.5 189.4,560.4 190.6,560.6 191.9,560.8 193.2,561.1 194.4,561.7 195.7,562.4 196.9,562.2 198.2,562.7 199.5,562.4 200.7,561.7 202.0,561.0 203.2,560.9 204.5,560.7 205.8,560.2 207.0,560.1 208.3,561.4 209.5,561.4 210.8,561.5 212.1,561.7 213.3,561.2 214.6,560.7 215.8,561.7 217.1,561.1 218.4,561.7 219.6,561.3 220.9,561.2 222.1,561.6 223.4,561.6 224.7,562.0 225.9,561.1 227.2,560.5 228.4,560.7 229.7,560.2 231.0,561.0 232.2,561.5 233.5,562.3 234.7,562.1 236.0,561.9 237.3,561.7 238.5,562.1 239.8,561.9 241.0,561.5 242.3,561.0 243.6,561.0 244.8,561.3 246.1,562.3 247.3,562.0 248.6,562.3 249.9,563.1 251.1,562.7 252.4,562.3 253.6,562.5 254.9,562.4 256.2,562.0 257.4,562.4 258.7,562.1 259.9,561.3 261.2,561.5 262.5,561.8 263.7,562.3 265.0,563.4 266.2,562.9 267.5,563.1 268.8,563.1 270.0,563.4 271.3,563.3 272.5,563.6 273.8,563.4 275.1,563.7 276.3,563.4 277.6,563.8 278.8,562.9 280.1,562.8 281.4,563.2 282.6,562.6 283.9,562.1 285.1,562.2 286.4,562.2 287.7,563.4 288.9,563.0 290.2,563.6 291.4,563.4 292.7,563.6 294.0,563.5 295.2,563.4 296.5,563.2 297.7,562.4 299.0,562.6 300.3,563.3 301.5,563.1 302.8,563.3 304.0,563.6 305.3,563.5 306.6,563.0 307.8,562.8 309.1,563.0 310.3,563.0 311.6,563.3 312.9,564.1 314.1,564.2 315.4,563.7 316.6,563.2 317.9,563.8 319.2,563.6 320.4,563.7 321.7,563.9 322.9,563.5 324.2,563.4 325.5,563.1 326.7,563.4 328.0,563.3 329.2,562.9 330.5,562.4 331.8,562.8 333.0,563.6 334.3,562.2 335.5,563.3 336.8,562.9 338.1,562.9 339.3,563.3 340.6,563.1 341.8,562.5 343.1,561.9 344.4,562.6 345.6,563.0 346.9,563.6 348.2,562.9 349.4,563.0 350.7,563.1 351.9,563.9 353.2,564.0 354.5,563.6 355.7,563.6 357.0,563.1 358.2,563.7 359.5,563.6 360.8,563.8 362.0,563.6 363.3,563.5 364.5,563.2 365.8,562.9 367.1,562.9 368.3,562.7 369.6,563.6 370.8,563.7 372.1,563.9 373.4,563.7 374.6,563.7 375.9,563.3 377.1,562.9 378.4,562.3 379.7,561.1 380.9,560.2 382.2,560.2 383.4,561.4 384.7,561.5 386.0,562.2 387.2,563.1 388.5,562.6 389.7,562.9 391.0,563.9 392.3,563.7 393.5,563.7 394.8,563.2 396.0,562.5 397.3,563.0 398.6,562.6 399.8,562.5 401.1,563.0 402.3,563.2 403.6,563.3 404.9,563.4 406.1,563.6 407.4,563.5 408.6,564.5 409.9,564.0 411.2,564.5 412.4,564.9 413.7,564.3 414.9,564.4 416.2,563.8 417.5,563.3 418.7,563.6 420.0,563.5 421.2,563.9 422.5,563.1 423.8,563.6 425.0,562.9 426.3,563.5 427.5,563.9 428.8,564.5 430.1,564.7 431.3,564.3 432.6,564.5 433.8,563.8 435.1,563.8 436.4,563.3 437.6,562.9 438.9,562.8 440.1,562.9 441.4,563.0 442.7,562.8 443.9,562.8 445.2,562.3 446.4,562.8 447.7,563.2 449.0,563.0 450.2,562.9 451.5,563.2 452.7,563.3 454.0,563.1 455.3,562.9 456.5,563.5 457.8,562.8 459.0,562.4 460.3,563.3 461.6,563.4 462.8,563.5 464.1,563.4 465.3,563.4 466.6,562.7 467.9,564.1 469.1,563.5 470.4,563.4 471.6,564.5 472.9,564.8 474.2,564.9 475.4,565.3 476.7,564.8 477.9,563.7 479.2,563.4 480.5,563.5 481.7,563.0 483.0,563.9 484.2,564.9 485.5,564.8 486.8,563.4 488.0,563.0 489.3,562.9 490.5,563.1 491.8,563.7 493.1,563.4 494.3,563.4 495.6,563.2 496.8,562.7 498.1,562.8 499.4,563.5 500.6,562.6 501.9,562.2 503.1,562.4 504.4,562.7 505.7,562.5 506.9,562.9 508.2,563.2 509.4,564.0 510.7,563.9 512.0,564.6 513.2,564.5 514.5,564.8 515.7,564.0 517.0,564.2 518.3,564.1 519.5,563.2 520.8,563.3 522.0,562.9 523.3,562.4 524.6,562.5 525.8,562.9 527.1,563.3 528.3,564.0 529.6,563.7 530.9,563.4 532.1,563.8 533.4,563.5 534.6,563.2 535.9,563.3 537.2,563.2 538.4,563.2 539.7,563.1 540.9,563.0 542.2,562.9 543.5,563.2 544.7,562.8 546.0,562.7 547.2,563.0 548.5,563.1 549.8,562.7 551.0,563.0 552.3,562.4 553.5,562.5 554.8,562.1 556.1,562.3 557.3,562.7 558.6,563.2 559.8,563.5 561.1,563.9 562.4,563.4 563.6,563.6 564.9,563.7 566.2,563.0 567.4,562.9 568.7,562.8 569.9,563.2 571.2,563.7 572.5,563.9 573.7,563.9 575.0,564.2 576.2,563.9 577.5,564.3 578.8,564.1 580.0,563.0 581.3,563.1 582.5,562.7 583.8,562.7 585.1,563.1 586.3,562.3 587.6,562.0 588.8,563.4 590.1,563.2 591.4,563.7 592.6,563.8 593.9,562.8 595.1,562.4 596.4,563.6 597.7,562.8 598.9,562.8 600.2,562.5 601.4,562.8 602.7,562.5 604.0,562.6 605.2,562.6 606.5,562.4 607.7,562.4 609.0,563.0 610.3,563.1 611.5,563.6 612.8,563.2 614.0,563.9 615.3,563.1 616.6,563.5 617.8,563.7 619.1,564.1 620.3,564.2 621.6,564.7 622.9,564.5 624.1,564.0 625.4,563.6 626.6,563.2 627.9,562.1 629.2,561.4 630.4,560.5 631.7,561.0 632.9,561.6 634.2,562.1 635.5,562.4 636.7,562.1 638.0,562.4 639.2,563.1 640.5,562.9 641.8,563.0 643.0,563.4 644.3,563.4 645.5,563.8 646.8,564.1 648.1,563.5 649.3,564.3 650.6,564.6 651.8,565.0 653.1,564.2 654.4,564.6 655.6,565.7 656.9,568.4 658.1,570.5 659.4,569.8 660.7,566.6 661.9,564.3 663.2,563.9 664.4,563.7 665.7,563.6 667.0,562.6 668.2,561.8 669.5,561.8 670.7,562.4 672.0,562.9" fill="none" stroke="#a040f0" stroke-width="1.1" stroke-linejoin="round"/>
<rect x="18.0" y="692.5" width="654.0" height="2.6" fill="#22c000"/>
<rect x="18.0" y="692.0" width="654.0" height="0.6" fill="#b8c8ff" opacity="0.8"/>
<path d="M21.0 706.2v6.6M33.2 705.8v8.2M37.8 706.3v6.9M80.5 700.1v8.6M88.1 701.5v6.9M94.2 699.3v7.6M103.4 707.1v3.4M111.0 701.2v3.1M123.2 702.9v6.0M152.2 708.2v5.6M172.0 700.1v6.3M187.2 700.7v6.5M200.9 702.7v8.0M204.0 704.9v4.3M222.3 702.2v7.1M231.4 702.8v8.2M239.0 691.2v6.5M242.1 692.8v3.2M268.0 700.2v6.2M271.1 696.9v9.7M272.6 699.7v3.6M274.1 694.8v9.7M281.7 700.2v7.8M290.9 703.4v6.9M300.0 698.3v7.0M303.1 698.9v8.3M315.3 702.4v8.9M318.3 703.9v7.2M322.9 698.5v6.7M329.0 698.7v3.3M338.1 708.1v5.2M356.4 700.2v6.8M370.2 700.4v4.8M399.1 702.9v6.0M402.2 703.5v6.1M406.7 707.3v4.5M415.9 700.2v6.6M447.9 702.5v4.5M455.5 704.3v9.7M458.6 705.8v8.8M466.2 702.8v7.5M479.9 700.7v8.1M492.1 703.1v4.5M504.3 697.5v3.8M516.5 696.0v7.9M533.3 703.1v8.9M559.2 710.9v5.0M563.8 705.9v7.9M566.8 701.3v8.3M572.9 703.1v3.4M585.1 699.3v8.7M589.7 697.6v4.4M617.1 697.7v8.4M626.3 701.2v5.5M641.5 697.7v3.3M644.6 697.9v6.4M664.4 705.0v7.8M40.5 699.0v14.0M47.0 697.0v20.0M64.0 694.0v20.0M23.0 701.0v11.0M68.0 689.0v20.0M607.0 707.0v17.0M655.0 705.0v16.0M661.0 705.0v16.0M386.0 699.0v16.0M530.0 703.0v14.0M558.0 707.0v14.0M598.0 703.0v20.0" stroke="#b8b8b8" stroke-width="0.8" fill="none"/>
<polyline points="18.0,710.1 19.5,708.9 21.0,708.5 22.6,713.7 24.1,717.5 25.6,709.2 27.1,711.9 28.7,718.2 30.2,706.1 31.7,705.8 33.2,708.7 34.8,708.0 36.3,706.9 37.8,708.7 39.3,709.9 40.9,710.2 42.4,708.7 43.9,707.2 45.4,710.3 47.0,710.2 48.5,707.9 50.0,709.0 51.5,709.9 53.1,709.6 54.6,707.7 56.1,706.1 57.6,707.9 59.2,709.5 60.7,708.6 62.2,706.4 63.7,706.6 65.3,707.9 66.8,703.5 68.3,698.1 69.8,706.7 71.4,711.8 72.9,702.0 74.4,696.9 75.9,701.6 77.5,701.5 79.0,699.9 80.5,703.1 82.0,706.9 83.6,706.6 85.1,706.7 86.6,705.9 88.1,703.9 89.7,706.1 91.2,700.0 92.7,702.2 94.2,701.9 95.7,701.4 97.3,712.9 98.8,705.0 100.3,707.1 101.8,707.9 103.4,708.2 104.9,707.2 106.4,708.0 107.9,705.3 109.5,702.7 111.0,702.2 112.5,708.5 114.0,703.1 115.6,699.9 117.1,705.2 118.6,701.1 120.1,703.3 121.7,704.2 123.2,705.0 124.7,705.3 126.2,706.9 127.8,705.7 129.3,707.8 130.8,704.3 132.3,703.8 133.9,703.0 135.4,705.3 136.9,704.6 138.4,701.9 140.0,704.1 141.5,702.3 143.0,702.8 144.5,706.0 146.1,707.9 147.6,704.7 149.1,708.0 150.6,708.6 152.2,710.1 153.7,706.7 155.2,703.7 156.7,702.4 158.3,704.1 159.8,701.7 161.3,701.9 162.8,708.1 164.3,700.7 165.9,701.5 167.4,701.6 168.9,702.1 170.4,699.6 172.0,702.3 173.5,699.1 175.0,699.2 176.5,701.6 178.1,700.0 179.6,699.7 181.1,700.7 182.6,703.0 184.2,699.2 185.7,702.8 187.2,703.0 188.7,701.9 190.3,703.1 191.8,703.1 193.3,703.5 194.8,703.1 196.4,704.9 197.9,700.7 199.4,702.5 200.9,705.5 202.5,712.6 204.0,706.4 205.5,705.8 207.0,708.5 208.6,709.0 210.1,707.4 211.6,704.0 213.1,704.5 214.7,703.1 216.2,703.2 217.7,703.2 219.2,703.6 220.8,705.6 222.3,704.7 223.8,706.0 225.3,707.9 226.9,709.6 228.4,707.7 229.9,706.0 231.4,705.6 233.0,705.5 234.5,700.2 236.0,698.2 237.5,696.0 239.0,693.5 240.6,693.7 242.1,693.9 243.6,695.2 245.1,697.7 246.7,699.5 248.2,701.5 249.7,698.8 251.2,696.3 252.8,701.7 254.3,706.5 255.8,701.9 257.3,704.2 258.9,705.4 260.4,705.8 261.9,702.2 263.4,700.5 265.0,702.5 266.5,699.8 268.0,702.4 269.5,699.7 271.1,700.3 272.6,701.0 274.1,698.1 275.6,701.5 277.2,702.8 278.7,702.1 280.2,701.3 281.7,702.9 283.3,702.6 284.8,704.0 286.3,701.3 287.8,705.2 289.4,705.2 290.9,705.8 292.4,703.2 293.9,702.9 295.5,703.8 297.0,701.2 298.5,700.1 300.0,700.8 301.6,699.2 303.1,701.8 304.6,700.0 306.1,699.1 307.7,696.8 309.2,696.2 310.7,696.0 312.2,697.3 313.7,703.2 315.3,705.5 316.8,703.5 318.3,706.4 319.8,705.0 321.4,707.6 322.9,700.9 324.4,701.3 325.9,699.7 327.5,698.8 329.0,699.9 330.5,700.4 332.0,700.3 333.6,702.6 335.1,705.5 336.6,705.8 338.1,710.0 339.7,709.5 341.2,704.7 342.7,704.2 344.2,701.8 345.8,701.7 347.3,699.3 348.8,702.5 350.3,701.4 351.9,702.2 353.4,698.7 354.9,700.7 356.4,702.6 358.0,702.6 359.5,706.3 361.0,702.8 362.5,706.6 364.1,708.5 365.6,706.2 367.1,705.5 368.6,700.2 370.2,702.1 371.7,700.0 373.2,702.2 374.7,702.9 376.3,705.4 377.8,706.8 379.3,705.9 380.8,709.1 382.3,705.6 383.9,702.3 385.4,699.6 386.9,706.0 388.4,697.4 390.0,699.9 391.5,701.1 393.0,699.5 394.5,699.1 396.1,700.7 397.6,701.8 399.1,705.0 400.6,706.9 402.2,705.7 403.7,703.1 405.2,703.3 406.7,708.9 408.3,699.5 409.8,699.0 411.3,699.9 412.8,702.1 414.4,702.0 415.9,702.5 417.4,701.0 418.9,702.3 420.5,706.0 422.0,708.8 423.5,708.4 425.0,710.7 426.6,709.6 428.1,709.5 429.6,710.1 431.1,706.7 432.7,708.2 434.2,708.1 435.7,703.6 437.2,702.2 438.8,705.2 440.3,705.2 441.8,706.8 443.3,706.5 444.9,706.1 446.4,704.3 447.9,704.1 449.4,706.8 451.0,703.0 452.5,709.0 454.0,704.2 455.5,707.7 457.0,704.2 458.6,708.9 460.1,707.1 461.6,705.7 463.1,704.9 464.7,701.9 466.2,705.5 467.7,702.8 469.2,707.8 470.8,702.6 472.3,703.4 473.8,703.5 475.3,711.9 476.9,701.4 478.4,702.6 479.9,703.5 481.4,704.8 483.0,704.2 484.5,705.5 486.0,713.5 487.5,704.9 489.1,705.1 490.6,707.0 492.1,704.6 493.6,709.7 495.2,703.7 496.7,702.1 498.2,698.5 499.7,697.3 501.3,695.5 502.8,695.2 504.3,698.9 505.8,694.0 507.4,700.2 508.9,698.2 510.4,700.5 511.9,701.2 513.5,697.9 515.0,696.5 516.5,698.7 518.0,699.9 519.6,703.7 521.1,698.8 522.6,701.2 524.1,704.1 525.7,702.6 527.2,703.0 528.7,704.2 530.2,705.8 531.7,707.2 533.3,706.2 534.8,703.8 536.3,710.2 537.8,703.0 539.4,705.3 540.9,701.8 542.4,702.5 543.9,701.3 545.5,702.4 547.0,705.8 548.5,707.5 550.0,710.8 551.6,703.7 553.1,706.2 554.6,706.9 556.1,709.9 557.7,708.3 559.2,712.7 560.7,708.6 562.2,706.7 563.8,708.7 565.3,713.4 566.8,704.2 568.3,706.1 569.9,705.7 571.4,707.8 572.9,704.3 574.4,705.7 576.0,706.4 577.5,704.9 579.0,705.6 580.5,703.8 582.1,703.6 583.6,703.6 585.1,702.4 586.6,702.1 588.2,702.4 589.7,699.2 591.2,697.7 592.7,699.1 594.3,701.9 595.8,702.9 597.3,704.0 598.8,702.4 600.3,705.4 601.9,706.4 603.4,709.7 604.9,710.9 606.4,706.8 608.0,705.7 609.5,701.2 611.0,700.6 612.5,702.2 614.1,699.8 615.6,698.9 617.1,700.6 618.6,703.5 620.2,702.5 621.7,700.5 623.2,700.7 624.7,704.1 626.3,703.2 627.8,712.7 629.3,706.9 630.8,704.9 632.4,703.0 633.9,699.2 635.4,698.3 636.9,701.5 638.5,700.1 640.0,697.0 641.5,698.9 643.0,700.1 644.6,700.1 646.1,701.8 647.6,701.1 649.1,702.4 650.7,706.7 652.2,702.6 653.7,701.4 655.2,701.5 656.8,699.6 658.3,701.4 659.8,703.9 661.3,703.1 662.9,704.7 664.4,707.7 665.9,711.9 667.4,710.7 669.0,701.5 670.5,700.0 672.0,698.8" fill="none" stroke="#484848" stroke-width="0.9" stroke-linejoin="round"/>
<text x="9.8" y="524.0999999999999" font-size="5.6" fill="#666" font-style="italic">µV</text>
<text x="16" y="534.9865422409229" font-size="6" fill="#444" text-anchor="end">500</text>
<text x="16" y="552.9730844818457" font-size="6" fill="#999" text-anchor="end">250</text>
<text x="16" y="576.75" font-size="6" fill="#444" text-anchor="end">100</text>
<text x="16" y="594.7365422409229" font-size="6" fill="#999" text-anchor="end">50</text>
<text x="16" y="612.7230844818457" font-size="6" fill="#999" text-anchor="end">25</text>
<text x="16" y="636.5" font-size="6" fill="#333" text-anchor="end">10</text>
<text x="16" y="642.44" font-size="6" fill="#aaa" text-anchor="end">9</text>
<text x="16" y="648.38" font-size="6" fill="#aaa" text-anchor="end">8</text>
<text x="16" y="654.32" font-size="6" fill="#aaa" text-anchor="end">7</text>
<text x="16" y="660.26" font-size="6" fill="#aaa" text-anchor="end">6</text>
<text x="16" y="666.2" font-size="6" fill="#333" text-anchor="end">5</text>
<text x="16" y="672.14" font-size="6" fill="#aaa" text-anchor="end">4</text>
<text x="16" y="678.08" font-size="6" fill="#aaa" text-anchor="end">3</text>
<text x="16" y="684.02" font-size="6" fill="#aaa" text-anchor="end">2</text>
<text x="16" y="689.96" font-size="6" fill="#aaa" text-anchor="end">1</text>
<text x="16" y="695.9" font-size="6" fill="#555" text-anchor="end">0</text>
<text x="675.5" y="624.9" font-size="5.8" fill="#555">%O₂</text>
<text x="675" y="636.9999999999999" font-size="5.8" fill="#333">100</text>
<text x="675" y="642.9549999999999" font-size="5.8" fill="#aaa">98</text>
<text x="675" y="648.9099999999999" font-size="5.8" fill="#aaa">96</text>
<text x="675" y="654.8649999999999" font-size="5.8" fill="#aaa">94</text>
<text x="675" y="660.8199999999999" font-size="5.8" fill="#aaa">92</text>
<text x="675" y="666.7749999999999" font-size="5.8" fill="#333">90</text>
<text x="675" y="672.7299999999999" font-size="5.8" fill="#aaa">88</text>
<text x="675" y="678.685" font-size="5.8" fill="#aaa">86</text>
<text x="675" y="684.6399999999999" font-size="5.8" fill="#aaa">84</text>
<text x="675" y="690.5949999999999" font-size="5.8" fill="#aaa">82</text>
<text x="675" y="696.5499999999998" font-size="5.8" fill="#555">80</text>
<text x="675" y="702.5049999999999" font-size="5.8" fill="#aaa">78</text>
<text x="675" y="708.4599999999999" font-size="5.8" fill="#aaa">76</text>
<text x="675" y="714.4149999999998" font-size="5.8" fill="#aaa">74</text>
<text x="675" y="720.3699999999999" font-size="5.8" fill="#aaa">72</text>
<text x="675" y="726.3249999999999" font-size="5.8" fill="#aaa">70</text>
<text x="18" y="701.9" font-size="6" fill="#2b8cf0" font-weight="bold">RH</text>
<text x="80.0" y="700.9999999999999" font-size="5.6" fill="#5a5a5a" text-anchor="middle">4ʰ</text>
<text x="158.4" y="700.9999999999999" font-size="5.6" fill="#5a5a5a" text-anchor="middle">4ʰ 30′</text>
<text x="315.2" y="700.9999999999999" font-size="5.6" fill="#5a5a5a" text-anchor="middle">5ʰ 30′</text>
<text x="393.6" y="700.9999999999999" font-size="5.6" fill="#5a5a5a" text-anchor="middle">6ʰ</text>
<text x="472.0" y="700.9999999999999" font-size="5.6" fill="#5a5a5a" text-anchor="middle">6ʰ 30′</text>
<text x="550.4" y="700.9999999999999" font-size="5.6" fill="#5a5a5a" text-anchor="middle">7ʰ</text>
<text x="628.8000000000001" y="700.9999999999999" font-size="5.6" fill="#5a5a5a" text-anchor="middle">7ʰ 30′</text>
</g>
<path d="M123.3 232V728" stroke="#606060" stroke-width="0.75" stroke-dasharray="2 2.2" fill="none"/>
<path d="M123.3 332.3H154M120.8 332.3V344.6H186M120.8 332.3H123.3M123.3 336.4H154" fill="none" stroke="#666" stroke-width="0.7"/>
<path d="M123.3 408.6H217M120.8 408.6V435M123.3 435H131M123.3 473.7H217M123.3 485.4H185.5" fill="none" stroke="#666" stroke-width="0.7"/>
<rect x="154.3" y="331.2" width="28.19999999999999" height="9.0" fill="#3fc81e" stroke="#2a7a10" stroke-width="0.7"/>
<text x="168.4" y="338.0" font-size="6.4" fill="#111" text-anchor="middle" textLength="24.2" lengthAdjust="spacingAndGlyphs">145.8µV</text>
<rect x="217" y="328.2" width="27.30000000000001" height="9.0" fill="#bf7af0" stroke="#8a55b5" stroke-width="0.7"/>
<text x="230.65" y="335.0" font-size="6.4" fill="#111" text-anchor="middle" textLength="23.3" lengthAdjust="spacingAndGlyphs">167bpm</text>
<rect x="186" y="340.2" width="26.80000000000001" height="8.800000000000011" fill="#bf7af0" stroke="#8a55b5" stroke-width="0.7"/>
<text x="199.4" y="346.90000000000003" font-size="6.4" fill="#111" text-anchor="middle" textLength="22.8" lengthAdjust="spacingAndGlyphs">105bpm</text>
<rect x="217" y="404.3" width="17" height="8.699999999999989" fill="#c4c4c4" stroke="#666" stroke-width="0.7"/>
<text x="225.5" y="410.95" font-size="6.4" fill="#111" text-anchor="middle" textLength="13" lengthAdjust="spacingAndGlyphs">99%</text>
<rect x="185.2" y="430.2" width="17.5" height="9.300000000000011" fill="#c4c4c4" stroke="#666" stroke-width="0.7"/>
<text x="193.95" y="437.15000000000003" font-size="6.4" fill="#111" text-anchor="middle" textLength="13.5" lengthAdjust="spacingAndGlyphs">90%</text>
<rect x="130.7" y="434.7" width="21.30000000000001" height="9.800000000000011" fill="#3fc81e" stroke="#2a7a10" stroke-width="0.7"/>
<text x="141.35" y="441.90000000000003" font-size="6.4" fill="#111" text-anchor="middle" textLength="17.3" lengthAdjust="spacingAndGlyphs">4.2µV</text>
<rect x="217" y="468.5" width="17" height="9.699999999999989" fill="#8c8c8c" stroke="#6a6a6a" stroke-width="0.7"/>
<text x="225.5" y="475.65000000000003" font-size="6.4" fill="#eee" text-anchor="middle" textLength="13" lengthAdjust="spacingAndGlyphs">77%</text>
<rect x="185.5" y="480.5" width="17.5" height="9.699999999999989" fill="#8c8c8c" stroke="#6a6a6a" stroke-width="0.7"/>
<text x="194.25" y="487.65000000000003" font-size="6.4" fill="#eee" text-anchor="middle" textLength="13.5" lengthAdjust="spacingAndGlyphs">73%</text>
<circle cx="123.3" cy="479" r="6.4" fill="#f2dc1e" stroke="#222" stroke-width="1"/>
<ellipse cx="122.3" cy="477.4" rx="3.2" ry="3.6" fill="#fff7a0" opacity="0.7"/>
<path d="M123.3 473V485" stroke="#555" stroke-width="0.8" stroke-dasharray="2 2"/>
<text x="132" y="481.4" font-size="6.4" fill="#2b8cf0" textLength="17" lengthAdjust="spacingAndGlyphs">29 kΩ</text>
<path d="M123.3 561.3H154M120.8 561.3V573.6H186M120.8 561.3H123.3M123.3 565.4H154" fill="none" stroke="#666" stroke-width="0.7"/>
<path d="M123.3 637.6H217M120.8 637.6V664M123.3 664H131M123.3 702.7H217M123.3 714.4H185.5" fill="none" stroke="#666" stroke-width="0.7"/>
<rect x="154.3" y="560.2" width="28.19999999999999" height="9.0" fill="#3fc81e" stroke="#2a7a10" stroke-width="0.7"/>
<text x="168.4" y="567.0" font-size="6.4" fill="#111" text-anchor="middle" textLength="24.2" lengthAdjust="spacingAndGlyphs">128.1µV</text>
<rect x="217" y="557.2" width="27.30000000000001" height="9.0" fill="#bf7af0" stroke="#8a55b5" stroke-width="0.7"/>
<text x="230.65" y="564.0" font-size="6.4" fill="#111" text-anchor="middle" textLength="23.3" lengthAdjust="spacingAndGlyphs">167bpm</text>
<rect x="186" y="569.2" width="26.80000000000001" height="8.799999999999955" fill="#bf7af0" stroke="#8a55b5" stroke-width="0.7"/>
<text x="199.4" y="575.9" font-size="6.4" fill="#111" text-anchor="middle" textLength="22.8" lengthAdjust="spacingAndGlyphs">105bpm</text>
<rect x="217" y="633.3" width="17" height="8.700000000000045" fill="#c4c4c4" stroke="#666" stroke-width="0.7"/>
<text x="225.5" y="639.9499999999999" font-size="6.4" fill="#111" text-anchor="middle" textLength="13" lengthAdjust="spacingAndGlyphs">99%</text>
<rect x="185.2" y="659.2" width="17.5" height="9.299999999999955" fill="#c4c4c4" stroke="#666" stroke-width="0.7"/>
<text x="193.95" y="666.15" font-size="6.4" fill="#111" text-anchor="middle" textLength="13.5" lengthAdjust="spacingAndGlyphs">90%</text>
<rect x="130.7" y="663.7" width="21.30000000000001" height="9.799999999999955" fill="#3fc81e" stroke="#2a7a10" stroke-width="0.7"/>
<text x="141.35" y="670.9" font-size="6.4" fill="#111" text-anchor="middle" textLength="17.3" lengthAdjust="spacingAndGlyphs">4.4µV</text>
<rect x="217" y="697.5" width="17" height="9.700000000000045" fill="#8c8c8c" stroke="#6a6a6a" stroke-width="0.7"/>
<text x="225.5" y="704.65" font-size="6.4" fill="#eee" text-anchor="middle" textLength="13" lengthAdjust="spacingAndGlyphs">77%</text>
<rect x="185.5" y="709.5" width="17.5" height="9.700000000000045" fill="#8c8c8c" stroke="#6a6a6a" stroke-width="0.7"/>
<text x="194.25" y="716.65" font-size="6.4" fill="#eee" text-anchor="middle" textLength="13.5" lengthAdjust="spacingAndGlyphs">73%</text>
<circle cx="123.3" cy="708" r="6.4" fill="#3ed21e" stroke="#222" stroke-width="1"/>
<ellipse cx="122.3" cy="706.4" rx="3.2" ry="3.6" fill="#b8ff9c" opacity="0.7"/>
<path d="M123.3 702V714" stroke="#555" stroke-width="0.8" stroke-dasharray="2 2"/>
<text x="132" y="710.4" font-size="6.4" fill="#2b8cf0" textLength="17" lengthAdjust="spacingAndGlyphs">14 kΩ</text>
<text x="93" y="724.6" font-size="6.4" fill="#2b8cf0" textLength="28" lengthAdjust="spacingAndGlyphs">4ʰ 16′±1′</text>
<defs>
<radialGradient id="kH"><stop offset="0" stop-color="#fff" stop-opacity="1"/><stop offset="0.34" stop-color="#fff" stop-opacity="1"/><stop offset="0.42" stop-color="#fff" stop-opacity="0.86"/><stop offset="0.66" stop-color="#fff" stop-opacity="0.3"/><stop offset="0.82" stop-color="#fff" stop-opacity="0.12"/><stop offset="1" stop-color="#fff" stop-opacity="0"/></radialGradient>
<radialGradient id="kR"><stop offset="0" stop-color="#fff" stop-opacity="0.86"/><stop offset="0.18" stop-color="#fff" stop-opacity="0.8"/><stop offset="0.62" stop-color="#fff" stop-opacity="0.3"/><stop offset="0.82" stop-color="#fff" stop-opacity="0.12"/><stop offset="1" stop-color="#fff" stop-opacity="0"/></radialGradient>
<radialGradient id="kG"><stop offset="0" stop-color="#fff" stop-opacity="0.64"/><stop offset="0.28" stop-color="#fff" stop-opacity="0.54"/><stop offset="0.6" stop-color="#fff" stop-opacity="0.28"/><stop offset="0.8" stop-color="#fff" stop-opacity="0.1"/><stop offset="1" stop-color="#fff" stop-opacity="0"/></radialGradient>
<radialGradient id="kC"><stop offset="0" stop-color="#fff" stop-opacity="0.44"/><stop offset="0.35" stop-color="#fff" stop-opacity="0.35"/><stop offset="0.65" stop-color="#fff" stop-opacity="0.17"/><stop offset="1" stop-color="#fff" stop-opacity="0"/></radialGradient>
<radialGradient id="kB"><stop offset="0" stop-color="#fff" stop-opacity="0.27"/><stop offset="0.5" stop-color="#fff" stop-opacity="0.16"/><stop offset="1" stop-color="#fff" stop-opacity="0"/></radialGradient>
<radialGradient id="kS"><stop offset="0" stop-color="#fff" stop-opacity="0.22"/><stop offset="0.5" stop-color="#fff" stop-opacity="0.13"/><stop offset="1" stop-color="#fff" stop-opacity="0"/></radialGradient>
<linearGradient id="haze" x1="0" y1="0" x2="1" y2="0"><stop offset="0" stop-color="#fff" stop-opacity="0.06"/><stop offset="0.15" stop-color="#fff" stop-opacity="0.03"/><stop offset="0.45" stop-color="#fff" stop-opacity="0.015"/><stop offset="1" stop-color="#fff" stop-opacity="0"/></linearGradient>
<filter id="jetmap" filterUnits="userSpaceOnUse" x="690" y="280" width="270" height="430" color-interpolation-filters="sRGB"><feTurbulence type="fractalNoise" baseFrequency="0.07 0.16" numOctaves="2" seed="3" result="t"/><feDisplacementMap in="SourceGraphic" in2="t" scale="4.5" xChannelSelector="R" yChannelSelector="G" result="d"/><feComponentTransfer in="d"><feFuncR type="table" tableValues="0 0 0 0 0 .35 .9 1 1 .62 .45"/><feFuncG type="table" tableValues="0 0 .06 .42 .88 1 1 .62 .08 0 0"/><feFuncB type="table" tableValues=".23 .52 .92 1 1 .62 .12 0 0 0 0"/></feComponentTransfer></filter>
<linearGradient id="jet" x1="0" y1="0" x2="1" y2="0"><stop offset="0" stop-color="#00003c"/><stop offset="0.06" stop-color="#000090"/><stop offset="0.125" stop-color="#0000ff"/><stop offset="0.25" stop-color="#0080ff"/><stop offset="0.375" stop-color="#00ffff"/><stop offset="0.5" stop-color="#40ff40"/><stop offset="0.56" stop-color="#60ff00"/><stop offset="0.66" stop-color="#ffff00"/><stop offset="0.78" stop-color="#ff9000"/><stop offset="0.89" stop-color="#ff0000"/><stop offset="0.96" stop-color="#a00000"/><stop offset="1" stop-color="#600000"/></linearGradient>
<clipPath id="cL"><rect x="693.0" y="284.0" width="130.0" height="422.6"/></clipPath>
<clipPath id="cR"><rect x="824.2" y="284.0" width="129.4" height="422.6"/></clipPath>
</defs>
<g clip-path="url(#cL)"><g filter="url(#jetmap)">
<rect x="687.0" y="278.0" width="142.0" height="434.6" fill="#000"/>
<rect x="693.0" y="284.0" width="130.0" height="422.6" fill="url(#haze)"/>
<ellipse cx="694.4" cy="547.2" rx="13.4" ry="2.1" fill="url(#kS)" opacity="0.66"/><ellipse cx="719.7" cy="296.3" rx="8.7" ry="2.3" fill="url(#kS)" opacity="0.52"/><ellipse cx="705.8" cy="664.7" rx="6.5" ry="1.9" fill="url(#kS)" opacity="0.49"/><ellipse cx="704.0" cy="289.5" rx="6.2" ry="1.5" fill="url(#kS)" opacity="0.66"/><ellipse cx="707.4" cy="607.6" rx="5.4" ry="1.9" fill="url(#kS)" opacity="0.26"/><ellipse cx="715.6" cy="284.8" rx="12.7" ry="1.5" fill="url(#kS)" opacity="0.31"/><ellipse cx="701.6" cy="699.2" rx="13.6" ry="1.8" fill="url(#kS)" opacity="0.54"/><ellipse cx="701.9" cy="370.5" rx="13.4" ry="2.0" fill="url(#kS)" opacity="0.68"/><ellipse cx="697.3" cy="661.7" rx="5.7" ry="1.4" fill="url(#kS)" opacity="0.23"/><ellipse cx="706.5" cy="411.4" rx="10.0" ry="1.2" fill="url(#kS)" opacity="0.54"/><ellipse cx="703.2" cy="426.8" rx="8.8" ry="1.6" fill="url(#kS)" opacity="0.44"/><ellipse cx="718.8" cy="581.8" rx="4.6" ry="2.4" fill="url(#kS)" opacity="0.21"/><ellipse cx="694.6" cy="600.9" rx="11.9" ry="1.6" fill="url(#kS)" opacity="0.49"/><ellipse cx="695.4" cy="287.8" rx="4.5" ry="1.4" fill="url(#kS)" opacity="0.68"/><ellipse cx="694.2" cy="367.1" rx="13.4" ry="1.6" fill="url(#kS)" opacity="0.38"/><ellipse cx="727.5" cy="505.7" rx="11.8" ry="1.3" fill="url(#kS)" opacity="0.57"/><ellipse cx="695.6" cy="620.9" rx="13.5" ry="1.3" fill="url(#kS)" opacity="0.37"/><ellipse cx="696.2" cy="542.1" rx="13.2" ry="1.6" fill="url(#kS)" opacity="0.66"/><ellipse cx="698.0" cy="514.4" rx="5.8" ry="1.3" fill="url(#kS)" opacity="0.27"/><ellipse cx="705.1" cy="575.2" rx="14.0" ry="1.4" fill="url(#kS)" opacity="0.22"/><ellipse cx="708.0" cy="701.0" rx="6.4" ry="1.9" fill="url(#kS)" opacity="0.61"/><ellipse cx="696.2" cy="476.6" rx="8.2" ry="1.3" fill="url(#kS)" opacity="0.66"/><ellipse cx="721.6" cy="297.8" rx="5.3" ry="2.1" fill="url(#kS)" opacity="0.67"/><ellipse cx="694.2" cy="550.4" rx="11.9" ry="1.3" fill="url(#kS)" opacity="0.42"/><ellipse cx="700.0" cy="347.1" rx="8.5" ry="2.4" fill="url(#kS)" opacity="0.63"/><ellipse cx="703.4" cy="696.5" rx="8.5" ry="1.8" fill="url(#kS)" opacity="0.56"/><ellipse cx="696.9" cy="486.4" rx="5.5" ry="1.7" fill="url(#kS)" opacity="0.69"/><ellipse cx="707.8" cy="689.6" rx="10.3" ry="1.8" fill="url(#kS)" opacity="0.37"/><ellipse cx="696.7" cy="321.7" rx="12.7" ry="1.6" fill="url(#kS)" opacity="0.59"/><ellipse cx="718.9" cy="611.5" rx="10.9" ry="2.0" fill="url(#kS)" opacity="0.58"/><ellipse cx="696.4" cy="437.6" rx="8.9" ry="2.1" fill="url(#kS)" opacity="0.55"/><ellipse cx="704.7" cy="408.2" rx="13.5" ry="2.0" fill="url(#kS)" opacity="0.49"/><ellipse cx="703.9" cy="288.9" rx="10.7" ry="1.8" fill="url(#kS)" opacity="0.61"/><ellipse cx="696.3" cy="557.6" rx="12.0" ry="1.6" fill="url(#kS)" opacity="0.52"/><ellipse cx="699.6" cy="595.8" rx="12.4" ry="2.2" fill="url(#kS)" opacity="0.54"/><ellipse cx="705.3" cy="696.5" rx="13.6" ry="1.8" fill="url(#kS)" opacity="0.46"/><ellipse cx="711.3" cy="354.2" rx="8.8" ry="2.0" fill="url(#kS)" opacity="0.56"/><ellipse cx="723.2" cy="592.6" rx="5.7" ry="2.1" fill="url(#kS)" opacity="0.49"/><ellipse cx="711.4" cy="565.3" rx="11.7" ry="2.0" fill="url(#kS)" opacity="0.56"/><ellipse cx="703.0" cy="295.7" rx="5.6" ry="1.7" fill="url(#kS)" opacity="0.53"/><ellipse cx="701.3" cy="376.6" rx="4.4" ry="1.8" fill="url(#kS)" opacity="0.31"/><ellipse cx="712.5" cy="306.9" rx="5.3" ry="1.6" fill="url(#kS)" opacity="0.29"/><ellipse cx="709.4" cy="365.7" rx="7.8" ry="1.9" fill="url(#kS)" opacity="0.50"/><ellipse cx="696.7" cy="384.5" rx="13.0" ry="1.2" fill="url(#kS)" opacity="0.40"/><ellipse cx="699.3" cy="401.7" rx="12.3" ry="1.6" fill="url(#kS)" opacity="0.22"/><ellipse cx="697.0" cy="543.3" rx="4.9" ry="1.9" fill="url(#kS)" opacity="0.37"/><ellipse cx="719.8" cy="529.5" rx="8.2" ry="2.2" fill="url(#kS)" opacity="0.52"/><ellipse cx="700.2" cy="440.1" rx="5.4" ry="1.9" fill="url(#kS)" opacity="0.48"/><ellipse cx="713.1" cy="688.5" rx="7.5" ry="2.3" fill="url(#kS)" opacity="0.20"/><ellipse cx="697.1" cy="329.6" rx="9.7" ry="1.9" fill="url(#kS)" opacity="0.27"/><ellipse cx="704.3" cy="550.0" rx="8.3" ry="1.5" fill="url(#kS)" opacity="0.35"/><ellipse cx="702.2" cy="695.0" rx="7.8" ry="2.4" fill="url(#kS)" opacity="0.66"/><ellipse cx="695.6" cy="535.8" rx="9.0" ry="1.7" fill="url(#kS)" opacity="0.36"/><ellipse cx="735.1" cy="700.0" rx="8.9" ry="1.5" fill="url(#kS)" opacity="0.44"/><ellipse cx="704.7" cy="335.5" rx="6.9" ry="2.1" fill="url(#kS)" opacity="0.61"/><ellipse cx="704.2" cy="289.6" rx="9.3" ry="1.5" fill="url(#kS)" opacity="0.67"/><ellipse cx="693.3" cy="614.4" rx="5.5" ry="2.4" fill="url(#kS)" opacity="0.35"/><ellipse cx="704.8" cy="541.0" rx="8.7" ry="2.0" fill="url(#kS)" opacity="0.50"/><ellipse cx="711.7" cy="598.2" rx="7.0" ry="1.8" fill="url(#kS)" opacity="0.37"/><ellipse cx="710.1" cy="409.4" rx="9.3" ry="1.8" fill="url(#kS)" opacity="0.38"/><ellipse cx="696.4" cy="598.8" rx="6.5" ry="1.7" fill="url(#kS)" opacity="0.66"/><ellipse cx="695.2" cy="659.2" rx="9.5" ry="1.2" fill="url(#kS)" opacity="0.59"/><ellipse cx="713.9" cy="464.8" rx="10.3" ry="1.8" fill="url(#kS)" opacity="0.66"/><ellipse cx="703.8" cy="446.9" rx="7.9" ry="2.2" fill="url(#kS)" opacity="0.30"/><ellipse cx="695.7" cy="409.3" rx="12.4" ry="2.0" fill="url(#kS)" opacity="0.42"/><ellipse cx="697.9" cy="405.0" rx="11.8" ry="2.3" fill="url(#kS)" opacity="0.27"/><ellipse cx="709.8" cy="486.2" rx="7.3" ry="1.4" fill="url(#kS)" opacity="0.49"/><ellipse cx="698.3" cy="627.1" rx="4.7" ry="1.5" fill="url(#kS)" opacity="0.61"/><ellipse cx="694.8" cy="618.6" rx="11.2" ry="2.4" fill="url(#kS)" opacity="0.70"/><ellipse cx="695.9" cy="580.3" rx="4.5" ry="2.2" fill="url(#kS)" opacity="0.31"/><ellipse cx="715.6" cy="556.9" rx="5.3" ry="1.6" fill="url(#kS)" opacity="0.66"/><ellipse cx="700.0" cy="347.3" rx="10.1" ry="1.7" fill="url(#kS)" opacity="0.28"/><ellipse cx="699.9" cy="547.0" rx="7.8" ry="1.3" fill="url(#kS)" opacity="0.23"/><ellipse cx="694.9" cy="527.1" rx="11.4" ry="2.3" fill="url(#kS)" opacity="0.27"/><ellipse cx="701.0" cy="466.4" rx="8.9" ry="2.3" fill="url(#kS)" opacity="0.39"/><ellipse cx="711.7" cy="307.6" rx="11.0" ry="1.4" fill="url(#kS)" opacity="0.52"/><ellipse cx="709.1" cy="497.8" rx="10.2" ry="1.5" fill="url(#kS)" opacity="0.48"/><ellipse cx="703.2" cy="391.4" rx="11.5" ry="1.8" fill="url(#kS)" opacity="0.27"/><ellipse cx="709.9" cy="383.1" rx="5.8" ry="2.1" fill="url(#kS)" opacity="0.53"/><ellipse cx="710.7" cy="320.0" rx="10.7" ry="1.3" fill="url(#kS)" opacity="0.26"/><ellipse cx="695.2" cy="535.0" rx="8.8" ry="1.6" fill="url(#kS)" opacity="0.60"/><ellipse cx="723.6" cy="296.5" rx="11.3" ry="1.3" fill="url(#kS)" opacity="0.28"/><ellipse cx="697.5" cy="686.3" rx="5.2" ry="2.4" fill="url(#kS)" opacity="0.53"/><ellipse cx="702.7" cy="630.8" rx="5.4" ry="1.9" fill="url(#kS)" opacity="0.38"/><ellipse cx="703.3" cy="383.3" rx="7.5" ry="1.7" fill="url(#kS)" opacity="0.27"/><ellipse cx="710.9" cy="635.2" rx="10.5" ry="2.2" fill="url(#kS)" opacity="0.42"/><ellipse cx="713.0" cy="643.9" rx="9.7" ry="2.1" fill="url(#kS)" opacity="0.40"/><ellipse cx="695.2" cy="325.0" rx="4.3" ry="1.4" fill="url(#kS)" opacity="0.22"/><ellipse cx="718.2" cy="659.8" rx="4.0" ry="1.8" fill="url(#kS)" opacity="0.64"/><ellipse cx="696.0" cy="545.8" rx="8.3" ry="1.8" fill="url(#kS)" opacity="0.25"/><ellipse cx="700.9" cy="349.4" rx="7.9" ry="2.3" fill="url(#kS)" opacity="0.28"/><ellipse cx="705.2" cy="391.4" rx="6.8" ry="1.4" fill="url(#kS)" opacity="0.34"/><ellipse cx="696.8" cy="383.4" rx="13.2" ry="1.6" fill="url(#kS)" opacity="0.67"/><ellipse cx="693.4" cy="574.6" rx="10.7" ry="1.8" fill="url(#kS)" opacity="0.67"/><ellipse cx="699.1" cy="333.8" rx="10.7" ry="2.1" fill="url(#kS)" opacity="0.28"/><ellipse cx="703.8" cy="369.0" rx="4.2" ry="1.5" fill="url(#kS)" opacity="0.24"/><ellipse cx="707.1" cy="453.5" rx="7.1" ry="1.8" fill="url(#kS)" opacity="0.34"/><ellipse cx="695.4" cy="593.5" rx="11.2" ry="1.4" fill="url(#kS)" opacity="0.32"/><ellipse cx="713.1" cy="568.1" rx="8.3" ry="2.4" fill="url(#kS)" opacity="0.20"/><ellipse cx="700.9" cy="309.7" rx="11.8" ry="1.7" fill="url(#kS)" opacity="0.22"/><ellipse cx="711.1" cy="515.8" rx="7.5" ry="1.3" fill="url(#kS)" opacity="0.24"/><ellipse cx="694.2" cy="663.8" rx="8.9" ry="2.3" fill="url(#kS)" opacity="0.23"/><ellipse cx="707.3" cy="386.9" rx="4.6" ry="1.5" fill="url(#kS)" opacity="0.40"/><ellipse cx="697.7" cy="413.3" rx="4.5" ry="1.2" fill="url(#kS)" opacity="0.69"/><ellipse cx="708.2" cy="359.8" rx="9.3" ry="1.3" fill="url(#kS)" opacity="0.36"/><ellipse cx="693.8" cy="329.6" rx="9.4" ry="2.3" fill="url(#kS)" opacity="0.50"/><ellipse cx="693.6" cy="646.1" rx="9.4" ry="1.8" fill="url(#kS)" opacity="0.49"/><ellipse cx="695.7" cy="443.2" rx="10.3" ry="2.1" fill="url(#kS)" opacity="0.66"/><ellipse cx="719.6" cy="414.0" rx="6.2" ry="1.3" fill="url(#kS)" opacity="0.36"/><ellipse cx="701.8" cy="321.0" rx="11.7" ry="2.2" fill="url(#kS)" opacity="0.36"/><ellipse cx="702.8" cy="338.9" rx="4.8" ry="1.7" fill="url(#kS)" opacity="0.49"/><ellipse cx="698.5" cy="387.7" rx="4.6" ry="2.0" fill="url(#kS)" opacity="0.22"/><ellipse cx="696.3" cy="368.5" rx="5.0" ry="1.7" fill="url(#kS)" opacity="0.36"/><ellipse cx="707.1" cy="601.9" rx="9.6" ry="2.3" fill="url(#kS)" opacity="0.53"/><ellipse cx="707.5" cy="605.1" rx="12.2" ry="2.0" fill="url(#kS)" opacity="0.68"/><ellipse cx="700.3" cy="591.7" rx="11.0" ry="1.5" fill="url(#kS)" opacity="0.61"/><ellipse cx="696.8" cy="445.6" rx="5.7" ry="1.5" fill="url(#kS)" opacity="0.54"/><ellipse cx="697.0" cy="404.7" rx="4.6" ry="2.1" fill="url(#kS)" opacity="0.48"/><ellipse cx="700.5" cy="295.6" rx="7.6" ry="2.2" fill="url(#kS)" opacity="0.67"/><ellipse cx="695.5" cy="542.6" rx="6.3" ry="1.7" fill="url(#kS)" opacity="0.38"/><ellipse cx="712.8" cy="423.6" rx="12.3" ry="2.1" fill="url(#kS)" opacity="0.25"/><ellipse cx="694.6" cy="508.1" rx="5.7" ry="2.1" fill="url(#kS)" opacity="0.42"/><ellipse cx="695.1" cy="680.6" rx="7.2" ry="2.3" fill="url(#kS)" opacity="0.43"/><ellipse cx="700.2" cy="467.5" rx="8.4" ry="2.1" fill="url(#kS)" opacity="0.67"/><ellipse cx="712.8" cy="509.1" rx="5.0" ry="2.2" fill="url(#kS)" opacity="0.41"/><ellipse cx="696.8" cy="306.1" rx="13.8" ry="1.2" fill="url(#kS)" opacity="0.49"/><ellipse cx="704.0" cy="487.7" rx="6.2" ry="1.5" fill="url(#kS)" opacity="0.30"/><ellipse cx="703.1" cy="521.7" rx="7.6" ry="2.1" fill="url(#kS)" opacity="0.32"/><ellipse cx="693.5" cy="432.7" rx="12.4" ry="2.2" fill="url(#kS)" opacity="0.51"/><ellipse cx="735.6" cy="453.4" rx="5.4" ry="2.2" fill="url(#kS)" opacity="0.45"/><ellipse cx="696.3" cy="300.0" rx="11.2" ry="2.3" fill="url(#kS)" opacity="0.30"/><ellipse cx="699.0" cy="620.8" rx="7.2" ry="2.0" fill="url(#kS)" opacity="0.63"/><ellipse cx="697.5" cy="547.3" rx="4.1" ry="1.8" fill="url(#kS)" opacity="0.49"/><ellipse cx="706.9" cy="362.1" rx="7.9" ry="1.6" fill="url(#kS)" opacity="0.21"/><ellipse cx="705.6" cy="415.9" rx="11.0" ry="1.7" fill="url(#kS)" opacity="0.69"/><ellipse cx="704.5" cy="628.6" rx="13.2" ry="2.0" fill="url(#kS)" opacity="0.54"/><ellipse cx="697.3" cy="510.8" rx="9.9" ry="2.0" fill="url(#kS)" opacity="0.46"/><ellipse cx="706.6" cy="404.1" rx="4.8" ry="1.3" fill="url(#kS)" opacity="0.38"/><ellipse cx="694.4" cy="529.3" rx="7.1" ry="2.3" fill="url(#kS)" opacity="0.34"/><ellipse cx="716.7" cy="586.6" rx="4.7" ry="2.1" fill="url(#kS)" opacity="0.53"/><ellipse cx="711.3" cy="688.4" rx="12.4" ry="2.1" fill="url(#kS)" opacity="0.51"/><ellipse cx="706.8" cy="372.2" rx="9.2" ry="2.3" fill="url(#kS)" opacity="0.32"/><ellipse cx="707.4" cy="695.9" rx="4.0" ry="1.7" fill="url(#kS)" opacity="0.29"/><ellipse cx="697.1" cy="560.0" rx="13.0" ry="2.3" fill="url(#kS)" opacity="0.51"/><ellipse cx="710.8" cy="447.4" rx="9.5" ry="2.1" fill="url(#kS)" opacity="0.39"/><ellipse cx="707.5" cy="658.7" rx="6.1" ry="1.6" fill="url(#kS)" opacity="0.33"/><ellipse cx="700.3" cy="546.9" rx="10.3" ry="2.1" fill="url(#kS)" opacity="0.31"/><ellipse cx="698.5" cy="310.5" rx="9.7" ry="2.2" fill="url(#kS)" opacity="0.64"/><ellipse cx="706.7" cy="591.7" rx="9.3" ry="2.3" fill="url(#kS)" opacity="0.35"/><ellipse cx="700.9" cy="402.6" rx="10.1" ry="2.4" fill="url(#kS)" opacity="0.29"/><ellipse cx="707.4" cy="296.9" rx="10.0" ry="1.4" fill="url(#kS)" opacity="0.30"/><ellipse cx="705.8" cy="535.2" rx="10.5" ry="2.0" fill="url(#kS)" opacity="0.56"/><ellipse cx="721.3" cy="309.9" rx="13.6" ry="1.6" fill="url(#kS)" opacity="0.63"/><ellipse cx="695.7" cy="556.7" rx="13.3" ry="1.5" fill="url(#kS)" opacity="0.55"/><ellipse cx="699.8" cy="639.3" rx="5.9" ry="1.4" fill="url(#kS)" opacity="0.25"/><ellipse cx="694.0" cy="348.2" rx="10.2" ry="1.3" fill="url(#kS)" opacity="0.58"/><ellipse cx="704.0" cy="595.1" rx="11.1" ry="2.3" fill="url(#kS)" opacity="0.68"/><ellipse cx="717.7" cy="548.2" rx="13.7" ry="1.3" fill="url(#kS)" opacity="0.25"/><ellipse cx="696.9" cy="311.2" rx="8.6" ry="2.0" fill="url(#kS)" opacity="0.57"/><ellipse cx="707.0" cy="319.4" rx="8.0" ry="1.9" fill="url(#kS)" opacity="0.39"/><ellipse cx="704.9" cy="333.7" rx="10.8" ry="1.8" fill="url(#kS)" opacity="0.68"/><ellipse cx="701.3" cy="683.4" rx="4.7" ry="2.1" fill="url(#kS)" opacity="0.56"/><ellipse cx="705.7" cy="409.1" rx="7.5" ry="2.1" fill="url(#kS)" opacity="0.66"/><ellipse cx="704.5" cy="445.5" rx="6.9" ry="1.8" fill="url(#kS)" opacity="0.55"/><ellipse cx="704.2" cy="617.4" rx="7.4" ry="2.2" fill="url(#kS)" opacity="0.46"/><ellipse cx="698.8" cy="305.3" rx="8.2" ry="1.5" fill="url(#kS)" opacity="0.53"/><ellipse cx="693.9" cy="315.0" rx="8.8" ry="2.4" fill="url(#kS)" opacity="0.47"/><ellipse cx="699.7" cy="447.2" rx="13.3" ry="1.3" fill="url(#kS)" opacity="0.38"/><ellipse cx="718.5" cy="626.6" rx="7.6" ry="1.2" fill="url(#kS)" opacity="0.33"/><ellipse cx="693.8" cy="477.6" rx="7.8" ry="1.8" fill="url(#kS)" opacity="0.23"/>
<ellipse cx="711.5" cy="298.0" rx="17.6" ry="2.2" fill="url(#kB)" opacity="1.00"/><ellipse cx="734.0" cy="377.3" rx="40.3" ry="2.2" fill="url(#kB)" opacity="0.65"/><ellipse cx="735.5" cy="395.0" rx="38.4" ry="2.2" fill="url(#kB)" opacity="0.78"/><ellipse cx="734.5" cy="428.0" rx="22.8" ry="2.2" fill="url(#kB)" opacity="1.00"/><ellipse cx="737.5" cy="481.8" rx="42.2" ry="2.2" fill="url(#kB)" opacity="0.65"/><ellipse cx="737.0" cy="501.2" rx="26.0" ry="2.2" fill="url(#kB)" opacity="0.78"/><ellipse cx="725.0" cy="507.6" rx="26.0" ry="2.2" fill="url(#kB)" opacity="0.65"/><ellipse cx="722.5" cy="523.8" rx="22.8" ry="2.2" fill="url(#kB)" opacity="0.52"/><ellipse cx="747.0" cy="542.0" rx="35.1" ry="2.2" fill="url(#kB)" opacity="0.78"/><ellipse cx="751.0" cy="555.7" rx="44.2" ry="2.2" fill="url(#kB)" opacity="0.65"/><ellipse cx="749.5" cy="602.6" rx="31.9" ry="2.2" fill="url(#kB)" opacity="1.00"/><ellipse cx="722.5" cy="622.4" rx="29.2" ry="2.2" fill="url(#kB)" opacity="0.65"/><ellipse cx="737.5" cy="654.5" rx="29.2" ry="2.2" fill="url(#kB)" opacity="0.65"/><ellipse cx="727.5" cy="674.7" rx="16.2" ry="2.2" fill="url(#kB)" opacity="0.78"/><ellipse cx="732.5" cy="343.5" rx="35.8" ry="2.2" fill="url(#kB)" opacity="0.65"/><ellipse cx="727.5" cy="321.0" rx="29.2" ry="2.2" fill="url(#kB)" opacity="0.65"/><ellipse cx="720.0" cy="315.0" rx="26.0" ry="2.2" fill="url(#kB)" opacity="0.39"/><ellipse cx="725.0" cy="455.0" rx="26.0" ry="2.2" fill="url(#kB)" opacity="0.59"/><ellipse cx="722.5" cy="461.0" rx="22.8" ry="2.2" fill="url(#kB)" opacity="0.39"/><ellipse cx="730.0" cy="690.0" rx="39.0" ry="2.2" fill="url(#kB)" opacity="0.45"/><ellipse cx="717.5" cy="640.0" rx="22.8" ry="2.2" fill="url(#kB)" opacity="0.52"/><ellipse cx="715.0" cy="568.0" rx="19.5" ry="2.2" fill="url(#kB)" opacity="0.52"/><ellipse cx="717.5" cy="578.0" rx="22.8" ry="2.2" fill="url(#kB)" opacity="0.39"/><ellipse cx="720.0" cy="595.0" rx="26.0" ry="2.2" fill="url(#kB)" opacity="0.39"/><ellipse cx="715.0" cy="353.0" rx="19.5" ry="2.2" fill="url(#kB)" opacity="0.45"/>
<ellipse cx="696.7" cy="284.8" rx="4.8" ry="2.6" fill="url(#kC)"/><ellipse cx="699.5" cy="303.8" rx="8.0" ry="3.8" fill="url(#kR)"/><ellipse cx="714.9" cy="303.8" rx="6.4" ry="3.2" fill="url(#kR)"/><ellipse cx="695" cy="307.2" rx="4.8" ry="2.6" fill="url(#kG)"/><ellipse cx="700" cy="315" rx="12.4" ry="4.7" fill="url(#kH)"/><ellipse cx="696.7" cy="321" rx="7.8" ry="3.4" fill="url(#kH)"/><ellipse cx="711.6" cy="321" rx="12.8" ry="2.6" fill="url(#kG)"/><ellipse cx="730.5" cy="321" rx="9.6" ry="2.2" fill="url(#kC)"/><ellipse cx="744" cy="321" rx="8.0" ry="1.9" fill="url(#kB)"/><ellipse cx="698" cy="335.4" rx="10.8" ry="4.7" fill="url(#kH)"/><ellipse cx="699.5" cy="342" rx="14.0" ry="5.3" fill="url(#kH)"/><ellipse cx="710" cy="342.7" rx="8.0" ry="3.2" fill="url(#kG)"/><ellipse cx="725" cy="343.5" rx="14.4" ry="2.6" fill="url(#kC)"/><ellipse cx="695" cy="351" rx="5.6" ry="3.2" fill="url(#kG)"/><ellipse cx="705" cy="353" rx="8.0" ry="2.9" fill="url(#kC)"/><ellipse cx="695.5" cy="360.5" rx="7.8" ry="3.9" fill="url(#kH)"/><ellipse cx="699" cy="378" rx="8.0" ry="3.8" fill="url(#kR)"/><ellipse cx="698" cy="381.6" rx="5.6" ry="2.9" fill="url(#kG)"/><ellipse cx="698" cy="395.3" rx="9.3" ry="4.7" fill="url(#kH)"/><ellipse cx="697" cy="408.8" rx="6.4" ry="3.5" fill="url(#kG)"/><ellipse cx="698.5" cy="427.7" rx="12.4" ry="4.0" fill="url(#kH)"/><ellipse cx="711.6" cy="428" rx="8.0" ry="2.9" fill="url(#kG)"/><ellipse cx="737" cy="428" rx="8.0" ry="2.4" fill="url(#kC)"/><ellipse cx="695.5" cy="436.4" rx="5.6" ry="3.2" fill="url(#kR)"/><ellipse cx="703.5" cy="435.8" rx="7.2" ry="2.9" fill="url(#kG)"/><ellipse cx="697" cy="451.2" rx="7.8" ry="4.7" fill="url(#kH)"/><ellipse cx="701" cy="455.8" rx="14.0" ry="4.7" fill="url(#kH)"/><ellipse cx="722" cy="454" rx="9.6" ry="2.4" fill="url(#kC)"/><ellipse cx="730" cy="457.5" rx="11.2" ry="2.2" fill="url(#kB)"/><ellipse cx="698" cy="465.5" rx="8.0" ry="3.2" fill="url(#kR)"/><ellipse cx="697" cy="473.6" rx="6.4" ry="3.5" fill="url(#kR)"/><ellipse cx="709" cy="473.4" rx="8.0" ry="2.9" fill="url(#kG)"/><ellipse cx="698" cy="481.8" rx="9.3" ry="6.2" fill="url(#kH)"/><ellipse cx="697" cy="491.8" rx="5.6" ry="2.9" fill="url(#kG)"/><ellipse cx="697" cy="500.8" rx="7.8" ry="3.9" fill="url(#kH)"/><ellipse cx="710" cy="500" rx="9.6" ry="3.2" fill="url(#kG)"/><ellipse cx="695.5" cy="507.6" rx="5.6" ry="2.9" fill="url(#kC)"/><ellipse cx="696" cy="514.9" rx="6.4" ry="3.5" fill="url(#kR)"/><ellipse cx="697" cy="523.8" rx="5.6" ry="2.9" fill="url(#kG)"/><ellipse cx="697" cy="536.5" rx="7.8" ry="4.7" fill="url(#kH)"/><ellipse cx="695.5" cy="541.9" rx="5.6" ry="3.2" fill="url(#kG)"/><ellipse cx="714" cy="541.4" rx="6.4" ry="2.9" fill="url(#kG)"/><ellipse cx="696" cy="554.3" rx="7.0" ry="4.0" fill="url(#kH)"/><ellipse cx="698" cy="558.4" rx="7.0" ry="3.7" fill="url(#kH)"/><ellipse cx="709.5" cy="557.6" rx="7.8" ry="3.7" fill="url(#kH)"/><ellipse cx="695.5" cy="566.5" rx="5.1" ry="3.2" fill="url(#kR)"/><ellipse cx="709" cy="567" rx="9.6" ry="2.9" fill="url(#kG)"/><ellipse cx="696" cy="576" rx="8.0" ry="4.8" fill="url(#kR)"/><ellipse cx="697" cy="592.7" rx="7.8" ry="4.7" fill="url(#kH)"/><ellipse cx="698" cy="597.7" rx="7.8" ry="4.7" fill="url(#kH)"/><ellipse cx="697" cy="602.6" rx="6.4" ry="3.2" fill="url(#kR)"/><ellipse cx="707.6" cy="602.6" rx="6.4" ry="2.9" fill="url(#kR)"/><ellipse cx="718.4" cy="602.6" rx="6.4" ry="2.9" fill="url(#kR)"/><ellipse cx="732" cy="602.6" rx="11.2" ry="2.4" fill="url(#kC)"/><ellipse cx="697" cy="607" rx="5.6" ry="2.6" fill="url(#kC)"/><ellipse cx="697" cy="622" rx="6.4" ry="2.9" fill="url(#kC)"/><ellipse cx="697" cy="637" rx="9.3" ry="6.2" fill="url(#kH)"/><ellipse cx="717" cy="637" rx="12.8" ry="2.6" fill="url(#kC)"/><ellipse cx="698" cy="642.3" rx="6.4" ry="3.2" fill="url(#kG)"/><ellipse cx="709" cy="645.5" rx="8.0" ry="2.9" fill="url(#kC)"/><ellipse cx="697" cy="651.2" rx="7.8" ry="4.7" fill="url(#kH)"/><ellipse cx="711.6" cy="654.5" rx="11.2" ry="2.6" fill="url(#kC)"/><ellipse cx="697.6" cy="662.6" rx="8.0" ry="4.8" fill="url(#kR)"/><ellipse cx="697" cy="674.7" rx="9.3" ry="3.9" fill="url(#kH)"/><ellipse cx="709" cy="674.7" rx="8.0" ry="3.2" fill="url(#kR)"/><ellipse cx="720" cy="674.7" rx="9.6" ry="2.9" fill="url(#kG)"/><ellipse cx="696" cy="683.6" rx="7.8" ry="6.2" fill="url(#kH)"/><ellipse cx="697" cy="688" rx="7.2" ry="3.5" fill="url(#kR)"/><ellipse cx="710" cy="688" rx="8.0" ry="2.7" fill="url(#kC)"/><ellipse cx="697" cy="694.5" rx="6.4" ry="3.5" fill="url(#kR)"/><ellipse cx="697.6" cy="703" rx="5.6" ry="2.6" fill="url(#kC)"/>
</g></g>
<g clip-path="url(#cR)"><g filter="url(#jetmap)">
<rect x="818.2" y="278.0" width="142.0" height="434.6" fill="#000"/>
<rect x="824.2" y="284.0" width="130.0" height="422.6" fill="url(#haze)"/>
<ellipse cx="829.9" cy="479.7" rx="12.7" ry="1.2" fill="url(#kS)" opacity="0.45"/><ellipse cx="830.1" cy="663.6" rx="4.8" ry="1.9" fill="url(#kS)" opacity="0.51"/><ellipse cx="841.2" cy="301.3" rx="8.5" ry="2.1" fill="url(#kS)" opacity="0.28"/><ellipse cx="840.3" cy="384.6" rx="5.1" ry="1.8" fill="url(#kS)" opacity="0.66"/><ellipse cx="826.4" cy="533.5" rx="11.5" ry="1.3" fill="url(#kS)" opacity="0.35"/><ellipse cx="838.8" cy="568.9" rx="11.3" ry="1.7" fill="url(#kS)" opacity="0.24"/><ellipse cx="827.2" cy="396.7" rx="12.1" ry="1.4" fill="url(#kS)" opacity="0.64"/><ellipse cx="836.0" cy="655.6" rx="4.5" ry="1.7" fill="url(#kS)" opacity="0.45"/><ellipse cx="853.3" cy="293.9" rx="5.1" ry="1.9" fill="url(#kS)" opacity="0.26"/><ellipse cx="839.1" cy="528.6" rx="13.0" ry="1.4" fill="url(#kS)" opacity="0.20"/><ellipse cx="826.9" cy="319.3" rx="4.8" ry="1.8" fill="url(#kS)" opacity="0.66"/><ellipse cx="824.9" cy="461.5" rx="8.0" ry="2.0" fill="url(#kS)" opacity="0.25"/><ellipse cx="833.8" cy="529.0" rx="13.6" ry="1.3" fill="url(#kS)" opacity="0.48"/><ellipse cx="842.4" cy="540.3" rx="5.5" ry="1.5" fill="url(#kS)" opacity="0.70"/><ellipse cx="841.2" cy="705.7" rx="13.5" ry="1.5" fill="url(#kS)" opacity="0.51"/><ellipse cx="840.4" cy="302.2" rx="7.7" ry="2.0" fill="url(#kS)" opacity="0.50"/><ellipse cx="836.0" cy="611.4" rx="12.6" ry="1.9" fill="url(#kS)" opacity="0.43"/><ellipse cx="831.4" cy="454.0" rx="13.9" ry="1.9" fill="url(#kS)" opacity="0.21"/><ellipse cx="831.8" cy="621.8" rx="6.1" ry="1.7" fill="url(#kS)" opacity="0.36"/><ellipse cx="838.3" cy="321.5" rx="10.3" ry="1.3" fill="url(#kS)" opacity="0.59"/><ellipse cx="829.4" cy="294.7" rx="9.0" ry="2.1" fill="url(#kS)" opacity="0.32"/><ellipse cx="850.9" cy="595.7" rx="8.3" ry="1.5" fill="url(#kS)" opacity="0.68"/><ellipse cx="845.0" cy="453.4" rx="7.7" ry="2.0" fill="url(#kS)" opacity="0.29"/><ellipse cx="845.5" cy="640.4" rx="6.6" ry="1.3" fill="url(#kS)" opacity="0.69"/><ellipse cx="865.6" cy="357.0" rx="10.1" ry="1.2" fill="url(#kS)" opacity="0.23"/><ellipse cx="838.7" cy="372.2" rx="7.9" ry="1.9" fill="url(#kS)" opacity="0.68"/><ellipse cx="836.4" cy="433.8" rx="5.4" ry="1.3" fill="url(#kS)" opacity="0.48"/><ellipse cx="839.1" cy="578.1" rx="4.7" ry="1.7" fill="url(#kS)" opacity="0.55"/><ellipse cx="847.4" cy="606.9" rx="5.7" ry="2.1" fill="url(#kS)" opacity="0.59"/><ellipse cx="845.2" cy="656.0" rx="8.9" ry="1.3" fill="url(#kS)" opacity="0.22"/><ellipse cx="834.0" cy="507.5" rx="4.8" ry="2.1" fill="url(#kS)" opacity="0.31"/><ellipse cx="842.9" cy="289.5" rx="5.8" ry="1.7" fill="url(#kS)" opacity="0.48"/><ellipse cx="832.2" cy="448.1" rx="13.5" ry="1.8" fill="url(#kS)" opacity="0.67"/><ellipse cx="839.4" cy="296.2" rx="13.9" ry="2.3" fill="url(#kS)" opacity="0.47"/><ellipse cx="856.2" cy="505.2" rx="4.7" ry="2.0" fill="url(#kS)" opacity="0.47"/><ellipse cx="831.8" cy="410.9" rx="11.2" ry="2.1" fill="url(#kS)" opacity="0.25"/><ellipse cx="840.9" cy="579.6" rx="10.4" ry="1.3" fill="url(#kS)" opacity="0.50"/><ellipse cx="829.2" cy="441.7" rx="12.8" ry="1.5" fill="url(#kS)" opacity="0.61"/><ellipse cx="845.9" cy="592.3" rx="4.4" ry="1.9" fill="url(#kS)" opacity="0.51"/><ellipse cx="845.9" cy="570.5" rx="8.1" ry="1.3" fill="url(#kS)" opacity="0.29"/><ellipse cx="826.5" cy="541.0" rx="7.5" ry="1.8" fill="url(#kS)" opacity="0.47"/><ellipse cx="829.2" cy="295.0" rx="11.8" ry="1.6" fill="url(#kS)" opacity="0.59"/><ellipse cx="843.4" cy="287.6" rx="13.8" ry="2.4" fill="url(#kS)" opacity="0.62"/><ellipse cx="829.9" cy="328.9" rx="7.5" ry="1.5" fill="url(#kS)" opacity="0.59"/><ellipse cx="825.5" cy="365.2" rx="5.2" ry="2.3" fill="url(#kS)" opacity="0.69"/><ellipse cx="831.3" cy="441.4" rx="11.4" ry="1.8" fill="url(#kS)" opacity="0.46"/><ellipse cx="831.5" cy="440.1" rx="6.6" ry="1.8" fill="url(#kS)" opacity="0.30"/><ellipse cx="832.4" cy="469.6" rx="13.4" ry="1.2" fill="url(#kS)" opacity="0.25"/><ellipse cx="834.9" cy="622.1" rx="12.5" ry="1.9" fill="url(#kS)" opacity="0.31"/><ellipse cx="828.3" cy="308.8" rx="6.8" ry="1.6" fill="url(#kS)" opacity="0.60"/><ellipse cx="831.5" cy="696.3" rx="13.3" ry="2.3" fill="url(#kS)" opacity="0.66"/><ellipse cx="855.7" cy="692.9" rx="4.9" ry="1.6" fill="url(#kS)" opacity="0.32"/><ellipse cx="838.0" cy="539.3" rx="12.4" ry="1.7" fill="url(#kS)" opacity="0.30"/><ellipse cx="824.9" cy="400.8" rx="8.6" ry="1.9" fill="url(#kS)" opacity="0.48"/><ellipse cx="830.1" cy="469.9" rx="7.3" ry="1.4" fill="url(#kS)" opacity="0.47"/><ellipse cx="838.2" cy="363.7" rx="11.1" ry="2.0" fill="url(#kS)" opacity="0.27"/><ellipse cx="832.8" cy="548.3" rx="10.1" ry="2.1" fill="url(#kS)" opacity="0.64"/><ellipse cx="838.1" cy="594.0" rx="6.1" ry="1.9" fill="url(#kS)" opacity="0.37"/><ellipse cx="840.2" cy="292.1" rx="12.7" ry="1.6" fill="url(#kS)" opacity="0.62"/><ellipse cx="829.7" cy="501.3" rx="5.0" ry="2.1" fill="url(#kS)" opacity="0.34"/><ellipse cx="826.2" cy="509.5" rx="13.2" ry="1.3" fill="url(#kS)" opacity="0.27"/><ellipse cx="825.2" cy="353.0" rx="5.0" ry="2.2" fill="url(#kS)" opacity="0.70"/><ellipse cx="849.1" cy="558.3" rx="9.1" ry="1.4" fill="url(#kS)" opacity="0.55"/><ellipse cx="843.4" cy="435.7" rx="6.7" ry="1.6" fill="url(#kS)" opacity="0.39"/><ellipse cx="847.2" cy="361.1" rx="9.7" ry="1.2" fill="url(#kS)" opacity="0.54"/><ellipse cx="843.8" cy="292.5" rx="8.8" ry="2.2" fill="url(#kS)" opacity="0.54"/><ellipse cx="824.5" cy="667.8" rx="5.4" ry="1.7" fill="url(#kS)" opacity="0.54"/><ellipse cx="836.2" cy="382.1" rx="7.3" ry="2.1" fill="url(#kS)" opacity="0.37"/><ellipse cx="857.3" cy="537.9" rx="4.3" ry="1.4" fill="url(#kS)" opacity="0.59"/><ellipse cx="833.9" cy="566.8" rx="5.0" ry="1.4" fill="url(#kS)" opacity="0.31"/><ellipse cx="832.8" cy="513.5" rx="6.0" ry="2.0" fill="url(#kS)" opacity="0.41"/><ellipse cx="830.2" cy="641.8" rx="14.0" ry="2.3" fill="url(#kS)" opacity="0.56"/><ellipse cx="849.5" cy="493.7" rx="8.0" ry="1.8" fill="url(#kS)" opacity="0.52"/><ellipse cx="834.4" cy="691.4" rx="9.6" ry="2.3" fill="url(#kS)" opacity="0.68"/><ellipse cx="843.4" cy="319.9" rx="11.7" ry="2.4" fill="url(#kS)" opacity="0.29"/><ellipse cx="849.1" cy="508.5" rx="13.3" ry="1.8" fill="url(#kS)" opacity="0.54"/><ellipse cx="826.6" cy="696.0" rx="12.5" ry="1.9" fill="url(#kS)" opacity="0.30"/><ellipse cx="828.7" cy="635.7" rx="6.8" ry="1.4" fill="url(#kS)" opacity="0.35"/><ellipse cx="845.9" cy="299.2" rx="8.5" ry="2.4" fill="url(#kS)" opacity="0.22"/><ellipse cx="838.8" cy="357.1" rx="5.4" ry="1.9" fill="url(#kS)" opacity="0.30"/><ellipse cx="843.8" cy="566.0" rx="12.4" ry="2.1" fill="url(#kS)" opacity="0.66"/><ellipse cx="827.1" cy="348.3" rx="7.8" ry="2.4" fill="url(#kS)" opacity="0.40"/><ellipse cx="833.6" cy="404.7" rx="12.5" ry="2.0" fill="url(#kS)" opacity="0.25"/><ellipse cx="825.3" cy="691.5" rx="9.2" ry="1.5" fill="url(#kS)" opacity="0.51"/><ellipse cx="825.6" cy="685.3" rx="6.0" ry="1.3" fill="url(#kS)" opacity="0.46"/><ellipse cx="826.3" cy="415.6" rx="12.5" ry="1.4" fill="url(#kS)" opacity="0.21"/><ellipse cx="833.4" cy="480.4" rx="6.3" ry="1.4" fill="url(#kS)" opacity="0.52"/><ellipse cx="833.3" cy="679.6" rx="7.7" ry="2.0" fill="url(#kS)" opacity="0.36"/><ellipse cx="827.7" cy="670.7" rx="11.4" ry="1.5" fill="url(#kS)" opacity="0.22"/><ellipse cx="825.4" cy="292.2" rx="12.4" ry="2.1" fill="url(#kS)" opacity="0.38"/><ellipse cx="825.8" cy="519.6" rx="11.1" ry="2.1" fill="url(#kS)" opacity="0.67"/><ellipse cx="829.9" cy="309.0" rx="9.7" ry="1.8" fill="url(#kS)" opacity="0.62"/><ellipse cx="840.9" cy="437.9" rx="7.5" ry="1.8" fill="url(#kS)" opacity="0.65"/><ellipse cx="851.5" cy="298.4" rx="13.7" ry="1.6" fill="url(#kS)" opacity="0.43"/><ellipse cx="829.7" cy="405.6" rx="11.5" ry="1.3" fill="url(#kS)" opacity="0.64"/><ellipse cx="841.9" cy="630.9" rx="10.8" ry="1.5" fill="url(#kS)" opacity="0.33"/><ellipse cx="858.3" cy="475.0" rx="8.1" ry="2.3" fill="url(#kS)" opacity="0.29"/><ellipse cx="839.0" cy="557.9" rx="12.0" ry="2.0" fill="url(#kS)" opacity="0.41"/><ellipse cx="837.9" cy="292.1" rx="13.4" ry="2.4" fill="url(#kS)" opacity="0.68"/><ellipse cx="830.1" cy="698.2" rx="5.7" ry="1.2" fill="url(#kS)" opacity="0.35"/><ellipse cx="838.6" cy="287.3" rx="6.0" ry="1.9" fill="url(#kS)" opacity="0.39"/><ellipse cx="837.6" cy="399.8" rx="13.7" ry="1.4" fill="url(#kS)" opacity="0.64"/><ellipse cx="828.5" cy="506.6" rx="11.4" ry="2.3" fill="url(#kS)" opacity="0.30"/><ellipse cx="831.3" cy="483.8" rx="10.5" ry="1.8" fill="url(#kS)" opacity="0.58"/><ellipse cx="833.1" cy="556.3" rx="11.7" ry="1.8" fill="url(#kS)" opacity="0.50"/><ellipse cx="845.1" cy="552.2" rx="8.8" ry="1.3" fill="url(#kS)" opacity="0.40"/><ellipse cx="825.2" cy="612.8" rx="8.8" ry="1.9" fill="url(#kS)" opacity="0.47"/><ellipse cx="830.0" cy="347.3" rx="10.5" ry="2.0" fill="url(#kS)" opacity="0.47"/><ellipse cx="826.3" cy="681.1" rx="6.8" ry="2.0" fill="url(#kS)" opacity="0.24"/><ellipse cx="825.3" cy="691.8" rx="11.0" ry="2.1" fill="url(#kS)" opacity="0.28"/><ellipse cx="836.7" cy="286.9" rx="8.4" ry="1.8" fill="url(#kS)" opacity="0.58"/><ellipse cx="837.0" cy="441.4" rx="11.7" ry="1.4" fill="url(#kS)" opacity="0.69"/><ellipse cx="831.3" cy="578.1" rx="12.8" ry="1.6" fill="url(#kS)" opacity="0.55"/><ellipse cx="839.7" cy="668.2" rx="13.6" ry="1.5" fill="url(#kS)" opacity="0.60"/><ellipse cx="826.2" cy="541.2" rx="8.1" ry="1.7" fill="url(#kS)" opacity="0.61"/><ellipse cx="829.5" cy="475.0" rx="4.4" ry="1.5" fill="url(#kS)" opacity="0.62"/><ellipse cx="829.7" cy="657.1" rx="11.7" ry="2.2" fill="url(#kS)" opacity="0.34"/><ellipse cx="826.9" cy="487.6" rx="6.9" ry="1.3" fill="url(#kS)" opacity="0.57"/><ellipse cx="852.3" cy="351.2" rx="5.0" ry="2.1" fill="url(#kS)" opacity="0.61"/><ellipse cx="841.3" cy="390.0" rx="7.7" ry="1.5" fill="url(#kS)" opacity="0.55"/><ellipse cx="824.9" cy="695.4" rx="9.4" ry="1.7" fill="url(#kS)" opacity="0.56"/><ellipse cx="841.7" cy="397.8" rx="6.5" ry="2.0" fill="url(#kS)" opacity="0.33"/><ellipse cx="825.6" cy="701.7" rx="4.2" ry="1.9" fill="url(#kS)" opacity="0.27"/><ellipse cx="833.7" cy="495.3" rx="10.0" ry="2.2" fill="url(#kS)" opacity="0.39"/><ellipse cx="827.4" cy="514.8" rx="7.4" ry="2.2" fill="url(#kS)" opacity="0.38"/><ellipse cx="831.6" cy="677.2" rx="4.8" ry="1.3" fill="url(#kS)" opacity="0.38"/><ellipse cx="831.3" cy="480.1" rx="8.5" ry="2.3" fill="url(#kS)" opacity="0.67"/><ellipse cx="832.0" cy="548.6" rx="6.6" ry="1.9" fill="url(#kS)" opacity="0.28"/><ellipse cx="827.5" cy="310.5" rx="5.6" ry="2.2" fill="url(#kS)" opacity="0.26"/><ellipse cx="835.6" cy="384.0" rx="5.5" ry="2.3" fill="url(#kS)" opacity="0.54"/><ellipse cx="853.6" cy="360.5" rx="5.3" ry="2.1" fill="url(#kS)" opacity="0.55"/><ellipse cx="838.5" cy="532.6" rx="8.8" ry="1.7" fill="url(#kS)" opacity="0.34"/><ellipse cx="834.2" cy="557.2" rx="6.6" ry="1.6" fill="url(#kS)" opacity="0.65"/><ellipse cx="838.1" cy="523.8" rx="10.5" ry="2.0" fill="url(#kS)" opacity="0.20"/><ellipse cx="841.8" cy="614.9" rx="9.2" ry="2.2" fill="url(#kS)" opacity="0.67"/><ellipse cx="841.8" cy="401.0" rx="5.6" ry="1.6" fill="url(#kS)" opacity="0.21"/><ellipse cx="825.9" cy="383.4" rx="8.0" ry="1.2" fill="url(#kS)" opacity="0.44"/><ellipse cx="825.2" cy="643.5" rx="11.1" ry="1.3" fill="url(#kS)" opacity="0.56"/><ellipse cx="831.6" cy="364.4" rx="9.4" ry="1.7" fill="url(#kS)" opacity="0.69"/><ellipse cx="844.4" cy="372.7" rx="13.0" ry="1.4" fill="url(#kS)" opacity="0.25"/><ellipse cx="851.7" cy="375.2" rx="5.8" ry="1.9" fill="url(#kS)" opacity="0.34"/><ellipse cx="830.8" cy="435.5" rx="11.9" ry="1.9" fill="url(#kS)" opacity="0.33"/><ellipse cx="826.9" cy="598.8" rx="10.9" ry="2.2" fill="url(#kS)" opacity="0.58"/><ellipse cx="827.6" cy="578.7" rx="13.3" ry="2.3" fill="url(#kS)" opacity="0.48"/><ellipse cx="838.1" cy="358.9" rx="11.1" ry="1.6" fill="url(#kS)" opacity="0.24"/><ellipse cx="831.8" cy="365.8" rx="5.4" ry="2.1" fill="url(#kS)" opacity="0.54"/><ellipse cx="834.2" cy="509.2" rx="8.5" ry="1.8" fill="url(#kS)" opacity="0.30"/><ellipse cx="846.3" cy="705.3" rx="8.4" ry="1.8" fill="url(#kS)" opacity="0.30"/><ellipse cx="839.7" cy="473.3" rx="11.4" ry="1.6" fill="url(#kS)" opacity="0.51"/><ellipse cx="827.1" cy="567.2" rx="5.4" ry="2.2" fill="url(#kS)" opacity="0.24"/><ellipse cx="827.9" cy="392.9" rx="6.8" ry="1.7" fill="url(#kS)" opacity="0.67"/><ellipse cx="830.8" cy="693.4" rx="6.2" ry="2.0" fill="url(#kS)" opacity="0.61"/><ellipse cx="827.6" cy="501.2" rx="4.7" ry="1.3" fill="url(#kS)" opacity="0.22"/><ellipse cx="832.1" cy="590.0" rx="9.9" ry="1.3" fill="url(#kS)" opacity="0.67"/><ellipse cx="836.4" cy="700.6" rx="12.8" ry="2.0" fill="url(#kS)" opacity="0.57"/><ellipse cx="831.5" cy="361.1" rx="11.3" ry="1.7" fill="url(#kS)" opacity="0.23"/><ellipse cx="825.2" cy="304.3" rx="6.7" ry="2.3" fill="url(#kS)" opacity="0.40"/><ellipse cx="835.1" cy="371.9" rx="5.0" ry="1.3" fill="url(#kS)" opacity="0.40"/><ellipse cx="840.1" cy="461.7" rx="7.4" ry="1.2" fill="url(#kS)" opacity="0.44"/><ellipse cx="832.8" cy="350.6" rx="5.8" ry="2.1" fill="url(#kS)" opacity="0.41"/><ellipse cx="847.2" cy="434.9" rx="10.3" ry="2.3" fill="url(#kS)" opacity="0.56"/><ellipse cx="832.4" cy="428.2" rx="13.5" ry="1.2" fill="url(#kS)" opacity="0.29"/><ellipse cx="834.5" cy="335.4" rx="7.9" ry="2.0" fill="url(#kS)" opacity="0.37"/><ellipse cx="833.7" cy="488.0" rx="10.8" ry="2.3" fill="url(#kS)" opacity="0.68"/><ellipse cx="858.9" cy="439.7" rx="12.4" ry="2.3" fill="url(#kS)" opacity="0.26"/><ellipse cx="854.7" cy="406.3" rx="8.2" ry="1.6" fill="url(#kS)" opacity="0.43"/><ellipse cx="837.8" cy="682.9" rx="7.2" ry="1.9" fill="url(#kS)" opacity="0.47"/><ellipse cx="835.7" cy="360.8" rx="4.6" ry="2.1" fill="url(#kS)" opacity="0.62"/><ellipse cx="826.4" cy="427.0" rx="10.2" ry="1.9" fill="url(#kS)" opacity="0.67"/><ellipse cx="830.8" cy="570.5" rx="9.7" ry="1.9" fill="url(#kS)" opacity="0.65"/>
<ellipse cx="848.0" cy="299.0" rx="19.5" ry="2.2" fill="url(#kB)" opacity="1.00"/><ellipse cx="853.0" cy="321.0" rx="22.1" ry="2.2" fill="url(#kB)" opacity="0.78"/><ellipse cx="864.0" cy="342.0" rx="33.8" ry="2.2" fill="url(#kB)" opacity="0.91"/><ellipse cx="862.5" cy="378.0" rx="35.8" ry="2.2" fill="url(#kB)" opacity="0.52"/><ellipse cx="868.0" cy="394.7" rx="20.8" ry="2.2" fill="url(#kB)" opacity="1.00"/><ellipse cx="862.5" cy="428.2" rx="27.9" ry="2.2" fill="url(#kB)" opacity="1.00"/><ellipse cx="860.0" cy="456.0" rx="26.0" ry="2.2" fill="url(#kB)" opacity="0.59"/><ellipse cx="883.0" cy="500.8" rx="40.3" ry="2.2" fill="url(#kB)" opacity="0.72"/><ellipse cx="861.5" cy="507.6" rx="30.6" ry="2.2" fill="url(#kB)" opacity="0.65"/><ellipse cx="865.5" cy="523.8" rx="38.4" ry="2.2" fill="url(#kB)" opacity="0.45"/><ellipse cx="885.5" cy="542.0" rx="26.7" ry="2.2" fill="url(#kB)" opacity="0.78"/><ellipse cx="868.0" cy="555.0" rx="24.7" ry="2.2" fill="url(#kB)" opacity="0.78"/><ellipse cx="870.5" cy="592.0" rx="44.9" ry="2.2" fill="url(#kB)" opacity="0.45"/><ellipse cx="895.0" cy="602.6" rx="49.4" ry="2.2" fill="url(#kB)" opacity="1.00"/><ellipse cx="878.0" cy="621.5" rx="54.6" ry="2.2" fill="url(#kB)" opacity="0.59"/><ellipse cx="858.0" cy="654.5" rx="28.6" ry="2.2" fill="url(#kB)" opacity="0.52"/><ellipse cx="875.0" cy="675.0" rx="39.0" ry="2.2" fill="url(#kB)" opacity="0.65"/><ellipse cx="853.0" cy="646.0" rx="22.1" ry="2.2" fill="url(#kB)" opacity="0.45"/><ellipse cx="858.0" cy="688.0" rx="28.6" ry="2.2" fill="url(#kB)" opacity="0.39"/><ellipse cx="853.0" cy="315.0" rx="22.1" ry="2.2" fill="url(#kB)" opacity="0.45"/><ellipse cx="853.0" cy="436.0" rx="22.1" ry="2.2" fill="url(#kB)" opacity="0.39"/><ellipse cx="858.0" cy="474.0" rx="28.6" ry="2.2" fill="url(#kB)" opacity="0.39"/><ellipse cx="855.5" cy="483.0" rx="25.4" ry="2.2" fill="url(#kB)" opacity="0.45"/><ellipse cx="853.0" cy="567.0" rx="22.1" ry="2.2" fill="url(#kB)" opacity="0.45"/>
<ellipse cx="826.5" cy="284.8" rx="4.8" ry="2.6" fill="url(#kR)"/><ellipse cx="828" cy="296" rx="5.6" ry="2.9" fill="url(#kC)"/><ellipse cx="836" cy="303.8" rx="6.4" ry="3.2" fill="url(#kG)"/><ellipse cx="845.4" cy="303.8" rx="6.4" ry="3.2" fill="url(#kR)"/><ellipse cx="826.5" cy="306" rx="4.8" ry="2.6" fill="url(#kC)"/><ellipse cx="829" cy="315" rx="7.0" ry="4.7" fill="url(#kH)"/><ellipse cx="826.5" cy="312" rx="4.8" ry="2.9" fill="url(#kG)"/><ellipse cx="828" cy="321.4" rx="7.0" ry="3.9" fill="url(#kH)"/><ellipse cx="842" cy="321" rx="12.8" ry="2.6" fill="url(#kG)"/><ellipse cx="856" cy="321" rx="11.2" ry="2.2" fill="url(#kC)"/><ellipse cx="828" cy="335" rx="6.4" ry="3.2" fill="url(#kG)"/><ellipse cx="831" cy="342.7" rx="12.4" ry="4.7" fill="url(#kH)"/><ellipse cx="846" cy="342" rx="12.8" ry="2.6" fill="url(#kC)"/><ellipse cx="828" cy="351.6" rx="6.4" ry="3.5" fill="url(#kG)"/><ellipse cx="833" cy="354" rx="6.4" ry="2.6" fill="url(#kC)"/><ellipse cx="826.8" cy="361" rx="6.2" ry="3.9" fill="url(#kH)"/><ellipse cx="828" cy="377.3" rx="7.2" ry="3.5" fill="url(#kG)"/><ellipse cx="841" cy="378" rx="6.4" ry="2.6" fill="url(#kC)"/><ellipse cx="851" cy="378" rx="6.4" ry="2.6" fill="url(#kC)"/><ellipse cx="826.5" cy="384" rx="5.1" ry="2.9" fill="url(#kG)"/><ellipse cx="829.2" cy="395.3" rx="9.3" ry="4.0" fill="url(#kH)"/><ellipse cx="841" cy="393.6" rx="6.4" ry="2.6" fill="url(#kC)"/><ellipse cx="863" cy="394.7" rx="17.6" ry="2.6" fill="url(#kC)"/><ellipse cx="829" cy="408" rx="7.2" ry="3.8" fill="url(#kG)"/><ellipse cx="833" cy="428.2" rx="12.4" ry="4.0" fill="url(#kH)"/><ellipse cx="852" cy="428.2" rx="12.8" ry="2.4" fill="url(#kC)"/><ellipse cx="828" cy="435.8" rx="6.4" ry="3.2" fill="url(#kG)"/><ellipse cx="838" cy="435.4" rx="6.4" ry="2.4" fill="url(#kC)"/><ellipse cx="828" cy="452.6" rx="7.8" ry="6.2" fill="url(#kH)"/><ellipse cx="836" cy="456.6" rx="11.2" ry="3.8" fill="url(#kG)"/><ellipse cx="852" cy="452.5" rx="8.0" ry="2.6" fill="url(#kC)"/><ellipse cx="858" cy="456.8" rx="9.6" ry="2.2" fill="url(#kB)"/><ellipse cx="829" cy="473.6" rx="7.2" ry="3.8" fill="url(#kR)"/><ellipse cx="840" cy="473.4" rx="8.0" ry="2.7" fill="url(#kG)"/><ellipse cx="826.8" cy="480" rx="5.6" ry="3.2" fill="url(#kR)"/><ellipse cx="841" cy="482.8" rx="8.0" ry="2.6" fill="url(#kC)"/><ellipse cx="828" cy="486" rx="5.6" ry="2.9" fill="url(#kG)"/><ellipse cx="827.3" cy="500.3" rx="7.0" ry="4.7" fill="url(#kH)"/><ellipse cx="841" cy="500" rx="12.8" ry="3.2" fill="url(#kG)"/><ellipse cx="828" cy="507.6" rx="6.4" ry="3.2" fill="url(#kG)"/><ellipse cx="828" cy="518.4" rx="6.4" ry="3.2" fill="url(#kG)"/><ellipse cx="826.5" cy="523.8" rx="4.8" ry="2.6" fill="url(#kC)"/><ellipse cx="828" cy="536" rx="7.0" ry="4.0" fill="url(#kH)"/><ellipse cx="828" cy="542.7" rx="6.4" ry="3.2" fill="url(#kG)"/><ellipse cx="844" cy="541.4" rx="6.4" ry="2.9" fill="url(#kG)"/><ellipse cx="828.4" cy="554.3" rx="7.8" ry="4.0" fill="url(#kH)"/><ellipse cx="840" cy="558" rx="7.8" ry="3.7" fill="url(#kH)"/><ellipse cx="828" cy="567" rx="6.4" ry="3.2" fill="url(#kR)"/><ellipse cx="838.6" cy="567" rx="8.0" ry="2.6" fill="url(#kC)"/><ellipse cx="828" cy="576" rx="5.6" ry="2.9" fill="url(#kC)"/><ellipse cx="828" cy="592.7" rx="7.8" ry="4.0" fill="url(#kH)"/><ellipse cx="828" cy="597.7" rx="5.6" ry="3.2" fill="url(#kG)"/><ellipse cx="828" cy="602.6" rx="6.4" ry="3.2" fill="url(#kR)"/><ellipse cx="838" cy="602.6" rx="6.4" ry="2.9" fill="url(#kR)"/><ellipse cx="850.8" cy="602.6" rx="6.4" ry="2.9" fill="url(#kR)"/><ellipse cx="864" cy="602.6" rx="12.8" ry="2.4" fill="url(#kC)"/><ellipse cx="827" cy="607" rx="4.8" ry="2.4" fill="url(#kC)"/><ellipse cx="828.4" cy="621.5" rx="6.4" ry="3.2" fill="url(#kG)"/><ellipse cx="826.8" cy="637" rx="5.0" ry="6.2" fill="url(#kH)"/><ellipse cx="836" cy="639.6" rx="6.4" ry="3.2" fill="url(#kG)"/><ellipse cx="829" cy="642.3" rx="5.6" ry="2.9" fill="url(#kG)"/><ellipse cx="840" cy="645.5" rx="8.0" ry="2.7" fill="url(#kC)"/><ellipse cx="828" cy="650.4" rx="6.4" ry="3.2" fill="url(#kG)"/><ellipse cx="841" cy="654.5" rx="7.2" ry="2.6" fill="url(#kC)"/><ellipse cx="852" cy="654.5" rx="7.2" ry="2.6" fill="url(#kC)"/><ellipse cx="828" cy="662.6" rx="6.4" ry="3.8" fill="url(#kR)"/><ellipse cx="828.4" cy="674.2" rx="9.3" ry="4.7" fill="url(#kH)"/><ellipse cx="844" cy="674.2" rx="8.0" ry="2.9" fill="url(#kG)"/><ellipse cx="852" cy="675" rx="8.0" ry="2.6" fill="url(#kC)"/><ellipse cx="829" cy="688.2" rx="11.2" ry="4.8" fill="url(#kG)"/><ellipse cx="837" cy="687.6" rx="4.8" ry="2.6" fill="url(#kR)"/><ellipse cx="827.3" cy="694.5" rx="5.1" ry="3.2" fill="url(#kG)"/><ellipse cx="826.5" cy="703" rx="4.8" ry="2.2" fill="url(#kC)"/>
</g></g>
<rect x="823" y="282.0" width="1.2" height="424.6" fill="#fff"/>
<path d="M693.4 284.0v-2.4M697.7 284.0v-1.2M702.0 284.0v-1.2M706.4 284.0v-1.2M710.7 284.0v-1.2M715.0 284.0v-2.4M719.3 284.0v-1.2M723.6 284.0v-1.2M728.0 284.0v-1.2M732.3 284.0v-1.2M736.6 284.0v-2.4M740.9 284.0v-1.2M745.2 284.0v-1.2M749.6 284.0v-1.2M753.9 284.0v-1.2M758.2 284.0v-2.4M762.5 284.0v-1.2M766.8 284.0v-1.2M771.2 284.0v-1.2M775.5 284.0v-1.2M779.8 284.0v-2.4M784.1 284.0v-1.2M788.4 284.0v-1.2M792.8 284.0v-1.2M797.1 284.0v-1.2M801.4 284.0v-2.4M805.7 284.0v-1.2M810.0 284.0v-1.2M814.4 284.0v-1.2M818.7 284.0v-1.2M823.0 284.0v-2.4" stroke="#222" stroke-width="0.8" fill="none"/>
<text x="692.5" y="280.6" font-size="5.6" fill="#111" textLength="9.6" lengthAdjust="spacingAndGlyphs">0Hz</text>
<text x="715.0" y="280.6" font-size="5.6" fill="#111" text-anchor="middle">5</text>
<text x="736.6" y="280.6" font-size="5.6" fill="#111" text-anchor="middle">10</text>
<text x="758.1999999999999" y="280.6" font-size="5.6" fill="#111" text-anchor="middle">15</text>
<text x="779.8" y="280.6" font-size="5.6" fill="#111" text-anchor="middle">20</text>
<text x="801.4" y="280.6" font-size="5.6" fill="#111" text-anchor="middle">25</text>
<text x="822.6" y="280.6" font-size="5.6" fill="#111" text-anchor="end" textLength="12.4" lengthAdjust="spacingAndGlyphs">30Hz</text>
<path d="M824.6 284.0v-2.4M828.9 284.0v-1.2M833.2 284.0v-1.2M837.6 284.0v-1.2M841.9 284.0v-1.2M846.2 284.0v-2.4M850.5 284.0v-1.2M854.8 284.0v-1.2M859.2 284.0v-1.2M863.5 284.0v-1.2M867.8 284.0v-2.4M872.1 284.0v-1.2M876.4 284.0v-1.2M880.8 284.0v-1.2M885.1 284.0v-1.2M889.4 284.0v-2.4M893.7 284.0v-1.2M898.0 284.0v-1.2M902.4 284.0v-1.2M906.7 284.0v-1.2M911.0 284.0v-2.4M915.3 284.0v-1.2M919.6 284.0v-1.2M924.0 284.0v-1.2M928.3 284.0v-1.2M932.6 284.0v-2.4M936.9 284.0v-1.2M941.2 284.0v-1.2M945.6 284.0v-1.2M949.9 284.0v-1.2M954.2 284.0v-2.4" stroke="#222" stroke-width="0.8" fill="none"/>
<text x="823.7" y="280.6" font-size="5.6" fill="#111" textLength="9.6" lengthAdjust="spacingAndGlyphs">0Hz</text>
<text x="846.2" y="280.6" font-size="5.6" fill="#111" text-anchor="middle">5</text>
<text x="867.8000000000001" y="280.6" font-size="5.6" fill="#111" text-anchor="middle">10</text>
<text x="889.4" y="280.6" font-size="5.6" fill="#111" text-anchor="middle">15</text>
<text x="911.0" y="280.6" font-size="5.6" fill="#111" text-anchor="middle">20</text>
<text x="932.6" y="280.6" font-size="5.6" fill="#111" text-anchor="middle">25</text>
<text x="953.8000000000001" y="280.6" font-size="5.6" fill="#111" text-anchor="end" textLength="12.4" lengthAdjust="spacingAndGlyphs">30Hz</text>
<rect x="954.0" y="284.0" width="0.9" height="422.6" fill="#222"/>
<path d="M954.0 284.3h2.4M954.0 288.8h4.2M954.0 293.2h2.4M954.0 297.6h2.4M954.0 302.1h2.4M954.0 306.6h2.4M954.0 311.0h6.5M954.0 315.4h2.4M954.0 319.9h2.4M954.0 324.4h2.4M954.0 328.8h2.4M954.0 333.2h4.2M954.0 337.7h2.4M954.0 342.1h2.4M954.0 346.6h2.4M954.0 351.1h2.4M954.0 355.5h6.5M954.0 359.9h2.4M954.0 364.4h2.4M954.0 368.9h2.4M954.0 373.3h2.4M954.0 377.8h4.2M954.0 382.2h2.4M954.0 386.6h2.4M954.0 391.1h2.4M954.0 395.6h2.4M954.0 400.0h6.5M954.0 404.4h2.4M954.0 408.9h2.4M954.0 413.4h2.4M954.0 417.8h2.4M954.0 422.2h4.2M954.0 426.7h2.4M954.0 431.1h2.4M954.0 435.6h2.4M954.0 440.1h2.4M954.0 444.5h6.5M954.0 449.0h2.4M954.0 453.4h2.4M954.0 457.9h2.4M954.0 462.3h2.4M954.0 466.8h4.2M954.0 471.2h2.4M954.0 475.6h2.4M954.0 480.1h2.4M954.0 484.6h2.4M954.0 489.0h6.5M954.0 493.5h2.4M954.0 497.9h2.4M954.0 502.4h2.4M954.0 506.8h2.4M954.0 511.2h4.2M954.0 515.7h2.4M954.0 520.1h2.4M954.0 524.6h2.4M954.0 529.0h2.4M954.0 533.5h6.5M954.0 538.0h2.4M954.0 542.4h2.4M954.0 546.9h2.4M954.0 551.3h2.4M954.0 555.8h4.2M954.0 560.2h2.4M954.0 564.6h2.4M954.0 569.1h2.4M954.0 573.5h2.4M954.0 578.0h6.5M954.0 582.5h2.4M954.0 586.9h2.4M954.0 591.4h2.4M954.0 595.8h2.4M954.0 600.2h4.2M954.0 604.7h2.4M954.0 609.2h2.4M954.0 613.6h2.4M954.0 618.0h2.4M954.0 622.5h6.5M954.0 627.0h2.4M954.0 631.4h2.4M954.0 635.9h2.4M954.0 640.3h2.4M954.0 644.8h4.2M954.0 649.2h2.4M954.0 653.7h2.4M954.0 658.1h2.4M954.0 662.5h2.4M954.0 667.0h6.5M954.0 671.5h2.4M954.0 675.9h2.4M954.0 680.4h2.4M954.0 684.8h2.4M954.0 689.2h4.2M954.0 693.7h2.4M954.0 698.2h2.4M954.0 702.6h2.4M954.0 284.4h8M954.0 706.2h8" stroke="#222" stroke-width="0.8" fill="none"/>
<rect x="955.4" y="472" width="45" height="16.6" fill="#e2e2e2"/>
<path d="M955 472.3h45" stroke="#8a8a8a" stroke-width="0.7" fill="none"/><path d="M955 488.3h45" stroke="#444" stroke-width="0.8" fill="none"/>
<text x="962.5" y="289.1" font-size="5.7" fill="#111" textLength="33" lengthAdjust="spacingAndGlyphs">6ʰ 40′47.898″</text>
<text x="962.5" y="313.1" font-size="5.7" fill="#111" textLength="14" lengthAdjust="spacingAndGlyphs">6ʰ 41′</text>
<text x="962.5" y="357.6" font-size="5.7" fill="#111" textLength="23" lengthAdjust="spacingAndGlyphs">6ʰ 41′20″</text>
<text x="962.5" y="402.1" font-size="5.7" fill="#111" textLength="23" lengthAdjust="spacingAndGlyphs">6ʰ 41′40″</text>
<text x="962.5" y="446.6" font-size="5.7" fill="#111" textLength="14" lengthAdjust="spacingAndGlyphs">6ʰ 42′</text>
<text x="962.5" y="491.1" font-size="5.7" fill="#111" textLength="23" lengthAdjust="spacingAndGlyphs">6ʰ 42′20″</text>
<text x="962.5" y="535.6" font-size="5.7" fill="#111" textLength="23" lengthAdjust="spacingAndGlyphs">6ʰ 42′40″</text>
<text x="962.5" y="580.1" font-size="5.7" fill="#111" textLength="14" lengthAdjust="spacingAndGlyphs">6ʰ 43′</text>
<text x="962.5" y="624.6" font-size="5.7" fill="#111" textLength="23" lengthAdjust="spacingAndGlyphs">6ʰ 43′20″</text>
<text x="962.5" y="669.1" font-size="5.7" fill="#111" textLength="23" lengthAdjust="spacingAndGlyphs">6ʰ 43′40″</text>
<text x="962.5" y="705.7" font-size="5.7" fill="#111" textLength="33" lengthAdjust="spacingAndGlyphs">6ʰ 43′57.624″</text>
<rect x="693" y="707.2" width="307" height="8.6" fill="#f0f0f0"/>
<path d="M698 709.4l-2 2l2 2M994.6 709.4l2 2l-2 2" fill="none" stroke="#a6a6a6" stroke-width="0.9"/>
<text x="692.6" y="721.7" font-size="5.6" fill="#111" textLength="12.5" lengthAdjust="spacingAndGlyphs">0µV²</text>
<text x="726.549" y="721.7" font-size="5.6" fill="#111" text-anchor="middle">30</text>
<text x="759.798" y="721.7" font-size="5.6" fill="#111" text-anchor="middle">60</text>
<text x="793.0469999999999" y="721.7" font-size="5.6" fill="#111" text-anchor="middle">90</text>
<text x="826.2959999999999" y="721.7" font-size="5.6" fill="#111" text-anchor="middle">120</text>
<text x="859.545" y="721.7" font-size="5.6" fill="#111" text-anchor="middle">150</text>
<text x="892.794" y="721.7" font-size="5.6" fill="#111" text-anchor="middle">180</text>
<text x="926.043" y="721.7" font-size="5.6" fill="#111" text-anchor="middle">210</text>
<text x="959.2919999999999" y="721.7" font-size="5.6" fill="#111" text-anchor="middle">240</text>
<text x="999.6" y="721.7" font-size="5.6" fill="#111" text-anchor="end" textLength="19" lengthAdjust="spacingAndGlyphs">277µV²</text>
<path d="M693.4 727v-4.4M698.9 727v-1.8M704.5 727v-3M710.0 727v-1.8M715.6 727v-3M721.1 727v-1.8M726.6 727v-4.4M732.2 727v-1.8M737.7 727v-3M743.3 727v-1.8M748.8 727v-3M754.4 727v-1.8M759.9 727v-4.4M765.4 727v-1.8M771.0 727v-3M776.5 727v-1.8M782.1 727v-3M787.6 727v-1.8M793.1 727v-4.4M798.7 727v-1.8M804.2 727v-3M809.8 727v-1.8M815.3 727v-3M820.9 727v-1.8M826.4 727v-4.4M831.9 727v-1.8M837.5 727v-3M843.0 727v-1.8M848.6 727v-3M854.1 727v-1.8M859.6 727v-4.4M865.2 727v-1.8M870.7 727v-3M876.3 727v-1.8M881.8 727v-3M887.4 727v-1.8M892.9 727v-4.4M898.4 727v-1.8M904.0 727v-3M909.5 727v-1.8M915.1 727v-3M920.6 727v-1.8M926.1 727v-4.4M931.7 727v-1.8M937.2 727v-3M942.8 727v-1.8M948.3 727v-3M953.9 727v-1.8M959.4 727v-4.4M964.9 727v-1.8M970.5 727v-3M976.0 727v-1.8M981.6 727v-3M987.1 727v-1.8M992.6 727v-4.4M998.2 727v-1.8" stroke="#222" stroke-width="0.7" fill="none"/>
<rect x="693" y="727" width="307" height="10" fill="url(#jet)"/>
<rect x="693" y="726.6" width="307" height="0.8" fill="#222"/>
</svg>
</body></html>
